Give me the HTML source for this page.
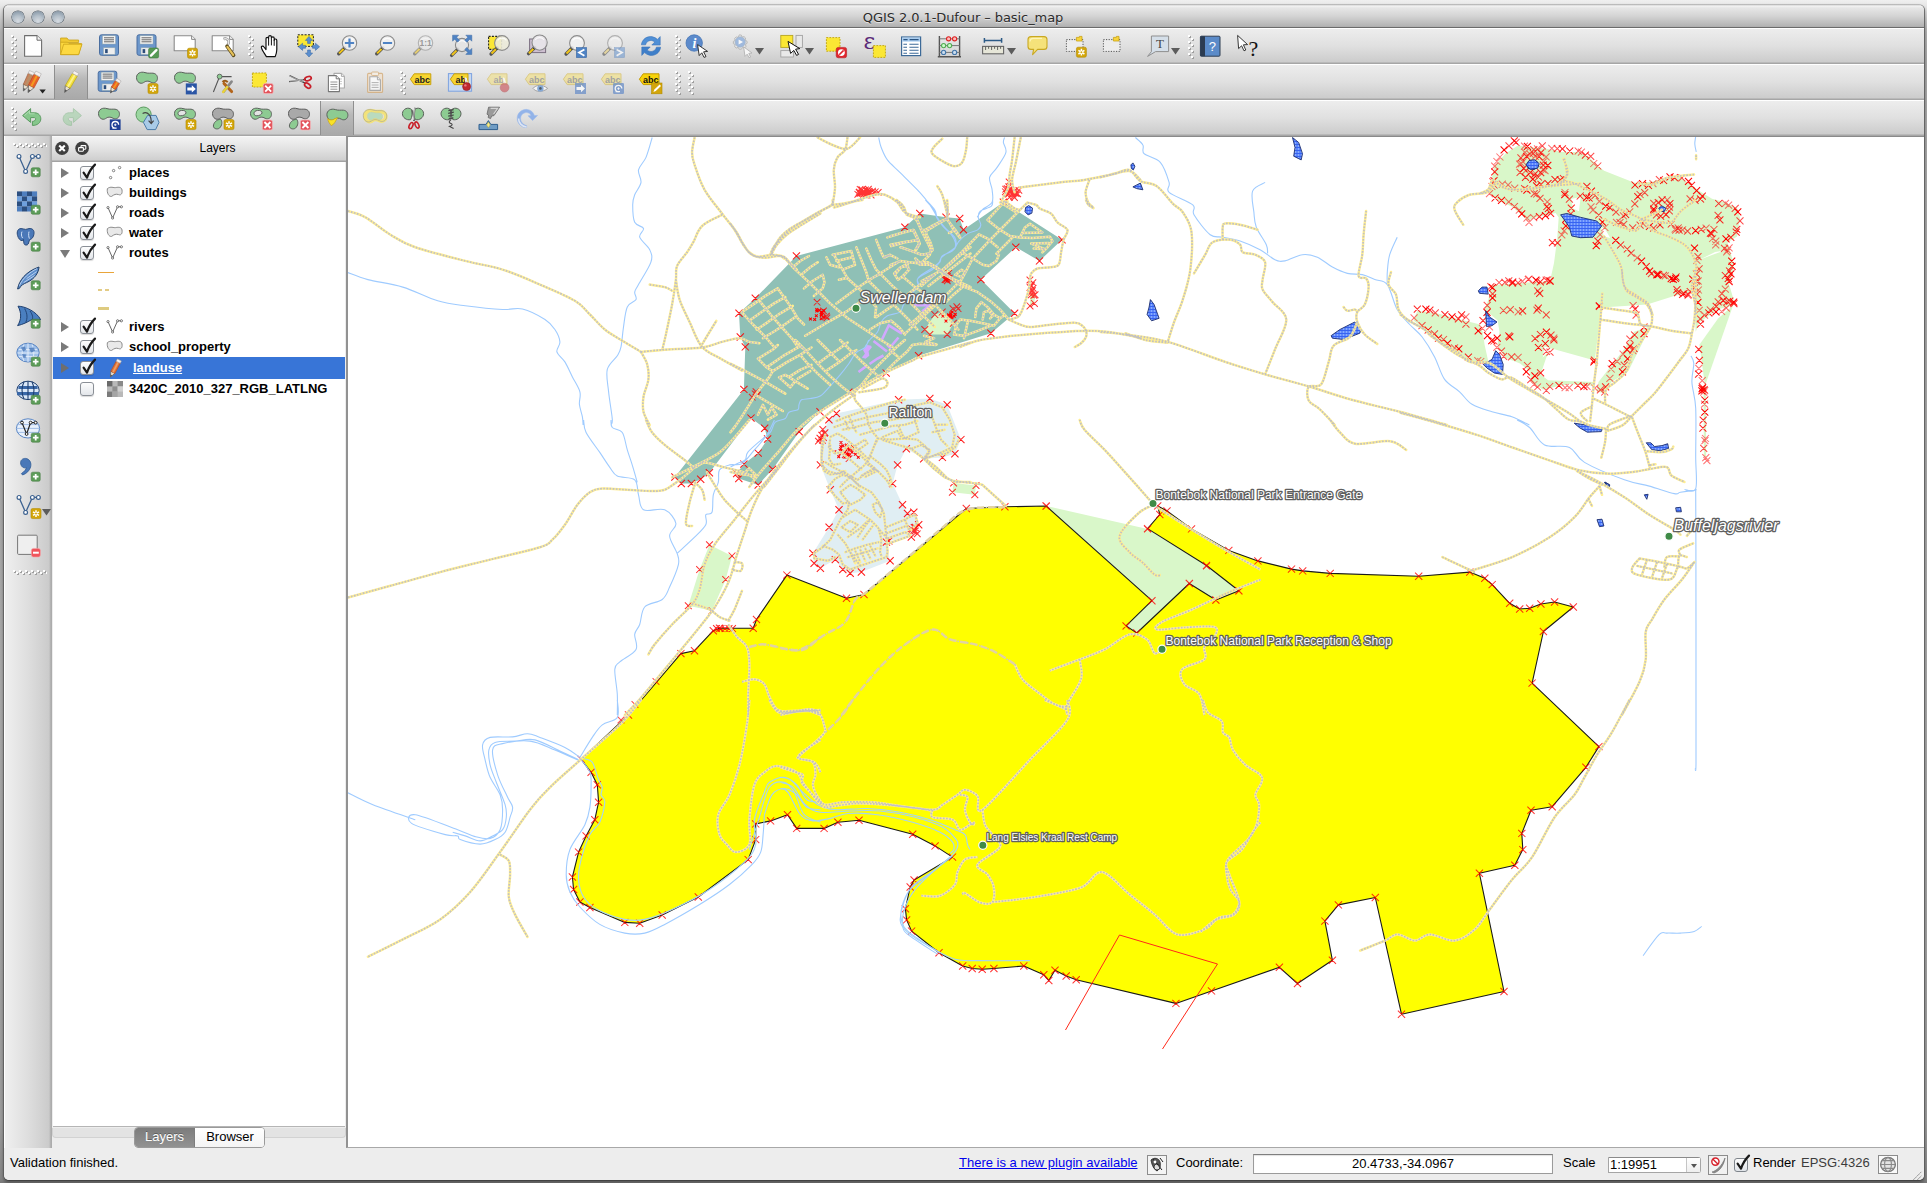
<!DOCTYPE html>
<html lang="en">
<head>
<meta charset="utf-8">
<title>QGIS 2.0.1-Dufour - basic_map</title>
<style>
*{box-sizing:border-box;margin:0;padding:0}
html,body{width:1927px;height:1183px;overflow:hidden}
body{position:relative;font-family:"Liberation Sans",sans-serif;font-size:13px;color:#000;
 background:linear-gradient(to bottom,#efefef 0,#e6e6e6 6px,#c4c4c4 20px,#b0b0b0 32px,#a6a6a6 60px,#a8a8a8 700px,#9c9c9c 1120px,#868686 1178px,#787878 1183px)}
.abs{position:absolute}
#win{position:absolute;left:4px;top:5px;width:1920px;height:1175px;background:#ededed;border-radius:5px 5px 5px 5px;
 box-shadow:0 -1px 0 0 rgba(120,120,120,.35),-1px 0 0 0 rgba(90,90,90,.75),1px 0 0 0 rgba(90,90,90,.75),0 1px 0 0 rgba(60,60,60,.8),0 2px 3px 1px rgba(0,0,0,.3);overflow:hidden}
#title{position:absolute;left:0;top:0;width:1920px;height:23px;background:linear-gradient(to bottom,#cfcfcf 0,#f3f3f3 1px,#e6e6e6 3px,#d4d4d4 11px,#b4b4b4 21px,#ababab 22px);border-bottom:1px solid #6b6b6b;
 font-family:"DejaVu Sans","Liberation Sans",sans-serif;font-size:13px;line-height:26px;text-align:center;color:#2b2b2b;padding-right:2px;letter-spacing:-0.07px;text-shadow:0 1px 0 rgba(255,255,255,.55)}
.tl{position:absolute;top:6px;width:12px;height:12px;border-radius:50%;
 background:radial-gradient(circle at 50% 85%,#d6dbe1 0,#b4bfc9 45%,#94a3b1 75%,#5d6a77 100%);box-shadow:0 0 0 .6px #4d5964,0 1px 0 rgba(255,255,255,.6)}
.tb{position:absolute;left:0;width:1920px;height:36px;background:linear-gradient(to bottom,#fff 0,#fff 1px,#ededed 1px,#e0e0e0 50%,#cccccc 34px,#a6a6a6 35px)}
.grip{position:absolute;width:5px;height:24px;
 background-image:radial-gradient(circle at 1px 1px,#fff 0,#fff .7px,rgba(255,255,255,0) 1.1px),radial-gradient(circle at 2px 2px,#9e9e9e 0,#9e9e9e .9px,rgba(158,158,158,0) 1.4px);background-size:3px 6px}
.grip.g2{background-position:0 3px;}
.pressed{position:absolute;height:34px;top:1px;background:linear-gradient(to bottom,#d9d9d9 0,#b9b9b9 40%,#a9a9a9 100%);border-left:1px solid #8f8f8f;border-right:1px solid #8f8f8f}
.ic{position:absolute;width:24px;height:24px;overflow:visible}
#ltb{position:absolute;left:0;top:131px;width:48px;height:1012px;background:linear-gradient(to right,#fff 0,#fff 1px,#efefef 1.5px,#dedede 50%,#cbcbcb 45px,#acacac 47px)}
#lpanel{position:absolute;left:48px;top:131px;width:295px;height:1012px;background:#ededed}
#lhead{position:absolute;left:0;top:0;width:295px;height:26px;background:linear-gradient(to bottom,#fff 0,#f3f3f3 1px,#e2e2e2 50%,#cfcfcf 24px,#a3a3a3 25px);text-align:center;font-size:12px;line-height:25px;padding-left:36px}
#ltree{position:absolute;left:1px;top:26px;width:292px;height:965px;background:#fff;border-bottom:1px solid #b5b5b5}
.row{position:absolute;left:0;width:292px;height:20px;font-weight:bold;font-size:13px;line-height:20px;white-space:nowrap}
.row .nm{position:absolute;left:76px;top:0}
.tri{position:absolute;left:8px;top:5px;width:0;height:0;border-left:8px solid #7a7a7a;border-top:5px solid transparent;border-bottom:5px solid transparent}
.trid{position:absolute;left:7px;top:7px;width:0;height:0;border-top:8px solid #7a7a7a;border-left:5px solid transparent;border-right:5px solid transparent}
.cb{position:absolute;left:27px;top:3px;width:14px;height:14px;border:1px solid #8a8f96;border-radius:3px;background:linear-gradient(to bottom,#fdfdfd,#e3e6ea);box-shadow:0 1px 1px rgba(0,0,0,.15)}
#map{position:absolute;left:341.5px;top:131px;width:1578.5px;height:1012px;background:#fff;border-left:2px solid #929292;border-top:1px solid #8a8a8a;border-bottom:1px solid #a8a8a8;overflow:hidden}
#status{position:absolute;left:0;top:1143px;width:1920px;height:32px;background:#ededed;font-size:13px}
#status span,#status a{position:absolute;top:7px;line-height:16px;white-space:nowrap}
</style>
</head>
<body>
<div id="win">
<div id="title">QGIS 2.0.1-Dufour – basic_map</div>
<div class="tl" style="left:7.8px"></div><div class="tl" style="left:27.8px"></div><div class="tl" style="left:47.8px"></div>
<div class="tb" style="top:23px"></div>
<div class="tb" style="top:59px"></div>
<div class="tb" style="top:95px"></div>
<div class="pressed" style="left:50px;top:60px;width:34px"></div>
<div class="pressed" style="left:316px;top:96px;width:34px"></div>
<div class="grip" style="left:7px;top:30px;width:3px;height:24px"></div><div class="grip" style="left:10px;top:33px;width:3px;height:21px"></div>
<svg class="ic" style="left:17px;top:29px;width:24px;height:24px" viewBox="0 0 24 24"><path d="M3.6,1.6H16.0L20.6,6.199999999999999V22.200000000000003H3.6Z" fill="#fff" stroke="#6d6d6d" stroke-width="1.1" stroke-linejoin="round"/><path d="M16.0,1.6V6.199999999999999H20.6" fill="#f4f4f4" stroke="#6d6d6d" stroke-width="1"/></svg>
<svg class="ic" style="left:55px;top:29px;width:24px;height:24px" viewBox="0 0 24 24"><path d="M1.6,4H8l1.6,2H19.6V8.5H1.6Z" fill="#f1c933" stroke="#c9a21b" stroke-width=".8"/><path d="M1.6,20.6L1.6,8.2H8.6L10,9.6H22.6L19.6,20.6Z" fill="#fcd83f" stroke="#d0a81d" stroke-width=".9" stroke-linejoin="round"/><path d="M1.6,20.6L4.6,10.2H23L19.6,20.6Z" fill="#fdd942" stroke="#d0a81d" stroke-width=".9" stroke-linejoin="round"/></svg>
<svg class="ic" style="left:93px;top:29px;width:24px;height:24px" viewBox="0 0 24 24"><rect x="2.5" y="0.8" width="19.0" height="20.5" rx="2" fill="#6c97cc" stroke="#4a6ea0" stroke-width="1"/><rect x="5.5" y="1.8" width="13.0" height="8.2" fill="#f4f4f4" stroke="#9aa" stroke-width=".5"/><path d="M7.0,3.8h10.0M7.0,5.8h10.0M7.0,7.8h10.0" stroke="#555" stroke-width=".9"/><rect x="6.5" y="13.8" width="11.5" height="6.5" fill="#eee" stroke="#9aa" stroke-width=".5"/><rect x="8.1" y="15.100000000000001" width="2.6" height="4.0" fill="#2c4d7a"/></svg>
<svg class="ic" style="left:131px;top:29px;width:24px;height:24px" viewBox="0 0 24 24"><rect x="2" y="0.8" width="19.0" height="20.5" rx="2" fill="#6c97cc" stroke="#4a6ea0" stroke-width="1"/><rect x="5.0" y="1.8" width="13.0" height="8.2" fill="#f4f4f4" stroke="#9aa" stroke-width=".5"/><path d="M6.5,3.8h10.0M6.5,5.8h10.0M6.5,7.8h10.0" stroke="#555" stroke-width=".9"/><rect x="6.0" y="13.8" width="11.5" height="6.5" fill="#eee" stroke="#9aa" stroke-width=".5"/><rect x="7.6" y="15.100000000000001" width="2.6" height="4.0" fill="#2c4d7a"/><rect x="13.6" y="14" width="10" height="10" rx="1.6" fill="#559a55" stroke="#3d7a3f" stroke-width=".6"/><path d="M16,21.6L21.4,16.2" stroke="#fff" stroke-width="2.4" stroke-linecap="round"/></svg>
<svg class="ic" style="left:169px;top:29px;width:24px;height:24px" viewBox="0 0 24 24"><path d="M1.2,1.8H18.599999999999998L22.2,5.4V16.8H1.2Z" fill="#fff" stroke="#8a8a8a" stroke-width="1.1" stroke-linejoin="round"/><path d="M18.599999999999998,1.8V5.4H22.2" fill="#f4f4f4" stroke="#8a8a8a" stroke-width="1"/><g opacity="1"><rect x="14.5" y="14.2" width="10" height="10" rx="1.6" fill="#d3a60a" stroke="#b38b00" stroke-width=".6"/><path d="M19.5,15.799999999999999V22.6M16.5,17.4L22.5,21.0M16.5,21.0L22.5,17.4" stroke="#fff" stroke-width="1.5" fill="none"/><circle cx="19.5" cy="19.2" r="1" fill="#d3a60a"/></g></svg>
<svg class="ic" style="left:207px;top:29px;width:24px;height:24px" viewBox="0 0 24 24"><path d="M1.2,1.8H18.599999999999998L22.2,5.4V16.8H1.2Z" fill="#fff" stroke="#8a8a8a" stroke-width="1.1" stroke-linejoin="round"/><path d="M18.599999999999998,1.8V5.4H22.2" fill="#f4f4f4" stroke="#8a8a8a" stroke-width="1"/><path d="M12.5,5.2C14.5,4 17.4,5 17.8,7.6C18,9 17.4,10.2 16.4,10.8" fill="none" stroke="#888" stroke-width="2.6"/><path d="M12.5,5.2C14.5,4 17.4,5 17.8,7.6C18,9 17.4,10.2 16.4,10.8" fill="none" stroke="#e8e8e8" stroke-width="1.4"/><path d="M16,12.2L22.6,21.4" stroke="#5a4a1c" stroke-width="3.6" stroke-linecap="round"/><path d="M16.4,12.8L22.2,20.8" stroke="#e6c15a" stroke-width="2.2" stroke-linecap="round"/></svg>
<div class="grip" style="left:244px;top:30px;width:3px;height:24px"></div><div class="grip" style="left:247px;top:33px;width:3px;height:21px"></div>
<svg class="ic" style="left:255px;top:29px;width:24px;height:24px" viewBox="0 0 24 24"><path d="M7.4,22.6C5.6,19.6 3,16.2 2.4,13.6C2,12 4,11.4 5,13L7,15.6V4.8C7,3 9.6,3 9.6,4.8V3.2C9.6,1.2 12.4,1.2 12.4,3.2V4.2C12.4,2.4 15.2,2.4 15.2,4.2V6.2C15.2,4.6 17.8,4.6 17.8,6.4V15.6C17.8,18.6 17,20.6 16.2,22.6Z" fill="#fff" stroke="#111" stroke-width="1.2" stroke-linejoin="round"/><path d="M9.6,5V11.6M12.4,4.4V11.4M15.2,6V11.8" stroke="#111" stroke-width="1" fill="none"/></svg>
<svg class="ic" style="left:293px;top:29px;width:24px;height:24px" viewBox="0 0 24 24"><rect x="0.8" y="0.8" width="15.6" height="11.6" fill="#fbe734" stroke="#222" stroke-width="1" stroke-dasharray="2 1.4"/><g fill="#5b8fd0" stroke="#3f6ea8" stroke-width=".6"><path d="M12,2.4L15.6,6.4H13.4V9.4H10.6V6.4H8.4Z"/><path d="M12,23L8.4,19H10.6V16H13.4V19H15.6Z"/><path d="M1.4,12.8L5.6,9.2V11.4H8.6V14.2H5.6V16.4Z"/><path d="M22.6,12.8L18.4,9.2V11.4H15.4V14.2H18.4V16.4Z"/></g></svg>
<svg class="ic" style="left:331px;top:29px;width:24px;height:24px" viewBox="0 0 24 24"><g opacity="1"><path d="M9.915999999999999,13.584000000000001L3.7159999999999993,19.784" stroke="#555" stroke-width="3.4" stroke-linecap="round"/><path d="M8.716,14.784L4.115999999999999,19.384" stroke="#f0c419" stroke-width="2" stroke-linecap="butt"/><circle cx="9.716" cy="13.784" r="1.5" fill="#222"/><circle cx="14.5" cy="9" r="7.2" fill="#f1f1f1" fill-opacity=".9" stroke="#8b8b8b" stroke-width="1.1"/><path d="M10.18,6.48A5.4,5.4 0 0 1 18.82,6.48" fill="none" stroke="#fff" stroke-width="1.2" opacity=".8"/></g><path d="M14.5,4.4V13.6M9.9,9H19.1" stroke="#4f83c4" stroke-width="2.2"/></svg>
<svg class="ic" style="left:369px;top:29px;width:24px;height:24px" viewBox="0 0 24 24"><g opacity="1"><path d="M9.915999999999999,13.584000000000001L3.7159999999999993,19.784" stroke="#555" stroke-width="3.4" stroke-linecap="round"/><path d="M8.716,14.784L4.115999999999999,19.384" stroke="#f0c419" stroke-width="2" stroke-linecap="butt"/><circle cx="9.716" cy="13.784" r="1.5" fill="#222"/><circle cx="14.5" cy="9" r="7.2" fill="#f1f1f1" fill-opacity=".9" stroke="#8b8b8b" stroke-width="1.1"/><path d="M10.18,6.48A5.4,5.4 0 0 1 18.82,6.48" fill="none" stroke="#fff" stroke-width="1.2" opacity=".8"/></g><path d="M9.9,9H19.1" stroke="#4f83c4" stroke-width="2.2"/></svg>
<svg class="ic" style="left:407px;top:29px;width:24px;height:24px" viewBox="0 0 24 24"><g opacity="0.55"><path d="M9.915999999999999,13.584000000000001L3.7159999999999993,19.784" stroke="#555" stroke-width="3.4" stroke-linecap="round"/><path d="M8.716,14.784L4.115999999999999,19.384" stroke="#f0c419" stroke-width="2" stroke-linecap="butt"/><circle cx="9.716" cy="13.784" r="1.5" fill="#222"/><circle cx="14.5" cy="9" r="7.2" fill="#f1f1f1" fill-opacity=".9" stroke="#8b8b8b" stroke-width="1.1"/><path d="M10.18,6.48A5.4,5.4 0 0 1 18.82,6.48" fill="none" stroke="#fff" stroke-width="1.2" opacity=".8"/></g><text x="14.6" y="12" font-family="Liberation Sans,sans-serif" font-size="8.5" font-weight="bold" text-anchor="middle" fill="#9a9a9a">1:1</text></svg>
<svg class="ic" style="left:445px;top:29px;width:24px;height:24px" viewBox="0 0 24 24"><g opacity="1"><path d="M8.848,15.152L2.6480000000000015,21.351999999999997" stroke="#555" stroke-width="3.4" stroke-linecap="round"/><path d="M7.6480000000000015,16.352L3.048000000000001,20.951999999999998" stroke="#f0c419" stroke-width="2" stroke-linecap="butt"/><circle cx="8.648000000000001" cy="15.351999999999999" r="1.5" fill="#222"/><circle cx="13" cy="11" r="6.6" fill="#e4e4e4" fill-opacity=".9" stroke="#8b8b8b" stroke-width="1.1"/><path d="M9.040000000000001,8.690000000000001A4.949999999999999,4.949999999999999 0 0 1 16.96,8.690000000000001" fill="none" stroke="#fff" stroke-width="1.2" opacity=".8"/></g><g fill="#4f83c4" stroke="#3a68a3" stroke-width=".5"><path d="M3.6,1.2H9.6L7.6,3.2L10.6,6.2L8.6,8.2L5.6,5.2L3.6,7.2Z"/><path d="M22.8,1.2V7.2L20.8,5.2L17.8,8.2L15.8,6.2L18.8,3.2L16.8,1.2Z"/><path d="M22.8,20.4H16.8L18.8,18.4L15.8,15.4L17.8,13.4L20.8,16.4L22.8,14.4Z"/></g></svg>
<svg class="ic" style="left:483px;top:29px;width:24px;height:24px" viewBox="0 0 24 24"><rect x="1.6" y="2.4" width="13" height="13" fill="#fbe734" stroke="#222" stroke-width="1.1" stroke-dasharray="2 1.3"/><g opacity="1"><path d="M10.272,13.728L4.072000000000001,19.927999999999997" stroke="#555" stroke-width="3.4" stroke-linecap="round"/><path d="M9.072000000000001,14.927999999999999L4.472,19.528" stroke="#f0c419" stroke-width="2" stroke-linecap="butt"/><circle cx="10.072000000000001" cy="13.927999999999999" r="1.5" fill="#222"/><circle cx="15" cy="9" r="7.4" fill="#ecebd9" fill-opacity=".9" stroke="#8b8b8b" stroke-width="1.1"/><path d="M10.559999999999999,6.41A5.550000000000001,5.550000000000001 0 0 1 19.44,6.41" fill="none" stroke="#fff" stroke-width="1.2" opacity=".8"/></g></svg>
<svg class="ic" style="left:521px;top:29px;width:24px;height:24px" viewBox="0 0 24 24"><rect x="4.6" y="5" width="16" height="13.6" fill="#cdbfd0" stroke="#7b6f80" stroke-width="1"/><g opacity="1"><path d="M9.728,13.472L3.5280000000000005,19.671999999999997" stroke="#555" stroke-width="3.4" stroke-linecap="round"/><path d="M8.528,14.671999999999999L3.928,19.272" stroke="#f0c419" stroke-width="2" stroke-linecap="butt"/><circle cx="9.528" cy="13.671999999999999" r="1.5" fill="#222"/><circle cx="14.6" cy="8.6" r="7.6" fill="#e9e6ea" fill-opacity=".9" stroke="#8b8b8b" stroke-width="1.1"/><path d="M10.04,5.9399999999999995A5.699999999999999,5.699999999999999 0 0 1 19.16,5.9399999999999995" fill="none" stroke="#fff" stroke-width="1.2" opacity=".8"/></g></svg>
<svg class="ic" style="left:559px;top:29px;width:24px;height:24px" viewBox="0 0 24 24"><g opacity="1"><path d="M9.272,13.728L3.072000000000001,19.927999999999997" stroke="#555" stroke-width="3.4" stroke-linecap="round"/><path d="M8.072000000000001,14.927999999999999L3.4720000000000004,19.528" stroke="#f0c419" stroke-width="2" stroke-linecap="butt"/><circle cx="9.072000000000001" cy="13.927999999999999" r="1.5" fill="#222"/><circle cx="14" cy="9" r="7.4" fill="#f1f1f1" fill-opacity=".9" stroke="#8b8b8b" stroke-width="1.1"/><path d="M9.559999999999999,6.41A5.550000000000001,5.550000000000001 0 0 1 18.44,6.41" fill="none" stroke="#fff" stroke-width="1.2" opacity=".8"/></g><rect x="13.4" y="13.6" width="10.2" height="10" fill="#4f83c4" stroke="#3a68a3" stroke-width=".6"/><path d="M21.4,15.4L16,18.6L21.4,21.8" fill="none" stroke="#fff" stroke-width="1.8"/></svg>
<svg class="ic" style="left:597px;top:29px;width:24px;height:24px" viewBox="0 0 24 24"><g opacity="0.6"><path d="M9.272,13.728L3.072000000000001,19.927999999999997" stroke="#555" stroke-width="3.4" stroke-linecap="round"/><path d="M8.072000000000001,14.927999999999999L3.4720000000000004,19.528" stroke="#ecd37a" stroke-width="2" stroke-linecap="butt"/><circle cx="9.072000000000001" cy="13.927999999999999" r="1.5" fill="#222"/><circle cx="14" cy="9" r="7.4" fill="#f1f1f1" fill-opacity=".9" stroke="#8b8b8b" stroke-width="1.1"/><path d="M9.559999999999999,6.41A5.550000000000001,5.550000000000001 0 0 1 18.44,6.41" fill="none" stroke="#fff" stroke-width="1.2" opacity=".8"/></g><g opacity=".65"><rect x="13.4" y="13.6" width="10.2" height="10" fill="#7ba2d4" stroke="#6a8ebd" stroke-width=".6"/><path d="M15.6,15.4L21,18.6L15.6,21.8" fill="none" stroke="#fff" stroke-width="1.8"/></g></svg>
<svg class="ic" style="left:635px;top:29px;width:24px;height:24px" viewBox="0 0 24 24"><path d="M2.4,10.8C3,5.4 8,1.6 13.6,2.8C15.6,3.2 17.2,4.2 18.4,5.4L21.2,2.6V11H12.8L15.8,8C14,6.4 11.6,6 9.6,7C8,7.8 7,9.2 6.6,10.8Z" fill="#4f8fd6" stroke="#3a73b8" stroke-width=".6"/><path d="M21.6,13.2C21,18.6 16,22.4 10.4,21.2C8.4,20.8 6.8,19.8 5.6,18.6L2.8,21.4V13H11.2L8.2,16C10,17.6 12.4,18 14.4,17C16,16.2 17,14.8 17.4,13.2Z" fill="#3f7fc9" stroke="#3a73b8" stroke-width=".6"/></svg>
<div class="grip" style="left:671px;top:30px;width:3px;height:24px"></div><div class="grip" style="left:674px;top:33px;width:3px;height:21px"></div>
<svg class="ic" style="left:681px;top:29px;width:24px;height:24px" viewBox="0 0 24 24"><circle cx="9.2" cy="9" r="8.2" fill="#5c8acb" stroke="#4676b6" stroke-width=".8"/><text x="9.4" y="14" font-family="Liberation Serif,serif" font-size="14" font-weight="bold" font-style="italic" text-anchor="middle" fill="#fff">i</text><path d="M12.6,10.6L22.6,17.4L18.6,17.8L21,22.6L19,23.4L16.8,18.8L14.2,21.6Z" fill="#fff" stroke="#222" stroke-width=".9" stroke-linejoin="round"/></svg>
<svg class="ic" style="left:725px;top:29px;width:24px;height:24px" viewBox="0 0 24 24"><g opacity=".8"><path d="M10.4,0.8L12.4,1.2L13,3.2L15,2.6L16.6,4L16,6L17.8,7L18.2,9.2L16.4,10.4L17,12.4L15.6,14L13.6,13.4L12.4,15.2H10.2L9.2,13.4L7.2,14L5.6,12.6L6.2,10.6L4.4,9.6V7.4L6.2,6.4L5.6,4.4L7.2,3L9.2,3.4Z" fill="#e9e9e9" stroke="#a9a9a9" stroke-width=".9"/><circle cx="11.2" cy="8" r="5.2" fill="#8fb0dd" stroke="#9ab" stroke-width=".6"/><path d="M9.6,5.4L14,8L9.6,10.6Z" fill="#fff"/><path d="M14.6,12.8L23,19L19.8,19.4L21.6,23L20,23.6L18.2,20.2L16,22.4Z" fill="#fff" stroke="#aaa" stroke-width=".9"/></g></svg>
<svg class="ic" style="left:775px;top:29px;width:24px;height:24px" viewBox="0 0 24 24"><rect x="1.8" y="1.4" width="12" height="12" fill="#fbe734" stroke="#b7a523" stroke-width=".9"/><rect x="17" y="1.4" width="6.4" height="12" fill="#e9e9e9" stroke="#a2a2a2" stroke-width=".9"/><rect x="1.8" y="16.6" width="12.6" height="6.4" fill="#e9e9e9" stroke="#a2a2a2" stroke-width=".9"/><path d="M9,7.4L20.8,14.6L16.6,15.2L19.6,20.4L17.6,21.4L14.8,16.4L11.6,19.4Z" fill="#fff" stroke="#111" stroke-width="1" stroke-linejoin="round"/></svg>
<svg class="ic" style="left:821px;top:29px;width:24px;height:24px" viewBox="0 0 24 24"><rect x="1.4" y="3.6" width="13.6" height="13.6" fill="#fbe734" stroke="#c4a915" stroke-width="1" stroke-dasharray="1.8 1.2"/><rect x="11.2" y="13.4" width="10.4" height="10.4" rx="2" fill="#e0252c" stroke="#b71c22" stroke-width=".6"/><circle cx="16.4" cy="18.6" r="3.4" fill="#fff"/><path d="M14.2,20.8L18.6,16.4" stroke="#e0252c" stroke-width="1.6"/></svg>
<svg class="ic" style="left:859px;top:29px;width:24px;height:24px" viewBox="0 0 24 24"><text x="6.4" y="15.4" font-family="DejaVu Serif,Liberation Serif,serif" font-size="23" text-anchor="middle" fill="#5b2a78">ε</text><rect x="10.4" y="11.6" width="12" height="11.8" fill="#fbe734" stroke="#c4a915" stroke-width="1" stroke-dasharray="1.8 1.2"/></svg>
<svg class="ic" style="left:895px;top:29px;width:24px;height:24px" viewBox="0 0 24 24"><rect x="2.6" y="3" width="19" height="18.6" fill="#fff" stroke="#3d6a98" stroke-width="1.2"/><rect x="3.2" y="3.6" width="17.8" height="4" fill="#a9cdf0"/><path d="M4.4,5.6H8.6M10.6,5.6H19.6" stroke="#2a5482" stroke-width="1.4"/><path d="M4.4,10.2H8M10.4,10.2H19.6M4.4,13.2H8M10.4,13.2H19.6M4.4,16.2H8M10.4,16.2H19.6M4.4,19.2H8M10.4,19.2H19.6" stroke="#3d6a98" stroke-width="1.1"/></svg>
<svg class="ic" style="left:933px;top:29px;width:24px;height:24px" viewBox="0 0 24 24"><path d="M2.4,2V22.6M22.6,2V22.6M0.8,22.8H24" stroke="#555" stroke-width="1.4" fill="none"/><path d="M2.4,4.8H22.6M2.4,11.6H22.6M2.4,18.4H22.6" stroke="#777" stroke-width="1"/><g stroke-width="1.1"><circle cx="11.6" cy="4.8" r="2.1" fill="#fbb" stroke="#d22"/><circle cx="17.6" cy="4.8" r="2.1" fill="#fbb" stroke="#d22"/><circle cx="6.6" cy="11.6" r="2.1" fill="#cfc" stroke="#5a5"/><circle cx="12.6" cy="11.6" r="2.1" fill="#cfc" stroke="#5a5"/><circle cx="6.6" cy="18.4" r="2.1" fill="#cde" stroke="#47a"/><circle cx="17.6" cy="18.4" r="2.1" fill="#cde" stroke="#47a"/></g></svg>
<svg class="ic" style="left:977px;top:29px;width:24px;height:24px" viewBox="0 0 24 24"><path d="M3.4,6.4H20.6M3.4,4V8.8M20.6,4V8.8" stroke="#2c5a86" stroke-width="1.5" fill="none"/><rect x="1.6" y="12.4" width="21" height="7.4" fill="#e6e6d8" stroke="#666" stroke-width="1.1"/><path d="M4.6,12.6V16M7.6,12.6V14.8M10.6,12.6V16M13.6,12.6V14.8M16.6,12.6V16M19.6,12.6V14.8" stroke="#555" stroke-width=".9"/></svg>
<svg class="ic" style="left:1021px;top:29px;width:24px;height:24px" viewBox="0 0 24 24"><path d="M6,2.6H19C20.8,2.6 22,3.8 22,5.6V12.4C22,14.2 20.8,15.4 19,15.4H12.6L7.6,20.6L8.6,15.4H6C4.2,15.4 3,14.2 3,12.4V5.6C3,3.8 4.2,2.6 6,2.6Z" fill="#f5e27a" stroke="#c9a822" stroke-width="1.1" stroke-linejoin="round"/><path d="M5,7.6C5,5.4 6,4.4 8,4.4H17" fill="none" stroke="#fdf4b8" stroke-width="1.3"/></svg>
<svg class="ic" style="left:1060px;top:29px;width:24px;height:24px" viewBox="0 0 24 24"><rect x="2.4" y="5.6" width="16.6" height="11.8" fill="#ececec" stroke="#555" stroke-width="1" stroke-dasharray="1.2 1.4"/><path d="M12.4,3.4H15.4V2.4H18V7H12.4Z" fill="#f7d43a" stroke="#c9a215" stroke-width=".8"/><g opacity="1"><rect x="12.4" y="13.2" width="10" height="10" rx="1.6" fill="#d3a60a" stroke="#b38b00" stroke-width=".6"/><path d="M17.4,14.799999999999999V21.6M14.4,16.4L20.4,20.0M14.4,20.0L20.4,16.4" stroke="#fff" stroke-width="1.5" fill="none"/><circle cx="17.4" cy="18.2" r="1" fill="#d3a60a"/></g></svg>
<svg class="ic" style="left:1097px;top:29px;width:24px;height:24px" viewBox="0 0 24 24"><rect x="2.4" y="5.6" width="16.6" height="11.8" fill="#ececec" stroke="#555" stroke-width="1" stroke-dasharray="1.2 1.4"/><path d="M12.4,3.4H15.4V2.4H18V7H12.4Z" fill="#f7d43a" stroke="#c9a215" stroke-width=".8"/></svg>
<svg class="ic" style="left:1142px;top:29px;width:24px;height:24px" viewBox="0 0 24 24"><path d="M5.4,2H22.6V17.6H9.6L1.6,22.4L5.4,17.6Z" fill="#d5dfe9" stroke="#8f8f8f" stroke-width="1" stroke-linejoin="round"/><text x="14" y="14.2" font-family="Liberation Serif,serif" font-size="13" text-anchor="middle" fill="#444">T</text></svg>
<svg class="ic" style="left:750.5px;top:42.5px;width:9px;height:7px" viewBox="0 0 9 7"><path d="M0,0h9l-4.5,6.6z" fill="#5c5c5c"/></svg>
<svg class="ic" style="left:800.5px;top:42.5px;width:9px;height:7px" viewBox="0 0 9 7"><path d="M0,0h9l-4.5,6.6z" fill="#5c5c5c"/></svg>
<svg class="ic" style="left:1002.5px;top:42.5px;width:9px;height:7px" viewBox="0 0 9 7"><path d="M0,0h9l-4.5,6.6z" fill="#5c5c5c"/></svg>
<svg class="ic" style="left:1166.5px;top:42.5px;width:9px;height:7px" viewBox="0 0 9 7"><path d="M0,0h9l-4.5,6.6z" fill="#5c5c5c"/></svg>
<div class="grip" style="left:1184px;top:30px;width:3px;height:24px"></div><div class="grip" style="left:1187px;top:33px;width:3px;height:21px"></div>
<svg class="ic" style="left:1194px;top:29px;width:24px;height:24px" viewBox="0 0 24 24"><rect x="2.4" y="2.2" width="19.6" height="20" rx="1" fill="#5b8bc9" stroke="#2f3e53" stroke-width="1"/><rect x="2.4" y="2.2" width="4.6" height="20" fill="#2c3c52"/><text x="14.4" y="17.4" font-family="Liberation Sans,sans-serif" font-size="13" text-anchor="middle" fill="#fff">?</text></svg>
<svg class="ic" style="left:1232px;top:29px;width:24px;height:24px" viewBox="0 0 24 24"><path d="M1.6,1.4L11.6,10.6L7.4,10.8L9.8,16L8,16.8L5.6,11.8L2.6,14.6Z" fill="#fff" stroke="#222" stroke-width=".9" stroke-linejoin="round"/><text x="17.4" y="21.6" font-family="Liberation Serif,serif" font-size="22" text-anchor="middle" fill="#111">?</text></svg>
<div class="grip" style="left:7px;top:66px;width:3px;height:24px"></div><div class="grip" style="left:10px;top:69px;width:3px;height:21px"></div>
<svg class="ic" style="left:17px;top:65px;width:24px;height:24px" viewBox="0 0 24 24"><g opacity="1"><path d="M2.4,21.0L7.4,16.4L2.4,14.2Z" fill="#e8e0d0" stroke="#666" stroke-width=".8" stroke-linejoin="round"/><path d="M2.4,21.0L4.6,18.9L2.4,18.0Z" fill="#555"/><path d="M7.4,16.4L12.3,5.4L7.3,3.2L2.4,14.2Z" fill="#c8835c" stroke="#9a6040" stroke-width=".7"/><path d="M4.9,15.3L9.8,4.3" stroke="#b7906a" stroke-width="1.8"/><path d="M12.3,5.4L13.5,2.7L8.5,0.5L7.3,3.2Z" fill="#f6f0ee" stroke="#aaa" stroke-width=".6"/></g><g opacity="1"><path d="M7.0,22.6L13.1,17.7L7.6,14.8Z" fill="#e8e0d0" stroke="#666" stroke-width=".8" stroke-linejoin="round"/><path d="M7.0,22.6L9.7,20.4L7.3,19.1Z" fill="#555"/><path d="M13.1,17.7L18.8,6.9L13.3,4.0L7.6,14.8Z" fill="#e8622a" stroke="#c24a1c" stroke-width=".7"/><path d="M10.3,16.3L16.0,5.4" stroke="#f39a1f" stroke-width="2.1"/><path d="M18.8,6.9L20.3,3.8L14.9,1.0L13.3,4.0Z" fill="#f6f0ee" stroke="#aaa" stroke-width=".6"/></g><path d="M18.4,19.6h6.4l-3.2,3.8z" fill="#222"/></svg>
<svg class="ic" style="left:55px;top:65px;width:24px;height:24px" viewBox="0 0 24 24"><g opacity="1"><path d="M5.6,22.4L11.2,18.2L6.4,15.4Z" fill="#e8e0d0" stroke="#666" stroke-width=".8" stroke-linejoin="round"/><path d="M5.6,22.4L8.1,20.5L6.0,19.3Z" fill="#555"/><path d="M11.2,18.2L18.3,6.1L13.4,3.3L6.4,15.4Z" fill="#f2df3a" stroke="#b8a31e" stroke-width=".7"/><path d="M8.8,16.8L15.9,4.7" stroke="#fdf28a" stroke-width="1.9"/><path d="M18.3,6.1L19.8,3.4L15.0,0.6L13.4,3.3Z" fill="#f6f0ee" stroke="#aaa" stroke-width=".6"/></g></svg>
<svg class="ic" style="left:93px;top:65px;width:24px;height:24px" viewBox="0 0 24 24"><rect x="1.2" y="1.2" width="18.62" height="20.09" rx="2" fill="#6c97cc" stroke="#4a6ea0" stroke-width="1"/><rect x="4.14" y="2.1799999999999997" width="12.74" height="8.036" fill="#f4f4f4" stroke="#9aa" stroke-width=".5"/><path d="M5.61,4.14h9.8M5.61,6.1000000000000005h9.8M5.61,8.059999999999999h9.8" stroke="#555" stroke-width=".9"/><rect x="5.12" y="13.94" width="11.27" height="6.37" fill="#eee" stroke="#9aa" stroke-width=".5"/><rect x="6.688" y="15.214" width="2.548" height="3.92" fill="#2c4d7a"/><g opacity="1"><path d="M13.4,23.0L18.6,19.5L14.4,16.8Z" fill="#e8e0d0" stroke="#666" stroke-width=".8" stroke-linejoin="round"/><path d="M13.4,23.0L15.7,21.4L13.9,20.2Z" fill="#555"/><path d="M18.6,19.5L22.6,13.3L18.4,10.6L14.4,16.8Z" fill="#e8622a" stroke="#c24a1c" stroke-width=".7"/><path d="M16.5,18.2L20.5,11.9" stroke="#f39a1f" stroke-width="1.7"/><path d="M22.6,13.3L24.1,11.0L19.9,8.2L18.4,10.6Z" fill="#f6f0ee" stroke="#aaa" stroke-width=".6"/></g></svg>
<svg class="ic" style="left:131px;top:65px;width:24px;height:24px" viewBox="0 0 24 24"><path d="M1.5,7.5C1.5,3.5 5.5,1.2 10,2.6C13,3.6 15.5,3 18,3.2C21.5,3.6 23,6.5 22.3,9.5C21.6,12.6 18.2,13.6 16,12.2C13.5,10.6 10.5,10.8 8.5,12.6C5.5,14.6 1.5,12 1.5,7.5Z" fill="#8dcb92" stroke="#5b625c" stroke-width="1" transform="" opacity="1"/><g opacity="1"><rect x="13" y="13.6" width="10" height="10" rx="1.6" fill="#d3a60a" stroke="#b38b00" stroke-width=".6"/><path d="M18,15.2V22.0M15,16.8L21,20.400000000000002M15,20.400000000000002L21,16.8" stroke="#fff" stroke-width="1.5" fill="none"/><circle cx="18" cy="18.6" r="1" fill="#d3a60a"/></g></svg>
<svg class="ic" style="left:169px;top:65px;width:24px;height:24px" viewBox="0 0 24 24"><path d="M1.5,7.5C1.5,3.5 5.5,1.2 10,2.6C13,3.6 15.5,3 18,3.2C21.5,3.6 23,6.5 22.3,9.5C21.6,12.6 18.2,13.6 16,12.2C13.5,10.6 10.5,10.8 8.5,12.6C5.5,14.6 1.5,12 1.5,7.5Z" fill="#8dcb92" stroke="#5b625c" stroke-width="1" transform="" opacity="1"/><g opacity="1"><rect x="12.8" y="13.4" width="11" height="11" fill="#2a55a5"/><path d="M14.3,17.4H18.8V15.200000000000001L22.8,18.9L18.8,22.6V20.4H14.3Z" fill="#fff"/></g></svg>
<svg class="ic" style="left:207px;top:65px;width:24px;height:24px" viewBox="0 0 24 24"><path d="M2.4,22L8.6,6.6H20.6" fill="none" stroke="#555" stroke-width="1.1"/><circle cx="8.6" cy="6.6" r="2.4" fill="#8dcb92" stroke="#5b625c" stroke-width=".9"/><path d="M13,13.4L20.6,21.6" stroke="#b3651c" stroke-width="3" stroke-linecap="round"/><path d="M11.6,12C12.6,10.2 15.8,10.2 16.6,12.4" fill="none" stroke="#9a5a18" stroke-width="2"/><path d="M20.6,11.6L12.6,21.6" stroke="#888" stroke-width="2.6" stroke-linecap="round"/><path d="M16.2,17L12.2,22" stroke="#e8d23a" stroke-width="2.4" stroke-linecap="round"/></svg>
<svg class="ic" style="left:246px;top:65px;width:24px;height:24px" viewBox="0 0 24 24"><rect x="2.4" y="3" width="14" height="14" fill="#fbe734" stroke="#c4a915" stroke-width="1" stroke-dasharray="1.8 1.2"/><rect x="13.2" y="13.6" width="10" height="10" rx="1.6" fill="#e2525a" stroke="#f6b9bb" stroke-width=".7"/><path d="M15.2,15.6L21.2,21.6M21.2,15.6L15.2,21.6" stroke="#fff" stroke-width="1.8" fill="none"/></svg>
<svg class="ic" style="left:284px;top:65px;width:24px;height:24px" viewBox="0 0 24 24"><path d="M1.6,5.6L17.6,13.4M1,11.6L18,9.4" stroke="#444" stroke-width="1.4" fill="none"/><path d="M2,6.2L15,12M1.6,11.2L15,9.8" stroke="#ddd" stroke-width=".6" fill="none"/><ellipse cx="20" cy="8.6" rx="3.4" ry="2" fill="none" stroke="#c8202a" stroke-width="1.7" transform="rotate(-20 20 8.6)"/><ellipse cx="19.6" cy="15.6" rx="3.4" ry="2" fill="none" stroke="#c8202a" stroke-width="1.7" transform="rotate(35 19.6 15.6)"/></svg>
<svg class="ic" style="left:321px;top:65px;width:24px;height:24px" viewBox="0 0 24 24"><path d="M9,3.4H16.4L19.4,6.4V18.0H9Z" fill="#fff" stroke="#aaa" stroke-width="1.1" stroke-linejoin="round"/><path d="M16.4,3.4V6.4H19.4" fill="#f4f4f4" stroke="#aaa" stroke-width="1"/><path d="M11,9H17M11,11.4H17M11,13.8H17" stroke="#bbb" stroke-width=".8"/><path d="M3.4,5.6H11.2L14.4,8.8V21.6H3.4Z" fill="#fff" stroke="#777" stroke-width="1.1" stroke-linejoin="round"/><path d="M11.2,5.6V8.8H14.4" fill="#f4f4f4" stroke="#777" stroke-width="1"/><path d="M5.4,12H12.4M5.4,14.4H12.4M5.4,16.8H12.4M5.4,19.2H12.4" stroke="#888" stroke-width=".9"/></svg>
<svg class="ic" style="left:359px;top:65px;width:24px;height:24px" viewBox="0 0 24 24"><g opacity=".75"><rect x="4.6" y="3.4" width="15" height="19" rx="1" fill="#f1e2cf" stroke="#d3a871" stroke-width="1.1"/><rect x="8.6" y="2" width="7" height="3.6" rx="1" fill="#f7efe4" stroke="#d3a871" stroke-width="1"/><path d="M6.8,6.8H14.399999999999999L17.4,9.8V20.4H6.8Z" fill="#fff" stroke="#999" stroke-width="1.1" stroke-linejoin="round"/><path d="M14.399999999999999,6.8V9.8H17.4" fill="#f4f4f4" stroke="#999" stroke-width="1"/><path d="M8.6,12.6H15.6M8.6,15H15.6M8.6,17.4H15.6" stroke="#999" stroke-width=".9"/></g></svg>
<div class="grip" style="left:396px;top:66px;width:3px;height:24px"></div><div class="grip" style="left:399px;top:69px;width:3px;height:21px"></div>
<svg class="ic" style="left:405px;top:65px;width:24px;height:24px" viewBox="0 0 24 24"><g opacity="1"><path d="M5.199999999999999,3.8H21.799999999999997V14.6H5.199999999999999L1.4,9.2Z" fill="#f7d530" stroke="#c9a10c" stroke-width="1" stroke-linejoin="round"/><text x="13.2" y="12.5" font-family="Liberation Sans,sans-serif" font-size="9" font-weight="bold" text-anchor="middle" fill="#222">abc</text></g></svg>
<svg class="ic" style="left:444px;top:65px;width:24px;height:24px" viewBox="0 0 24 24"><rect x="0.4" y="3.6" width="23.2" height="17.6" fill="#c9d9f0" stroke="#7da2e0" stroke-width="1"/><g opacity="1"><path d="M6.199999999999999,3.8H20.0V14.6H6.199999999999999L2.4,9.2Z" fill="#f7d530" stroke="#c9a10c" stroke-width="1" stroke-linejoin="round"/><text x="12.8" y="12.5" font-family="Liberation Sans,sans-serif" font-size="9" font-weight="bold" text-anchor="middle" fill="#222">ab </text></g><path d="M17.6,8.6L19,13.6" stroke="#fff" stroke-width="2.2" stroke-linecap="round"/><path d="M17.6,8.6L19,13.6" stroke="#aaa" stroke-width=".5"/><circle cx="18.6" cy="16.6" r="4" fill="#c0282e" stroke="#8f1a20" stroke-width=".6"/><circle cx="17.4" cy="15.4" r="1.2" fill="#e57a7e"/></svg>
<svg class="ic" style="left:482px;top:65px;width:24px;height:24px" viewBox="0 0 24 24"><g opacity="0.55"><path d="M5.199999999999999,3.8H21.0V14.6H5.199999999999999L1.4,9.2Z" fill="#f3e07a" stroke="#d4b84a" stroke-width="1" stroke-linejoin="round"/><text x="12.8" y="12.5" font-family="Liberation Sans,sans-serif" font-size="9" font-weight="bold" text-anchor="middle" fill="#777">ab </text></g><g opacity=".75"><path d="M17.6,8.6L19,13.6" stroke="#fff" stroke-width="2.2" stroke-linecap="round"/><circle cx="18.6" cy="17.6" r="4.4" fill="#cf6a70" stroke="#b85a60" stroke-width=".6"/></g></svg>
<svg class="ic" style="left:520px;top:65px;width:24px;height:24px" viewBox="0 0 24 24"><g opacity="0.6"><path d="M5.199999999999999,3.8H21.0V14.6H5.199999999999999L1.4,9.2Z" fill="#f3e07a" stroke="#d4b84a" stroke-width="1" stroke-linejoin="round"/><text x="12.8" y="12.5" font-family="Liberation Sans,sans-serif" font-size="9" font-weight="bold" text-anchor="middle" fill="#777">abc</text></g><g opacity=".75"><path d="M9,18.4C12,14.4 19,14.4 23.6,18.4C19,22.4 12,22.4 9,18.4Z" fill="#fff" stroke="#888" stroke-width=".9"/><circle cx="16.4" cy="18.4" r="3.2" fill="#6a9ad6"/><circle cx="16.4" cy="18.4" r="1.3" fill="#234"/></g></svg>
<svg class="ic" style="left:558px;top:65px;width:24px;height:24px" viewBox="0 0 24 24"><g opacity="0.6"><path d="M5.199999999999999,3.8H21.0V14.6H5.199999999999999L1.4,9.2Z" fill="#f3e07a" stroke="#d4b84a" stroke-width="1" stroke-linejoin="round"/><text x="12.8" y="12.5" font-family="Liberation Sans,sans-serif" font-size="9" font-weight="bold" text-anchor="middle" fill="#777">abc</text></g><g opacity="0.75"><rect x="13" y="13" width="11" height="11" fill="#6a8fc9"/><path d="M14.5,17H19V14.8L23,18.5L19,22.2V20H14.5Z" fill="#fff"/></g></svg>
<svg class="ic" style="left:596px;top:65px;width:24px;height:24px" viewBox="0 0 24 24"><g opacity="0.6"><path d="M5.199999999999999,3.8H21.0V14.6H5.199999999999999L1.4,9.2Z" fill="#f3e07a" stroke="#d4b84a" stroke-width="1" stroke-linejoin="round"/><text x="12.8" y="12.5" font-family="Liberation Sans,sans-serif" font-size="9" font-weight="bold" text-anchor="middle" fill="#777">abc</text></g><g opacity=".75"><rect x="13" y="13" width="11" height="11" rx="1.2" fill="#6a8fc9"/><path d="M15.6,21.6H20M21.8,18.6A3.3,3.3 0 1 0 18.5,21.9" fill="none" stroke="#fff" stroke-width="1.3"/><path d="M18.5,17.4V19.8M17.3,18.6H19.7" stroke="#fff" stroke-width=".9"/></g></svg>
<svg class="ic" style="left:634px;top:65px;width:24px;height:24px" viewBox="0 0 24 24"><g opacity="1"><path d="M5.199999999999999,3.8H21.0V14.6H5.199999999999999L1.4,9.2Z" fill="#f7d30a" stroke="#c49a00" stroke-width="1" stroke-linejoin="round"/><text x="12.8" y="12.5" font-family="Liberation Sans,sans-serif" font-size="9" font-weight="bold" text-anchor="middle" fill="#111">abc</text></g><rect x="13.6" y="13" width="10.4" height="10.8" fill="#d3a60a" stroke="#b38b00" stroke-width=".6"/><path d="M15.4,22L16.4,19.4L21.6,14.6L23,16L17.8,21Z" fill="#fff"/></svg>
<div class="grip" style="left:671px;top:66px;width:3px;height:24px"></div><div class="grip" style="left:674px;top:69px;width:3px;height:21px"></div>
<div class="grip" style="left:684px;top:66px;width:3px;height:24px"></div><div class="grip" style="left:687px;top:69px;width:3px;height:21px"></div>
<div class="grip" style="left:7px;top:102px;width:3px;height:24px"></div><div class="grip" style="left:10px;top:105px;width:3px;height:21px"></div>
<svg class="ic" style="left:17px;top:101px;width:24px;height:24px" viewBox="0 0 24 24"><path d="M1.6,9.6L9.6,2.6V6.8H13.6C17.6,6.8 19.8,9.8 19.8,12.8C19.8,16.6 16.4,19.6 11.4,19.4V15.4C13.4,15.4 14.6,14.2 14.6,12.8C14.6,12 14,11.6 13,11.6H9.6V16.4Z" fill="#86c78c" stroke="#5a9a60" stroke-width="1" stroke-linejoin="round"/><path d="M3.4,9.6L8.6,5V7.8H13.6" fill="none" stroke="#b7e0ba" stroke-width=".8"/></svg>
<svg class="ic" style="left:55px;top:101px;width:24px;height:24px" viewBox="0 0 24 24"><g opacity=".55"><path d="M22.4,9.6L14.4,2.6V6.8H10.4C6.4,6.8 4.2,9.8 4.2,12.8C4.2,16.6 7.6,19.6 12.6,19.4V15.4C10.6,15.4 9.4,14.2 9.4,12.8C9.4,12 10,11.6 11,11.6H14.4V16.4Z" fill="#9acd9f" stroke="#7fb585" stroke-width="1" stroke-linejoin="round"/></g></svg>
<svg class="ic" style="left:93px;top:101px;width:24px;height:24px" viewBox="0 0 24 24"><path d="M1.5,7.5C1.5,3.5 5.5,1.2 10,2.6C13,3.6 15.5,3 18,3.2C21.5,3.6 23,6.5 22.3,9.5C21.6,12.6 18.2,13.6 16,12.2C13.5,10.6 10.5,10.8 8.5,12.6C5.5,14.6 1.5,12 1.5,7.5Z" fill="#8dcb92" stroke="#5b625c" stroke-width="1" transform="" opacity="1"/><rect x="12.8" y="13.4" width="10.8" height="10.6" fill="#1f3f96"/><path d="M15.4,22.2H19.6M21.6,18.8A3.3,3.3 0 1 0 18.3,22.1" fill="none" stroke="#fff" stroke-width="1.3"/><path d="M18.3,17.6V20M17.1,18.8H19.5" stroke="#fff" stroke-width=".9"/></svg>
<svg class="ic" style="left:131px;top:101px;width:24px;height:24px" viewBox="0 0 24 24"><circle cx="8.6" cy="8.6" r="7.6" fill="#9bd6a0" stroke="#5b9a60" stroke-width="1"/><path d="M12.6,9.4L21,9.4L24,16.4L20.6,23.6H12.2L8.4,16.4Z" fill="#a9cbe8" stroke="#4a7ba8" stroke-width="1" stroke-linejoin="round"/><path d="M7.6,7.4C12.6,4.6 16.6,9.6 16.2,17M13.6,14.6L16.2,17.6L18.6,14.6" fill="none" stroke="#444" stroke-width="1.2"/></svg>
<svg class="ic" style="left:169px;top:101px;width:24px;height:24px" viewBox="0 0 24 24"><path d="M1.5,7.5C1.5,3.5 5.5,1.2 10,2.6C13,3.6 15.5,3 18,3.2C21.5,3.6 23,6.5 22.3,9.5C21.6,12.6 18.2,13.6 16,12.2C13.5,10.6 10.5,10.8 8.5,12.6C5.5,14.6 1.5,12 1.5,7.5ZM5,7.6C5,9.4 7,10.2 9.6,9.6C12.2,9 13.6,7.2 12.8,5.8C12,4.4 9,4 7,4.8C5.6,5.4 5,6.4 5,7.6Z" fill="#8dcb92" stroke="#5b625c" stroke-width="1" fill-rule="evenodd"/><g opacity="1"><rect x="13" y="13.6" width="10" height="10" rx="1.6" fill="#d3a60a" stroke="#b38b00" stroke-width=".6"/><path d="M18,15.2V22.0M15,16.8L21,20.400000000000002M15,20.400000000000002L21,16.8" stroke="#fff" stroke-width="1.5" fill="none"/><circle cx="18" cy="18.6" r="1" fill="#d3a60a"/></g></svg>
<svg class="ic" style="left:207px;top:101px;width:24px;height:24px" viewBox="0 0 24 24"><path d="M1.5,7.5C1.5,3.5 5.5,1.2 10,2.6C13,3.6 15.5,3 18,3.2C21.5,3.6 23,6.5 22.3,9.5C21.6,12.6 18.2,13.6 16,12.2C13.5,10.6 10.5,10.8 8.5,12.6C5.5,14.6 1.5,12 1.5,7.5Z" fill="#a9a9a9" stroke="#5b5b5b" stroke-width="1" transform="" opacity="1"/><path d="M2.4,20.2C2.4,16.6 5.6,13.6 9.6,13.2C11.6,15.6 11.2,19.6 8.4,22.2C6.4,23.6 2.8,23 2.4,20.2Z" fill="#8dcb92" stroke="#5b625c" stroke-width="1"/><g opacity="1"><rect x="13" y="13.6" width="10" height="10" rx="1.6" fill="#d3a60a" stroke="#b38b00" stroke-width=".6"/><path d="M18,15.2V22.0M15,16.8L21,20.400000000000002M15,20.400000000000002L21,16.8" stroke="#fff" stroke-width="1.5" fill="none"/><circle cx="18" cy="18.6" r="1" fill="#d3a60a"/></g></svg>
<svg class="ic" style="left:245px;top:101px;width:24px;height:24px" viewBox="0 0 24 24"><path d="M1.5,7.5C1.5,3.5 5.5,1.2 10,2.6C13,3.6 15.5,3 18,3.2C21.5,3.6 23,6.5 22.3,9.5C21.6,12.6 18.2,13.6 16,12.2C13.5,10.6 10.5,10.8 8.5,12.6C5.5,14.6 1.5,12 1.5,7.5ZM5,7.6C5,9.4 7,10.2 9.6,9.6C12.2,9 13.6,7.2 12.8,5.8C12,4.4 9,4 7,4.8C5.6,5.4 5,6.4 5,7.6Z" fill="#8dcb92" stroke="#5b625c" stroke-width="1" fill-rule="evenodd"/><rect x="13.4" y="14" width="10" height="10" rx="1.6" fill="#e2525a" stroke="#f6b9bb" stroke-width=".7"/><path d="M15.4,16L21.4,22M21.4,16L15.4,22" stroke="#fff" stroke-width="1.8" fill="none"/></svg>
<svg class="ic" style="left:283px;top:101px;width:24px;height:24px" viewBox="0 0 24 24"><path d="M1.5,7.5C1.5,3.5 5.5,1.2 10,2.6C13,3.6 15.5,3 18,3.2C21.5,3.6 23,6.5 22.3,9.5C21.6,12.6 18.2,13.6 16,12.2C13.5,10.6 10.5,10.8 8.5,12.6C5.5,14.6 1.5,12 1.5,7.5Z" fill="#a9a9a9" stroke="#5b5b5b" stroke-width="1" transform="" opacity="1"/><path d="M2.4,20.2C2.4,16.6 5.6,13.6 9.6,13.2C11.6,15.6 11.2,19.6 8.4,22.2C6.4,23.6 2.8,23 2.4,20.2Z" fill="#8dcb92" stroke="#5b625c" stroke-width="1"/><rect x="13.4" y="14" width="10" height="10" rx="1.6" fill="#e2525a" stroke="#f6b9bb" stroke-width=".7"/><path d="M15.4,16L21.4,22M21.4,16L15.4,22" stroke="#fff" stroke-width="1.8" fill="none"/></svg>
<svg class="ic" style="left:321px;top:101px;width:24px;height:24px" viewBox="0 0 24 24"><path d="M1.5,7.5C1.5,3.5 5.5,1.2 10,2.6C13,3.6 15.5,3 18,3.2C21.5,3.6 23,6.5 22.3,9.5C21.6,12.6 18.2,13.6 16,12.2C13.5,10.6 10.5,10.8 8.5,12.6C5.5,14.6 1.5,12 1.5,7.5Z" fill="#8dcb92" stroke="#5b625c" stroke-width="1" transform="translate(0.4,1)" opacity="1"/><path d="M2.6,12.6C4.6,14.4 7.6,14.4 9.6,12.8C10.6,12.2 11.6,11.8 12.6,11.8C10.6,14.4 9.6,18.6 6.2,19.6C4.6,17.6 3.2,15.6 2.6,12.6Z" fill="#f9e227" stroke="#c9a515" stroke-width=".7"/></svg>
<svg class="ic" style="left:359px;top:101px;width:24px;height:24px" viewBox="0 0 24 24"><path d="M1.5,7.5C1.5,3.5 5.5,1.2 10,2.6C13,3.6 15.5,3 18,3.2C21.5,3.6 23,6.5 22.3,9.5C21.6,12.6 18.2,13.6 16,12.2C13.5,10.6 10.5,10.8 8.5,12.6C5.5,14.6 1.5,12 1.5,7.5Z" fill="none" stroke="#f3e37a" stroke-width="3.6" transform="translate(0.4,2.4)" stroke-linejoin="round"/><path d="M1.5,7.5C1.5,3.5 5.5,1.2 10,2.6C13,3.6 15.5,3 18,3.2C21.5,3.6 23,6.5 22.3,9.5C21.6,12.6 18.2,13.6 16,12.2C13.5,10.6 10.5,10.8 8.5,12.6C5.5,14.6 1.5,12 1.5,7.5Z" fill="none" stroke="#999" stroke-width=".5" transform="translate(12,9.6) scale(1.12) translate(-12,-7.6)"/><path d="M1.5,7.5C1.5,3.5 5.5,1.2 10,2.6C13,3.6 15.5,3 18,3.2C21.5,3.6 23,6.5 22.3,9.5C21.6,12.6 18.2,13.6 16,12.2C13.5,10.6 10.5,10.8 8.5,12.6C5.5,14.6 1.5,12 1.5,7.5Z" fill="#b9dbbf" stroke="#d9cf7a" stroke-width=".6" transform="translate(12,10) scale(.74) translate(-12,-7.6)"/></svg>
<svg class="ic" style="left:397px;top:101px;width:24px;height:24px" viewBox="0 0 24 24"><path d="M10.6,3.6C7.6,0.6 1.6,2.6 1.4,7.6C1.4,11.6 5.6,14.6 9.6,13.6C11.2,11 11.4,6.6 10.6,3.6Z" fill="#8dcb92" stroke="#5b625c" stroke-width="1"/><path d="M13.4,3.6C16.4,0.6 22.4,2.6 22.6,7.6C22.6,11.6 18.4,14.6 14.4,13.6C12.8,11 12.6,6.6 13.4,3.6Z" fill="#8dcb92" stroke="#5b625c" stroke-width="1"/><path d="M14,1.6L12.6,15M11,4L13.6,15" stroke="#666" stroke-width="1.2"/><path d="M13.6,2.4L12.4,14" stroke="#eee" stroke-width=".6"/><ellipse cx="10" cy="19.6" rx="1.7" ry="3.3" fill="none" stroke="#c8202a" stroke-width="1.6" transform="rotate(25 10 19.6)"/><ellipse cx="16" cy="19" rx="1.7" ry="3.3" fill="none" stroke="#c8202a" stroke-width="1.6" transform="rotate(-25 16 19)"/></svg>
<svg class="ic" style="left:435px;top:101px;width:24px;height:24px" viewBox="0 0 24 24"><path d="M10.6,3.6C7.6,0.6 1.6,2.6 1.4,7.6C1.4,11.6 5.6,14.6 9.6,13.6C11.2,11 11.4,6.6 10.6,3.6Z" fill="#8dcb92" stroke="#5b625c" stroke-width="1" transform="translate(0.6,0)"/><path d="M13.4,3.6C16.4,0.6 22.4,2.6 22.6,7.6C22.6,11.6 18.4,14.6 14.4,13.6C12.8,11 12.6,6.6 13.4,3.6Z" fill="#8dcb92" stroke="#5b625c" stroke-width="1" transform="translate(-0.6,0)"/><path d="M9.4,4.6L14.6,3.6M9.2,7.4L14.8,6.2M9.2,10.2L14.8,9M9.6,13L14.4,11.8" stroke="#444" stroke-width="1.2"/><path d="M12,3V13.6" stroke="#555" stroke-width=".9"/><path d="M12,13.6C9.6,15.6 9.6,16.6 12,17.6C14.4,18.6 12.4,20 10.6,20.4L14.6,22.6" fill="none" stroke="#444" stroke-width="1.1"/></svg>
<svg class="ic" style="left:474px;top:101px;width:24px;height:24px" viewBox="0 0 24 24"><path d="M10.6,1.2H21.6L16,9.6L13.6,10L12.6,12.6L10.2,11.6L10.6,9L9,8.2Z" fill="#9a9a9a" stroke="#666" stroke-width=".8" stroke-linejoin="round"/><path d="M12.6,2.4H19.6L15.6,8" fill="none" stroke="#d5d5d5" stroke-width="1.2"/><path d="M1,18.4H8L10.4,14.6L12.8,18.4H19.6V23.6H1Z" fill="#6f9cc4" stroke="#2f5f8f" stroke-width="1" stroke-linejoin="round"/><path d="M10.4,16L12.2,19L10.4,21.6L8.6,19Z" fill="#f7ec8a" stroke="#b9a93a" stroke-width=".5"/></svg>
<svg class="ic" style="left:511px;top:101px;width:24px;height:24px" viewBox="0 0 24 24"><g opacity=".8"><path d="M11.6,21.6C6,21.6 2.2,17.4 2.2,12.4C2.2,6.8 7,3 12,3.4C16,3.8 18.6,6.6 19.4,9.6L22.6,9.4L17.6,14.6L13,9.8L16,9.6C15.2,7.8 13.6,6.6 11.6,6.6C8.6,6.6 5.6,8.8 5.6,12.6C5.6,16 8,18.6 11.6,19.6Z" fill="#7fa8ea" stroke="#8fb3ee" stroke-width=".5"/><path d="M11.6,21C6.6,20.6 3.6,16.6 3.6,12.4" fill="none" stroke="#dfe9fb" stroke-width="1.6"/></g></svg>
<div id="ltb"></div>
<div class="grip" style="left:9px;top:138px;width:34px;height:3px;background-size:6px 3px"></div><div class="grip" style="left:12px;top:140px;width:31px;height:3px;background-size:6px 3px"></div>
<svg class="ic" style="left:12px;top:148px;width:24px;height:24px" viewBox="0 0 24 24"><path d="M3,3.4L9.6,18.4L16.4,3.4H23" fill="none" stroke="#3d6290" stroke-width="1.3"/><g fill="#fff" stroke="#3d6290" stroke-width="1.2"><circle cx="3" cy="3.4" r="1.9"/><circle cx="9.6" cy="18.4" r="1.9"/><circle cx="16.4" cy="3.4" r="1.9"/><circle cx="22.4" cy="3.4" r="1.9"/></g><rect x="15.2" y="14.8" width="9" height="9" rx="1.5" fill="#5c9c58" stroke="#477d44" stroke-width=".6"/><path d="M19.7,16.5V22.1M16.9,19.3H22.5" stroke="#fff" stroke-width="1.8" fill="none"/></svg>
<svg class="ic" style="left:12px;top:185px;width:24px;height:24px" viewBox="0 0 24 24"><rect x="1" y="1.4" width="5.1" height="5.1" fill="#2c4f80"/><rect x="6" y="1.4" width="5.1" height="5.1" fill="#4f7fbf"/><rect x="11" y="1.4" width="5.1" height="5.1" fill="#2c4f80"/><rect x="16" y="1.4" width="5.1" height="5.1" fill="#4f7fbf"/><rect x="1" y="6.4" width="5.1" height="5.1" fill="#6fa0dd"/><rect x="6" y="6.4" width="5.1" height="5.1" fill="#2c4f80"/><rect x="11" y="6.4" width="5.1" height="5.1" fill="#6fa0dd"/><rect x="16" y="6.4" width="5.1" height="5.1" fill="#2c4f80"/><rect x="1" y="11.4" width="5.1" height="5.1" fill="#2c4f80"/><rect x="6" y="11.4" width="5.1" height="5.1" fill="#6fa0dd"/><rect x="11" y="11.4" width="5.1" height="5.1" fill="#2c4f80"/><rect x="16" y="11.4" width="5.1" height="5.1" fill="#6fa0dd"/><rect x="1" y="16.4" width="5.1" height="5.1" fill="#4f7fbf"/><rect x="6" y="16.4" width="5.1" height="5.1" fill="#2c4f80"/><rect x="11" y="16.4" width="5.1" height="5.1" fill="#4f7fbf"/><rect x="16" y="16.4" width="5.1" height="5.1" fill="#2c4f80"/><rect x="15.2" y="15.2" width="9" height="9" rx="1.5" fill="#5c9c58" stroke="#477d44" stroke-width=".6"/><path d="M19.7,16.9V22.5M16.9,19.7H22.5" stroke="#fff" stroke-width="1.8" fill="none"/></svg>
<svg class="ic" style="left:12px;top:222px;width:24px;height:24px" viewBox="0 0 24 24"><path d="M5,1.6C1.6,1.6 0.6,5 1.6,8.6C2.4,11.6 4.2,13.6 6,13.6C6.6,13.6 7.2,13 7.4,12.4L8,16.6C8.4,18.4 11.4,18.6 12.2,17L13.6,12.6C15.6,12.6 17.6,10 18,6.6C18.4,3 16.2,1.2 13,1.6C11.6,1.8 10.6,2.4 9.6,2.4C8.4,2.4 7,1.6 5,1.6Z" fill="#4a78b8" stroke="#2a4a7a" stroke-width="1"/><path d="M6,4.6C5,6.6 5.4,9.6 6.6,11M13,4.6C12.4,7 12.6,9.6 13.4,11.6" fill="none" stroke="#cfe0f7" stroke-width="1"/><rect x="15.2" y="15.2" width="9" height="9" rx="1.5" fill="#5c9c58" stroke="#477d44" stroke-width=".6"/><path d="M19.7,16.9V22.5M16.9,19.7H22.5" stroke="#fff" stroke-width="1.8" fill="none"/></svg>
<svg class="ic" style="left:12px;top:261px;width:24px;height:24px" viewBox="0 0 24 24"><path d="M1.6,23C3,14.6 9.6,5.6 23,1C22.6,6 19.6,12.6 10.6,16.6C7.6,17.8 4.6,19.6 3.4,22.4Z" fill="#5f8fcb" stroke="#22406a" stroke-width="1" stroke-linejoin="round"/><path d="M3.4,19.6C6.6,12.6 13,6.6 21,2.6M7.6,16.6L18.6,9.6M10.6,12.6L20.6,5.6" fill="none" stroke="#cfe0f7" stroke-width=".8"/><rect x="15.2" y="14.8" width="9" height="9" rx="1.5" fill="#5c9c58" stroke="#477d44" stroke-width=".6"/><path d="M19.7,16.5V22.1M16.9,19.3H22.5" stroke="#fff" stroke-width="1.8" fill="none"/></svg>
<svg class="ic" style="left:12px;top:299px;width:24px;height:24px" viewBox="0 0 24 24"><path d="M2,2.2C9,2.2 20.6,7.6 24.6,15.6H15.6C12.6,17.6 6.6,20.6 1.6,21.6C5.6,15.6 5.6,8.6 2,2.2Z" fill="#4a7fc0" stroke="#1f3f6f" stroke-width="1" stroke-linejoin="round"/><path d="M8.6,4.6C11.6,9.6 11.6,14.6 9.6,18.6M14,7C17,11 17,14 16,16" fill="none" stroke="#1f3f6f" stroke-width=".9"/><rect x="15.2" y="15.2" width="9" height="9" rx="1.5" fill="#5c9c58" stroke="#477d44" stroke-width=".6"/><path d="M19.7,16.9V22.5M16.9,19.7H22.5" stroke="#fff" stroke-width="1.8" fill="none"/></svg>
<svg class="ic" style="left:12px;top:337px;width:24px;height:24px" viewBox="0 0 24 24"><ellipse cx="12" cy="10.6" rx="11.2" ry="9.4" fill="#9fc0ea" stroke="#5a86c4" stroke-width="1"/><path d="M3,7.6H21M1.6,11H22.4M3,14.6H21M8,2.6C5.6,7.6 5.6,14 8,19M16,2.6C18.4,7.6 18.4,14 16,19M12,1.4V20" fill="none" stroke="#e6effb" stroke-width=".9"/><path d="M5,5.6L9,4.6L10,8L7,9.6ZM13,6L18,5.6L19,9L15,10.6ZM6,12L10,12.6L9.6,16L7,15.6Z" fill="#4a78b8" opacity=".8"/><rect x="15.2" y="15.2" width="9" height="9" rx="1.5" fill="#5c9c58" stroke="#477d44" stroke-width=".6"/><path d="M19.7,16.9V22.5M16.9,19.7H22.5" stroke="#fff" stroke-width="1.8" fill="none"/></svg>
<svg class="ic" style="left:12px;top:375px;width:24px;height:24px" viewBox="0 0 24 24"><ellipse cx="12" cy="10.4" rx="11.2" ry="9.2" fill="#dbe8f8" stroke="#1f3f6f" stroke-width="1"/><path d="M2.4,6H21.6V9H2.4ZM1,12H23V15.2H1Z" fill="#3a68a8"/><path d="M8,1.8C5.6,7 5.6,14 8,19M16,1.8C18.4,7 18.4,14 16,19M12,1.2V19.6" fill="none" stroke="#1f3f6f" stroke-width="1.1"/><rect x="15.2" y="15.2" width="9" height="9" rx="1.5" fill="#5c9c58" stroke="#477d44" stroke-width=".6"/><path d="M19.7,16.9V22.5M16.9,19.7H22.5" stroke="#fff" stroke-width="1.8" fill="none"/></svg>
<svg class="ic" style="left:12px;top:413px;width:24px;height:24px" viewBox="0 0 24 24"><ellipse cx="12" cy="10.4" rx="11.6" ry="9.6" fill="#e9f1fc" stroke="#5a86c4" stroke-width="1"/><path d="M2,6.6H22M0.6,10.4H23.4M2,14.4H22" fill="none" stroke="#8fb0e0" stroke-width=".8"/><path d="M6,4.6L10.6,16L14.6,4.6H20" fill="none" stroke="#222" stroke-width="1.2"/><g fill="#fff" stroke="#222" stroke-width="1"><circle cx="6" cy="4.6" r="1.4"/><circle cx="10.6" cy="16" r="1.4"/><circle cx="14.6" cy="4.6" r="1.4"/><circle cx="19.6" cy="4.6" r="1.4"/></g><rect x="15.2" y="15.2" width="9" height="9" rx="1.5" fill="#5c9c58" stroke="#477d44" stroke-width=".6"/><path d="M19.7,16.9V22.5M16.9,19.7H22.5" stroke="#fff" stroke-width="1.8" fill="none"/></svg>
<svg class="ic" style="left:12px;top:452px;width:24px;height:24px" viewBox="0 0 24 24"><path d="M4.6,5.6C4.6,2.6 7.6,0.8 10.6,1.6C14,2.6 15.6,6 14.6,10C13.6,13.6 10.6,16.6 6.6,18L5.4,16.6C8.4,14.6 10,12.6 10.4,10.6C7.6,11.6 4.6,9.6 4.6,5.6Z" fill="#4a78b8" stroke="#2f5a94" stroke-width=".8"/><rect x="15.2" y="15.2" width="9" height="9" rx="1.5" fill="#5c9c58" stroke="#477d44" stroke-width=".6"/><path d="M19.7,16.9V22.5M16.9,19.7H22.5" stroke="#fff" stroke-width="1.8" fill="none"/></svg>
<svg class="ic" style="left:12px;top:489px;width:24px;height:24px" viewBox="0 0 24 24"><path d="M3,3.4L9.6,18.4L16.4,3.4H23" fill="none" stroke="#3d6290" stroke-width="1.3"/><g fill="#fff" stroke="#3d6290" stroke-width="1.2"><circle cx="3" cy="3.4" r="1.9"/><circle cx="9.6" cy="18.4" r="1.9"/><circle cx="16.4" cy="3.4" r="1.9"/><circle cx="22.4" cy="3.4" r="1.9"/></g><g opacity="1"><rect x="15" y="14.6" width="10" height="10" rx="1.6" fill="#d3a60a" stroke="#b38b00" stroke-width=".6"/><path d="M20,16.2V23.0M17,17.8L23,21.400000000000002M17,21.400000000000002L23,17.8" stroke="#fff" stroke-width="1.5" fill="none"/><circle cx="20" cy="19.6" r="1" fill="#d3a60a"/></g></svg>
<svg class="ic" style="left:12px;top:529px;width:24px;height:24px" viewBox="0 0 24 24"><rect x="1.6" y="1.2" width="19.6" height="19.2" rx="1" fill="#efefef" stroke="#777" stroke-width="1"/><rect x="15.4" y="14.4" width="9" height="8.6" rx="2" fill="#f0555c" stroke="#f5a5a8" stroke-width=".6"/><path d="M17,18.7H22.8" stroke="#fff" stroke-width="2"/></svg>
<svg class="ic" style="left:37.5px;top:503.5px;width:9px;height:7px" viewBox="0 0 9 7"><path d="M0,0h9l-4.5,6.6z" fill="#5c5c5c"/></svg>
<div class="grip" style="left:9px;top:565px;width:34px;height:3px;background-size:6px 3px"></div><div class="grip" style="left:12px;top:567px;width:31px;height:3px;background-size:6px 3px"></div>
<div id="lpanel"><div id="lhead">Layers</div>
<svg class="ic" style="left:0px;top:3px;width:40px;height:18px" viewBox="0 0 40 18"><circle cx="10" cy="9.2" r="6.8" fill="#404040"/><path d="M7.2,6.4L12.8,12M12.8,6.4L7.2,12" stroke="#fff" stroke-width="2.1"/><circle cx="30.1" cy="9.2" r="6.8" fill="#404040"/><rect x="29" y="6.6" width="4.8" height="3.6" rx=".6" fill="none" stroke="#fff" stroke-width="1.1"/><rect x="26.6" y="8.6" width="4.8" height="3.6" rx=".6" fill="#404040" stroke="#fff" stroke-width="1.1"/></svg>
<div id="ltree">
<div class="row" style="top:1px"><div class="tri"></div><div class="cb"></div><svg class="ic" style="left:26px;top:0px;width:20px;height:20px" viewBox="0 0 20 20"><path d="M4.6,9.6L8,14.6C9.6,9.6 12,5.6 16,1.6" fill="none" stroke="#1a1a1a" stroke-width="2.2" stroke-linecap="round" stroke-linejoin="round"/></svg><svg class="ic" style="left:53px;top:1px;width:18px;height:18px" viewBox="0 0 18 18"><g fill="#fff" stroke="#666" stroke-width=".8"><circle cx="4.6" cy="13.6" r="1.2"/><circle cx="7.6" cy="6.6" r="1.2"/><circle cx="13.6" cy="3.6" r="1.2"/></g></svg><span class="nm">places</span></div>
<div class="row" style="top:21px"><div class="tri"></div><div class="cb"></div><svg class="ic" style="left:26px;top:0px;width:20px;height:20px" viewBox="0 0 20 20"><path d="M4.6,9.6L8,14.6C9.6,9.6 12,5.6 16,1.6" fill="none" stroke="#1a1a1a" stroke-width="2.2" stroke-linecap="round" stroke-linejoin="round"/></svg><svg class="ic" style="left:53px;top:1px;width:18px;height:18px" viewBox="0 0 18 18"><path d="M1.4,4.6C4.6,2 7.6,4 9.6,3.6C12.6,3 15.6,3 16,6C16.6,9.6 15,11.6 12.6,10.6C10,9.6 8,10.6 5.6,12.4C3,13 0.6,9 1.4,4.6Z" fill="#e9e9e9" stroke="#8a8a8a" stroke-width="1"/></svg><span class="nm">buildings</span></div>
<div class="row" style="top:41px"><div class="tri"></div><div class="cb"></div><svg class="ic" style="left:26px;top:0px;width:20px;height:20px" viewBox="0 0 20 20"><path d="M4.6,9.6L8,14.6C9.6,9.6 12,5.6 16,1.6" fill="none" stroke="#1a1a1a" stroke-width="2.2" stroke-linecap="round" stroke-linejoin="round"/></svg><svg class="ic" style="left:53px;top:1px;width:18px;height:18px" viewBox="0 0 18 18"><path d="M2,3.6L6.6,14L11.6,2.8H15.6" fill="none" stroke="#555" stroke-width=".9"/><g fill="#fff" stroke="#555" stroke-width=".8"><circle cx="2" cy="3.6" r="1.1"/><circle cx="6.6" cy="14" r="1.1"/><circle cx="11.6" cy="2.8" r="1.1"/><circle cx="15.4" cy="2.8" r="1.1"/></g></svg><span class="nm">roads</span></div>
<div class="row" style="top:61px"><div class="tri"></div><div class="cb"></div><svg class="ic" style="left:26px;top:0px;width:20px;height:20px" viewBox="0 0 20 20"><path d="M4.6,9.6L8,14.6C9.6,9.6 12,5.6 16,1.6" fill="none" stroke="#1a1a1a" stroke-width="2.2" stroke-linecap="round" stroke-linejoin="round"/></svg><svg class="ic" style="left:53px;top:1px;width:18px;height:18px" viewBox="0 0 18 18"><path d="M1.4,4.6C4.6,2 7.6,4 9.6,3.6C12.6,3 15.6,3 16,6C16.6,9.6 15,11.6 12.6,10.6C10,9.6 8,10.6 5.6,12.4C3,13 0.6,9 1.4,4.6Z" fill="#e9e9e9" stroke="#8a8a8a" stroke-width="1"/></svg><span class="nm">water</span></div>
<div class="row" style="top:81px"><div class="trid"></div><div class="cb"></div><svg class="ic" style="left:26px;top:0px;width:20px;height:20px" viewBox="0 0 20 20"><path d="M4.6,9.6L8,14.6C9.6,9.6 12,5.6 16,1.6" fill="none" stroke="#1a1a1a" stroke-width="2.2" stroke-linecap="round" stroke-linejoin="round"/></svg><svg class="ic" style="left:53px;top:1px;width:18px;height:18px" viewBox="0 0 18 18"><path d="M2,3.6L6.6,14L11.6,2.8H15.6" fill="none" stroke="#555" stroke-width=".9"/><g fill="#fff" stroke="#555" stroke-width=".8"><circle cx="2" cy="3.6" r="1.1"/><circle cx="6.6" cy="14" r="1.1"/><circle cx="11.6" cy="2.8" r="1.1"/><circle cx="15.4" cy="2.8" r="1.1"/></g></svg><span class="nm">routes</span></div>
<div class="row" style="top:155px"><div class="tri"></div><div class="cb"></div><svg class="ic" style="left:26px;top:0px;width:20px;height:20px" viewBox="0 0 20 20"><path d="M4.6,9.6L8,14.6C9.6,9.6 12,5.6 16,1.6" fill="none" stroke="#1a1a1a" stroke-width="2.2" stroke-linecap="round" stroke-linejoin="round"/></svg><svg class="ic" style="left:53px;top:1px;width:18px;height:18px" viewBox="0 0 18 18"><path d="M2,3.6L6.6,14L11.6,2.8H15.6" fill="none" stroke="#555" stroke-width=".9"/><g fill="#fff" stroke="#555" stroke-width=".8"><circle cx="2" cy="3.6" r="1.1"/><circle cx="6.6" cy="14" r="1.1"/><circle cx="11.6" cy="2.8" r="1.1"/><circle cx="15.4" cy="2.8" r="1.1"/></g></svg><span class="nm">rivers</span></div>
<div class="row" style="top:175px"><div class="tri"></div><div class="cb"></div><svg class="ic" style="left:26px;top:0px;width:20px;height:20px" viewBox="0 0 20 20"><path d="M4.6,9.6L8,14.6C9.6,9.6 12,5.6 16,1.6" fill="none" stroke="#1a1a1a" stroke-width="2.2" stroke-linecap="round" stroke-linejoin="round"/></svg><svg class="ic" style="left:53px;top:1px;width:18px;height:18px" viewBox="0 0 18 18"><path d="M1.4,4.6C4.6,2 7.6,4 9.6,3.6C12.6,3 15.6,3 16,6C16.6,9.6 15,11.6 12.6,10.6C10,9.6 8,10.6 5.6,12.4C3,13 0.6,9 1.4,4.6Z" fill="#e9e9e9" stroke="#8a8a8a" stroke-width="1"/></svg><span class="nm">school_property</span></div>
<div class="abs" style="left:45px;top:110px;width:16px;height:1px;background:#e9a53a"></div><div class="abs" style="left:45px;top:127px;width:4px;height:2px;background:#e3cc86"></div><div class="abs" style="left:52px;top:127px;width:4px;height:2px;background:#e3cc86"></div><div class="abs" style="left:45px;top:145px;width:11px;height:3px;background:#decb80"></div>
<div class="row" style="top:195px;height:22px;line-height:22px;background:#3875d7;color:#fff"><div class="tri" style="top:6px;border-left-color:#6e6e6e"></div><div class="cb" style="top:4px"></div><svg class="ic" style="left:26px;top:1px;width:20px;height:20px" viewBox="0 0 20 20"><path d="M4.6,9.6L8,14.6C9.6,9.6 12,5.6 16,1.6" fill="none" stroke="#1a1a1a" stroke-width="2.2" stroke-linecap="round" stroke-linejoin="round"/></svg><svg class="ic" style="left:54px;top:1px;width:18px;height:20px" viewBox="0 0 18 20"><g opacity="1"><path d="M3.4,19.0L7.9,15.4L3.8,13.2Z" fill="#e8e0d0" stroke="#666" stroke-width=".8" stroke-linejoin="round"/><path d="M3.4,19.0L5.4,17.4L3.6,16.4Z" fill="#555"/><path d="M7.9,15.4L13.2,5.3L9.2,3.2L3.8,13.2Z" fill="#e2733a" stroke="#b9501c" stroke-width=".7"/><path d="M5.9,14.3L11.2,4.2" stroke="#f0a060" stroke-width="1.6"/><path d="M13.2,5.3L14.4,3.1L10.4,0.9L9.2,3.2Z" fill="#f6f0ee" stroke="#aaa" stroke-width=".6"/></g></svg><span class="nm" style="left:80px;text-decoration:underline">landuse</span></div>
<div class="row" style="top:217px"><div class="cb"></div><svg class="ic" style="left:54px;top:2px;width:16px;height:16px" viewBox="0 0 16 16"><rect width="16" height="16" fill="#b9b9b9"/><rect x="0" y="0" width="5.4" height="5.4" fill="#6a6a6a"/><rect x="10.6" y="0" width="5.4" height="5.4" fill="#8a8a8a"/><rect x="5.4" y="5.4" width="5.2" height="5.2" fill="#8f8f8f"/><rect x="0" y="10.6" width="5.4" height="5.4" fill="#7a7a7a"/><rect x="10.6" y="5.4" width="5.4" height="5.2" fill="#cfcfcf"/><rect x="5.4" y="10.6" width="5.2" height="5.4" fill="#a5a5a5"/></svg><span class="nm">3420C_2010_327_RGB_LATLNG</span></div>
</div>
<div class="abs" style="left:0;top:992px;width:294px;height:10px;background:#e3e3e3;border:1px solid #d2d2d2;border-top:none;border-radius:0 0 4px 4px"></div><div class="abs" style="left:82px;top:991px;width:131px;height:21px;border:1px solid #9a9a9a;border-radius:4px;background:#fff;overflow:hidden;font-size:13px;line-height:18px;box-shadow:0 1px 0 rgba(255,255,255,.7)"><div class="abs" style="left:0;top:0;width:60px;height:19px;background:linear-gradient(to bottom,#7c7c7c,#929292);color:#fff;text-align:center;border-right:1px solid #7d7d7d;text-shadow:0 -1px 0 rgba(0,0,0,.3)">Layers</div><div class="abs" style="left:60px;top:0;width:70px;height:19px;text-align:center;background:linear-gradient(to bottom,#fff,#f4f4f4)">Browser</div></div>
</div>
<div id="map">
<svg style="position:absolute;left:0;top:0" width="1576.5" height="1010" viewBox="347.5 137 1576.5 1010">
<defs><pattern id="hatch" width="3" height="3" patternUnits="userSpaceOnUse"><rect width="3" height="3" fill="#86aaff"/><path d="M0,0.5H3M0.5,0V3" stroke="#3763f2" stroke-width="1"/></pattern></defs>
<path d="M1046,506L1147,529L1206,566L1238.4,591L1215.4,600.3L1189,583.5L1136.3,633L1125.6,626L1151.4,600.7Z" fill="#d9f7c9"/>
<path d="M1494.1,166L1505,153.5L1517.5,145.6L1531.6,147.2L1545.7,148.8L1561.3,151.9L1577,151.9L1587.9,156.6L1597.3,166L1603.6,170.7L1633.3,182.4L1638,183.2L1652.1,181.6L1667.7,176.9L1678.6,176.1L1688,183.2L1699,191L1711.5,198.8L1724,201.9L1736.5,208.2L1739.6,217.6L1738.1,227L1736.5,236.4L1727.1,242.6L1730.3,253.6L1733.4,264.5L1731.8,273.9L1728.7,284.8L1733.4,300.5L1732.5,305.5L1717.6,309.2L1698.9,322.3L1695.2,331.7L1693.3,291.5L1672.8,296.2L1646.6,304.6L1631.7,305.5L1600.8,307.4L1594.3,360.6L1543.9,346.6L1542,359.7L1528.9,370.9L1519.6,363.4L1504.6,357.8L1497.1,344.7L1499,331.7L1497.1,320.4L1484.1,309.2L1487.8,299.9L1491.5,284.9L1549.5,281.2L1553.5,263L1556.6,239.5L1558.2,217.6L1555.1,212.9L1534.7,217.6L1526.9,220.7L1520.7,214.5L1511.3,206.6L1497.2,200.4L1487.8,192.6L1490.9,180.1Z" fill="#d9f7c9"/>
<path d="M1416.8,311.1L1435.5,313L1456,318.6L1478.5,324.2L1482.2,331.7L1484.1,344.7L1487.8,361.5L1478.5,363.4L1465.4,359.7L1456,352.2L1429.9,333.5L1413.1,320.4Z" fill="#d9f7c9"/>
<path d="M1633.5,331.7L1650.3,326L1639.1,348.5L1627.9,370.9L1611.1,382.1L1603.6,393.3L1596.2,391.4L1598,382.1L1611.1,365.3L1624.2,348.5Z" fill="#d9f7c9"/>
<path d="M1528.9,370.9L1530.8,382.1L1542,389.6L1568.1,384L1592.4,385.8L1593.4,382.1L1547.6,380.2L1540.1,374.6L1545.7,357.8L1549.5,350.3L1542,357.8Z" fill="#d9f7c9"/>
<path d="M1732.5,305.5L1704.5,385.8L1698.9,344.7L1717.6,318.6Z" fill="#d9f7c9"/>
<path d="M1703,385.8L1705.3,385.8L1705.6,456.8L1703.4,456.8Z" fill="#d9f7c9"/>
<path d="M1570.7,198.8L1580.1,197.3L1578.5,211.3L1572.3,208.2Z" fill="#fff"/>
<path d="M1600.4,227L1605.1,230.1L1609.8,237.9L1603.6,236.4Z" fill="#fff"/>
<path d="M1699,259.8L1714.6,252L1724,250.4L1711.5,255.1Z" fill="#fff"/>
<path d="M919.3,213.5L945.5,217.3L959.2,218.5L963,229.7L1002.9,202.3L1061.5,239.7L1039,260.9L1015.3,247.2L980.4,279.6L1014.1,313.3L990.4,333.2L918.1,355.7L885.7,373.1L848.3,392.3L819.5,411.7L798.7,431.8L772.1,469.2L757.7,485L738.3,478.5L736.2,473.5L743.4,464.1L757.7,453.1L767.1,439L764.2,428.2L750.5,418.1L708.9,472.8L700.2,479.2L690.9,483.5L680.8,483.5L674.4,477L743.4,389.4L744.8,346.9L739.8,337L738.5,313.3L754.8,298.3L795.9,255.9L904.4,227.2Z" fill="#8fc0b6"/>
<path d="M835.9,413.5L898.1,399.8L929.3,398.5L946.7,404.8L960.4,439.6L954.4,453.7L941.9,457.4L923.2,458.7L905.8,448.7L897.1,464.9L892.1,483.6L902,504.8L907,513.5L913.3,512.2L918.2,524.7L910.8,537.1L888.3,540.9L885.9,542.1L889.6,560.8L860.9,572L849.7,573.3L842.3,569.5L834.8,559.6L819.9,568.3L813.6,563.3L812.4,553.3L828.6,527.2L838.5,509.7L829.8,489.8L819.9,464.9L819.7,438.4L828.4,419.7Z" fill="#e0eef3"/>
<path d="M934.3,314.6L941.7,312.1L952.9,323.3L946.7,334.5L929.3,334.5L924.3,329.5Z" fill="#d9f7c9"/>
<path d="M1029.5,293.4L1034.5,294.7L1033.9,303.4L1029.5,305.9Z" fill="#d9f7c9"/>
<path d="M709,544.7L731.5,555.9L725.2,579.6L711.5,610.8L687.8,605.8L699.1,569.6Z" fill="#d9f7c9"/>
<path d="M953.1,483L975.5,485.5L974.3,494.8L951.9,492.3Z" fill="#d9f7c9"/>
<path d="M580.6,759.3L628,715L680.4,653.6L694,650.7L712.8,630.7L719,628.2L752.7,628.2L756,619.5L786.4,575.1L846,598.3L863.5,594.5L965.8,508.5L1004.4,506.8L1045.6,506L1151.4,600.7L1125.6,625.9L1136.3,633L1188.8,583.5L1215.4,600L1238.4,590.7L1206,565.5L1147.1,528.6L1159.3,514.5L1157.2,505.9L1166.5,510.9L1191,528.9L1228.3,550.4L1257.4,560.9L1291,569.1L1302.2,570.9L1329.7,573.4L1418.2,576.3L1469.3,572.1L1484.3,578.3L1491.7,584.6L1509.2,603.3L1519.2,609L1529.2,608.3L1540.4,604L1554.1,602L1572.8,607L1542.9,631.5L1531.6,683.1L1598.4,746.6L1585.4,767.3L1551.7,806.7L1530.5,810.2L1521.3,833.4L1522.3,849.6L1514.3,865.3L1478.9,873.3L1503.5,991.5L1401,1014.2L1374.8,897.5L1337.9,904.9L1324.4,921.1L1331.9,960.3L1297,983.5L1278.9,967.3L1211,990.9L1175.4,1003.4L1075.7,979.7L1065.7,976L1054.5,970.3L1048.3,980.5L1043.3,974.8L1023.3,966L993.4,968.5L981.7,969.3L971.7,968.5L962.2,966L938.5,952.8L911.1,931.1L906.1,919.9L904.9,908.7L909.7,887L913.6,880L952,857.1L934.6,845.9L912.2,834.2L858.5,820.2L837.4,822.2L823.6,828.4L796.2,828.4L787,814.7L770.1,820.9L755.2,823.9L755.2,839.6L747.7,859.6L697.8,897L661.7,915L639.2,923.2L624.3,922.4L589.4,907.5L579.4,902L573.1,889.5L571.9,877L578.1,852.1L585.6,835.9L594.3,819.7L598.1,802.2L596.8,784.8L590.6,772.3Z" fill="#ffff00" stroke="#1a1a1a" stroke-width="1.1" stroke-linejoin="round"/>
<path d="M577.0,755.7L584.2,762.9M584.2,755.7L577.0,762.9M624.4,711.4L631.6,718.6M631.6,711.4L624.4,718.6M676.8,650.0L684.0,657.2M684.0,650.0L676.8,657.2M690.4,647.1L697.6,654.3M697.6,647.1L690.4,654.3M709.2,627.1L716.4,634.3M716.4,627.1L709.2,634.3M715.4,624.6L722.6,631.8M722.6,624.6L715.4,631.8M749.1,624.6L756.3,631.8M756.3,624.6L749.1,631.8M752.4,615.9L759.6,623.1M759.6,615.9L752.4,623.1M782.8,571.5L790.0,578.7M790.0,571.5L782.8,578.7M842.4,594.7L849.6,601.9M849.6,594.7L842.4,601.9M859.9,590.9L867.1,598.1M867.1,590.9L859.9,598.1M962.2,504.9L969.4,512.1M969.4,504.9L962.2,512.1M1000.8,503.2L1008.0,510.4M1008.0,503.2L1000.8,510.4M1042.0,502.4L1049.2,509.6M1049.2,502.4L1042.0,509.6M1147.8,597.1L1155.0,604.3M1155.0,597.1L1147.8,604.3M1122.0,622.3L1129.2,629.5M1129.2,622.3L1122.0,629.5M1132.7,629.4L1139.9,636.6M1139.9,629.4L1132.7,636.6M1185.2,579.9L1192.4,587.1M1192.4,579.9L1185.2,587.1M1211.8,596.4L1219.0,603.6M1219.0,596.4L1211.8,603.6M1234.8,587.1L1242.0,594.3M1242.0,587.1L1234.8,594.3M1202.4,561.9L1209.6,569.1M1209.6,561.9L1202.4,569.1M1143.5,525.0L1150.7,532.2M1150.7,525.0L1143.5,532.2M1155.7,510.9L1162.9,518.1M1162.9,510.9L1155.7,518.1M1153.6,502.3L1160.8,509.5M1160.8,502.3L1153.6,509.5M1162.9,507.3L1170.1,514.5M1170.1,507.3L1162.9,514.5M1187.4,525.3L1194.6,532.5M1194.6,525.3L1187.4,532.5M1224.7,546.8L1231.9,554.0M1231.9,546.8L1224.7,554.0M1253.8,557.3L1261.0,564.5M1261.0,557.3L1253.8,564.5M1287.4,565.5L1294.6,572.7M1294.6,565.5L1287.4,572.7M1298.6,567.3L1305.8,574.5M1305.8,567.3L1298.6,574.5M1326.1,569.8L1333.3,577.0M1333.3,569.8L1326.1,577.0M1414.6,572.7L1421.8,579.9M1421.8,572.7L1414.6,579.9M1465.7,568.5L1472.9,575.7M1472.9,568.5L1465.7,575.7M1480.7,574.7L1487.9,581.9M1487.9,574.7L1480.7,581.9M1488.1,581.0L1495.3,588.2M1495.3,581.0L1488.1,588.2M1505.6,599.7L1512.8,606.9M1512.8,599.7L1505.6,606.9M1515.6,605.4L1522.8,612.6M1522.8,605.4L1515.6,612.6M1525.6,604.7L1532.8,611.9M1532.8,604.7L1525.6,611.9M1536.8,600.4L1544.0,607.6M1544.0,600.4L1536.8,607.6M1550.5,598.4L1557.7,605.6M1557.7,598.4L1550.5,605.6M1569.2,603.4L1576.4,610.6M1576.4,603.4L1569.2,610.6M1539.3,627.9L1546.5,635.1M1546.5,627.9L1539.3,635.1M1528.0,679.5L1535.2,686.7M1535.2,679.5L1528.0,686.7M1594.8,743.0L1602.0,750.2M1602.0,743.0L1594.8,750.2M1581.8,763.7L1589.0,770.9M1589.0,763.7L1581.8,770.9M1548.1,803.1L1555.3,810.3M1555.3,803.1L1548.1,810.3M1526.9,806.6L1534.1,813.8M1534.1,806.6L1526.9,813.8M1517.7,829.8L1524.9,837.0M1524.9,829.8L1517.7,837.0M1518.7,846.0L1525.9,853.2M1525.9,846.0L1518.7,853.2M1510.7,861.7L1517.9,868.9M1517.9,861.7L1510.7,868.9M1475.3,869.7L1482.5,876.9M1482.5,869.7L1475.3,876.9M1499.9,987.9L1507.1,995.1M1507.1,987.9L1499.9,995.1M1397.4,1010.6L1404.6,1017.8M1404.6,1010.6L1397.4,1017.8M1371.2,893.9L1378.4,901.1M1378.4,893.9L1371.2,901.1M1334.3,901.3L1341.5,908.5M1341.5,901.3L1334.3,908.5M1320.8,917.5L1328.0,924.7M1328.0,917.5L1320.8,924.7M1328.3,956.7L1335.5,963.9M1335.5,956.7L1328.3,963.9M1293.4,979.9L1300.6,987.1M1300.6,979.9L1293.4,987.1M1275.3,963.7L1282.5,970.9M1282.5,963.7L1275.3,970.9M1207.4,987.3L1214.6,994.5M1214.6,987.3L1207.4,994.5M1171.8,999.8L1179.0,1007.0M1179.0,999.8L1171.8,1007.0M1072.1,976.1L1079.3,983.3M1079.3,976.1L1072.1,983.3M1062.1,972.4L1069.3,979.6M1069.3,972.4L1062.1,979.6M1050.9,966.7L1058.1,973.9M1058.1,966.7L1050.9,973.9M1044.7,976.9L1051.9,984.1M1051.9,976.9L1044.7,984.1M1039.7,971.2L1046.9,978.4M1046.9,971.2L1039.7,978.4M1019.7,962.4L1026.9,969.6M1026.9,962.4L1019.7,969.6M989.8,964.9L997.0,972.1M997.0,964.9L989.8,972.1M978.1,965.7L985.3,972.9M985.3,965.7L978.1,972.9M968.1,964.9L975.3,972.1M975.3,964.9L968.1,972.1M958.6,962.4L965.8,969.6M965.8,962.4L958.6,969.6M934.9,949.2L942.1,956.4M942.1,949.2L934.9,956.4M907.5,927.5L914.7,934.7M914.7,927.5L907.5,934.7M902.5,916.3L909.7,923.5M909.7,916.3L902.5,923.5M901.3,905.1L908.5,912.3M908.5,905.1L901.3,912.3M906.1,883.4L913.3,890.6M913.3,883.4L906.1,890.6M910.0,876.4L917.2,883.6M917.2,876.4L910.0,883.6M948.4,853.5L955.6,860.7M955.6,853.5L948.4,860.7M931.0,842.3L938.2,849.5M938.2,842.3L931.0,849.5M908.6,830.6L915.8,837.8M915.8,830.6L908.6,837.8M854.9,816.6L862.1,823.8M862.1,816.6L854.9,823.8M833.8,818.6L841.0,825.8M841.0,818.6L833.8,825.8M820.0,824.8L827.2,832.0M827.2,824.8L820.0,832.0M792.6,824.8L799.8,832.0M799.8,824.8L792.6,832.0M783.4,811.1L790.6,818.3M790.6,811.1L783.4,818.3M766.5,817.3L773.7,824.5M773.7,817.3L766.5,824.5M751.6,820.3L758.8,827.5M758.8,820.3L751.6,827.5M751.6,836.0L758.8,843.2M758.8,836.0L751.6,843.2M744.1,856.0L751.3,863.2M751.3,856.0L744.1,863.2M694.2,893.4L701.4,900.6M701.4,893.4L694.2,900.6M658.1,911.4L665.3,918.6M665.3,911.4L658.1,918.6M635.6,919.6L642.8,926.8M642.8,919.6L635.6,926.8M620.7,918.8L627.9,926.0M627.9,918.8L620.7,926.0M585.8,903.9L593.0,911.1M593.0,903.9L585.8,911.1M575.8,898.4L583.0,905.6M583.0,898.4L575.8,905.6M569.5,885.9L576.7,893.1M576.7,885.9L569.5,893.1M568.3,873.4L575.5,880.6M575.5,873.4L568.3,880.6M574.5,848.5L581.7,855.7M581.7,848.5L574.5,855.7M582.0,832.3L589.2,839.5M589.2,832.3L582.0,839.5M590.7,816.1L597.9,823.3M597.9,816.1L590.7,823.3M594.5,798.6L601.7,805.8M601.7,798.6L594.5,805.8M593.2,781.2L600.4,788.4M600.4,781.2L593.2,788.4M587.0,768.7L594.2,775.9M594.2,768.7L587.0,775.9M1042.6,502.6L1049.4,509.4M1049.4,502.6L1042.6,509.4M1143.6,525.6L1150.4,532.4M1150.4,525.6L1143.6,532.4M1202.6,562.6L1209.4,569.4M1209.4,562.6L1202.6,569.4M1235.0,587.6L1241.8,594.4M1241.8,587.6L1235.0,594.4M1212.0,596.9L1218.8,603.7M1218.8,596.9L1212.0,603.7M1185.6,580.1L1192.4,586.9M1192.4,580.1L1185.6,586.9M1132.9,629.6L1139.7,636.4M1139.7,629.6L1132.9,636.4M1122.2,622.6L1129.0,629.4M1129.0,622.6L1122.2,629.4M1148.0,597.3L1154.8,604.1M1154.8,597.3L1148.0,604.1M930.9,311.2L937.7,318.0M937.7,311.2L930.9,318.0M938.3,308.7L945.1,315.5M945.1,308.7L938.3,315.5M949.5,319.9L956.3,326.7M956.3,319.9L949.5,326.7M943.3,331.1L950.1,337.9M950.1,331.1L943.3,337.9M925.9,331.1L932.7,337.9M932.7,331.1L925.9,337.9M920.9,326.1L927.7,332.9M927.7,326.1L920.9,332.9M1026.1,290.0L1032.9,296.8M1032.9,290.0L1026.1,296.8M1031.1,291.3L1037.9,298.1M1037.9,291.3L1031.1,298.1M1030.5,300.0L1037.3,306.8M1037.3,300.0L1030.5,306.8M1026.1,302.5L1032.9,309.3M1032.9,302.5L1026.1,309.3M705.6,541.3L712.4,548.1M712.4,541.3L705.6,548.1M728.1,552.5L734.9,559.3M734.9,552.5L728.1,559.3M721.8,576.2L728.6,583.0M728.6,576.2L721.8,583.0M708.1,607.4L714.9,614.2M714.9,607.4L708.1,614.2M684.4,602.4L691.2,609.2M691.2,602.4L684.4,609.2M695.7,566.2L702.5,573.0M702.5,566.2L695.7,573.0M949.7,479.6L956.5,486.4M956.5,479.6L949.7,486.4M972.1,482.1L978.9,488.9M978.9,482.1L972.1,488.9M970.9,491.4L977.7,498.2M977.7,491.4L970.9,498.2M948.5,488.9L955.3,495.7M955.3,488.9L948.5,495.7M856.3,190.1L862.9,196.7M862.9,190.1L856.3,196.7M865.2,187.9L871.8,194.5M871.8,187.9L865.2,194.5M855.9,189.0L862.5,195.6M862.5,189.0L855.9,195.6M863.1,191.9L869.7,198.5M869.7,191.9L863.1,198.5M856.3,186.0L862.9,192.6M862.9,186.0L856.3,192.6M864.0,190.4L870.6,197.0M870.6,190.4L864.0,197.0M867.3,191.7L873.9,198.3M873.9,191.7L867.3,198.3M860.8,188.5L867.4,195.1M867.4,188.5L860.8,195.1M871.5,188.5L878.1,195.1M878.1,188.5L871.5,195.1M858.1,186.4L864.7,193.0M864.7,186.4L858.1,193.0M861.6,189.6L868.2,196.2M868.2,189.6L861.6,196.2M859.8,189.0L866.4,195.6M866.4,189.0L859.8,195.6M862.3,190.9L868.9,197.5M868.9,190.9L862.3,197.5M865.6,189.7L872.2,196.3M872.2,189.7L865.6,196.3M854.0,191.0L860.6,197.6M860.6,191.0L854.0,197.6M855.5,188.8L862.1,195.4M862.1,188.8L855.5,195.4M855.3,189.2L861.9,195.8M861.9,189.2L855.3,195.8M858.1,189.7L864.7,196.3M864.7,189.7L858.1,196.3M874.4,189.1L881.0,195.7M881.0,189.1L874.4,195.7M864.6,185.9L871.2,192.5M871.2,185.9L864.6,192.5M860.0,190.9L866.6,197.5M866.6,190.9L860.0,197.5M860.8,190.1L867.4,196.7M867.4,190.1L860.8,196.7M861.6,186.7L868.2,193.3M868.2,186.7L861.6,193.3M863.5,187.2L870.1,193.8M870.1,187.2L863.5,193.8M868.7,187.9L875.3,194.5M875.3,187.9L868.7,194.5M863.9,189.2L870.5,195.8M870.5,189.2L863.9,195.8M1001.6,188.5L1008.2,195.1M1008.2,188.5L1001.6,195.1M1005.7,186.0L1012.3,192.6M1012.3,186.0L1005.7,192.6M1010.1,187.9L1016.7,194.5M1016.7,187.9L1010.1,194.5M1005.7,194.0L1012.3,200.6M1012.3,194.0L1005.7,200.6M1005.0,183.3L1011.6,189.9M1011.6,183.3L1005.0,189.9M1001.9,185.9L1008.5,192.5M1008.5,185.9L1001.9,192.5M1009.0,190.7L1015.6,197.3M1015.6,190.7L1009.0,197.3M1010.7,194.2L1017.3,200.8M1017.3,194.2L1010.7,200.8M1012.7,190.0L1019.3,196.6M1019.3,190.0L1012.7,196.6M1011.5,190.1L1018.1,196.7M1018.1,190.1L1011.5,196.7M1004.8,190.7L1011.4,197.3M1011.4,190.7L1004.8,197.3M1007.1,187.1L1013.7,193.7M1013.7,187.1L1007.1,193.7M1013.9,190.6L1020.5,197.2M1020.5,190.6L1013.9,197.2M1005.2,187.6L1011.8,194.2M1011.8,187.6L1005.2,194.2M1015.1,187.0L1021.7,193.6M1021.7,187.0L1015.1,193.6M1009.5,190.1L1016.1,196.7M1016.1,190.1L1009.5,196.7M1008.7,190.0L1015.3,196.6M1015.3,190.0L1008.7,196.6M1005.2,186.3L1011.8,192.9M1011.8,186.3L1005.2,192.9M1006.3,186.6L1012.9,193.2M1012.9,186.6L1006.3,193.2M1009.8,193.4L1016.4,200.0M1016.4,193.4L1009.8,200.0M1003.7,189.8L1010.3,196.4M1010.3,189.8L1003.7,196.4M1003.4,185.4L1010.0,192.0M1010.0,185.4L1003.4,192.0M1006.0,188.3L1012.6,194.9M1012.6,188.3L1006.0,194.9M1005.3,178.6L1011.9,185.2M1011.9,178.6L1005.3,185.2M1011.8,186.9L1018.4,193.5M1018.4,186.9L1011.8,193.5M1004.6,190.3L1011.2,196.9M1011.2,190.3L1004.6,196.9M1027.5,291.5L1034.1,298.1M1034.1,291.5L1027.5,298.1M1026.1,276.7L1032.7,283.3M1032.7,276.7L1026.1,283.3M1028.3,287.7L1034.9,294.3M1034.9,287.7L1028.3,294.3M1028.6,287.3L1035.2,293.9M1035.2,287.3L1028.6,293.9M1027.6,282.3L1034.2,288.9M1034.2,282.3L1027.6,288.9M1026.3,284.1L1032.9,290.7M1032.9,284.1L1026.3,290.7M1027.1,289.3L1033.7,295.9M1033.7,289.3L1027.1,295.9M1029.1,279.4L1035.7,286.0M1035.7,279.4L1029.1,286.0M1029.3,285.0L1035.9,291.6M1035.9,285.0L1029.3,291.6M1030.1,292.0L1036.7,298.6M1036.7,292.0L1030.1,298.6M819.7,307.6L826.3,314.2M826.3,307.6L819.7,314.2M813.3,298.9L819.9,305.5M819.9,298.9L813.3,305.5M823.1,314.6L829.7,321.2M829.7,314.6L823.1,321.2M822.6,312.9L829.2,319.5M829.2,312.9L822.6,319.5M942.2,276.4L948.8,283.0M948.8,276.4L942.2,283.0M941.8,275.8L948.4,282.4M948.4,275.8L941.8,282.4M941.2,276.3L947.8,282.9M947.8,276.3L941.2,282.9M943.5,277.5L950.1,284.1M950.1,277.5L943.5,284.1M945.4,274.8L952.0,281.4M952.0,274.8L945.4,281.4M943.1,275.7L949.7,282.3M949.7,275.7L943.1,282.3M943.6,273.0L950.2,279.6M950.2,273.0L943.6,279.6M944.9,269.8L951.5,276.4M951.5,269.8L944.9,276.4M949.1,305.3L955.7,311.9M955.7,305.3L949.1,311.9M954.3,305.4L960.9,312.0M960.9,305.4L954.3,312.0M953.0,303.4L959.6,310.0M959.6,303.4L953.0,310.0M845.2,455.4L851.8,462.0M851.8,455.4L845.2,462.0M841.4,451.6L848.0,458.2M848.0,451.6L841.4,458.2M838.0,449.1L844.6,455.7M844.6,449.1L838.0,455.7M838.3,449.4L844.9,456.0M844.9,449.4L838.3,456.0M752.2,388.3L758.8,394.9M758.8,388.3L752.2,394.9M751.3,390.5L757.9,397.1M757.9,390.5L751.3,397.1M748.4,393.9L755.0,400.5M755.0,393.9L748.4,400.5M753.4,391.5L760.0,398.1M760.0,391.5L753.4,398.1M753.6,391.9L760.2,398.5M760.2,391.9L753.6,398.5M753.0,391.7L759.6,398.3M759.6,391.7L753.0,398.3M820.6,430.1L827.2,436.7M827.2,430.1L820.6,436.7M819.0,426.2L825.6,432.8M825.6,426.2L819.0,432.8M818.6,437.0L825.2,443.6M825.2,437.0L818.6,443.6M821.2,429.3L827.8,435.9M827.8,429.3L821.2,435.9M817.9,431.9L824.5,438.5M824.5,431.9L817.9,438.5M814.6,437.8L821.2,444.4M821.2,437.8L814.6,444.4M819.7,434.3L826.3,440.9M826.3,434.3L819.7,440.9M909.4,527.7L916.0,534.3M916.0,527.7L909.4,534.3M913.5,530.5L920.1,537.1M920.1,530.5L913.5,537.1M907.3,525.3L913.9,531.9M913.9,525.3L907.3,531.9M908.4,526.1L915.0,532.7M915.0,526.1L908.4,532.7M910.3,524.1L916.9,530.7M916.9,524.1L910.3,530.7M911.4,523.8L918.0,530.4M918.0,523.8L911.4,530.4M912.1,524.9L918.7,531.5M918.7,524.9L912.1,531.5M911.5,527.6L918.1,534.2M918.1,527.6L911.5,534.2" fill="none" stroke="#ff0000" stroke-width="1.05" opacity="0.8"/>
<path d="M915.7,209.9L922.9,217.1M922.9,209.9L915.7,217.1M941.9,213.7L949.1,220.9M949.1,213.7L941.9,220.9M955.6,214.9L962.8,222.1M962.8,214.9L955.6,222.1M959.4,226.1L966.6,233.3M966.6,226.1L959.4,233.3M999.3,198.7L1006.5,205.9M1006.5,198.7L999.3,205.9M1057.9,236.1L1065.1,243.3M1065.1,236.1L1057.9,243.3M1035.4,257.3L1042.6,264.5M1042.6,257.3L1035.4,264.5M1011.7,243.6L1018.9,250.8M1018.9,243.6L1011.7,250.8M976.8,276.0L984.0,283.2M984.0,276.0L976.8,283.2M1010.5,309.7L1017.7,316.9M1017.7,309.7L1010.5,316.9M986.8,329.6L994.0,336.8M994.0,329.6L986.8,336.8M914.5,352.1L921.7,359.3M921.7,352.1L914.5,359.3M882.1,369.5L889.3,376.7M889.3,369.5L882.1,376.7M844.7,388.7L851.9,395.9M851.9,388.7L844.7,395.9M815.9,408.1L823.1,415.3M823.1,408.1L815.9,415.3M795.1,428.2L802.3,435.4M802.3,428.2L795.1,435.4M768.5,465.6L775.7,472.8M775.7,465.6L768.5,472.8M754.1,481.4L761.3,488.6M761.3,481.4L754.1,488.6M734.7,474.9L741.9,482.1M741.9,474.9L734.7,482.1M732.6,469.9L739.8,477.1M739.8,469.9L732.6,477.1M739.8,460.5L747.0,467.7M747.0,460.5L739.8,467.7M754.1,449.5L761.3,456.7M761.3,449.5L754.1,456.7M763.5,435.4L770.7,442.6M770.7,435.4L763.5,442.6M760.6,424.6L767.8,431.8M767.8,424.6L760.6,431.8M746.9,414.5L754.1,421.7M754.1,414.5L746.9,421.7M705.3,469.2L712.5,476.4M712.5,469.2L705.3,476.4M696.6,475.6L703.8,482.8M703.8,475.6L696.6,482.8M687.3,479.9L694.5,487.1M694.5,479.9L687.3,487.1M677.2,479.9L684.4,487.1M684.4,479.9L677.2,487.1M670.8,473.4L678.0,480.6M678.0,473.4L670.8,480.6M739.8,385.8L747.0,393.0M747.0,385.8L739.8,393.0M741.2,343.3L748.4,350.5M748.4,343.3L741.2,350.5M736.2,333.4L743.4,340.6M743.4,333.4L736.2,340.6M734.9,309.7L742.1,316.9M742.1,309.7L734.9,316.9M751.2,294.7L758.4,301.9M758.4,294.7L751.2,301.9M792.3,252.3L799.5,259.5M799.5,252.3L792.3,259.5M900.8,223.6L908.0,230.8M908.0,223.6L900.8,230.8M832.3,409.9L839.5,417.1M839.5,409.9L832.3,417.1M894.5,396.2L901.7,403.4M901.7,396.2L894.5,403.4M925.7,394.9L932.9,402.1M932.9,394.9L925.7,402.1M943.1,401.2L950.3,408.4M950.3,401.2L943.1,408.4M956.8,436.0L964.0,443.2M964.0,436.0L956.8,443.2M950.8,450.1L958.0,457.3M958.0,450.1L950.8,457.3M938.3,453.8L945.5,461.0M945.5,453.8L938.3,461.0M919.6,455.1L926.8,462.3M926.8,455.1L919.6,462.3M902.2,445.1L909.4,452.3M909.4,445.1L902.2,452.3M893.5,461.3L900.7,468.5M900.7,461.3L893.5,468.5M888.5,480.0L895.7,487.2M895.7,480.0L888.5,487.2M898.4,501.2L905.6,508.4M905.6,501.2L898.4,508.4M903.4,509.9L910.6,517.1M910.6,509.9L903.4,517.1M909.7,508.6L916.9,515.8M916.9,508.6L909.7,515.8M914.6,521.1L921.8,528.3M921.8,521.1L914.6,528.3M907.2,533.5L914.4,540.7M914.4,533.5L907.2,540.7M884.7,537.3L891.9,544.5M891.9,537.3L884.7,544.5M882.3,538.5L889.5,545.7M889.5,538.5L882.3,545.7M886.0,557.2L893.2,564.4M893.2,557.2L886.0,564.4M857.3,568.4L864.5,575.6M864.5,568.4L857.3,575.6M846.1,569.7L853.3,576.9M853.3,569.7L846.1,576.9M838.7,565.9L845.9,573.1M845.9,565.9L838.7,573.1M831.2,556.0L838.4,563.2M838.4,556.0L831.2,563.2M816.3,564.7L823.5,571.9M823.5,564.7L816.3,571.9M810.0,559.7L817.2,566.9M817.2,559.7L810.0,566.9M808.8,549.7L816.0,556.9M816.0,549.7L808.8,556.9M825.0,523.6L832.2,530.8M832.2,523.6L825.0,530.8M834.9,506.1L842.1,513.3M842.1,506.1L834.9,513.3M826.2,486.2L833.4,493.4M833.4,486.2L826.2,493.4M816.3,461.3L823.5,468.5M823.5,461.3L816.3,468.5M816.1,434.8L823.3,442.0M823.3,434.8L816.1,442.0M824.8,416.1L832.0,423.3M832.0,416.1L824.8,423.3" fill="none" stroke="#ff0000" stroke-width="1.05" opacity="0.9"/>
<path d="M1510.3,137.3L1517.3,144.3M1517.3,137.3L1510.3,144.3M1490.7,168.3L1497.7,175.3M1497.7,168.3L1490.7,175.3M1558.4,145.4L1565.4,152.4M1565.4,145.4L1558.4,152.4M1581.4,151.6L1588.4,158.6M1588.4,151.6L1581.4,158.6M1490.0,177.1L1497.0,184.1M1497.0,177.1L1490.0,184.1M1537.0,180.8L1544.0,187.8M1544.0,180.8L1537.0,187.8M1556.3,176.3L1563.3,183.3M1563.3,176.3L1556.3,183.3M1559.4,175.0L1566.4,182.0M1566.4,175.0L1559.4,182.0M1542.9,203.0L1549.9,210.0M1549.9,203.0L1542.9,210.0M1546.6,209.9L1553.6,216.9M1553.6,209.9L1546.6,216.9M1535.4,213.2L1542.4,220.2M1542.4,213.2L1535.4,220.2M1567.3,204.7L1574.3,211.7M1574.3,204.7L1567.3,211.7M1553.5,239.3L1560.5,246.3M1560.5,239.3L1553.5,246.3M1548.4,239.1L1555.4,246.1M1555.4,239.1L1548.4,246.1M1576.2,192.5L1583.2,199.5M1583.2,192.5L1576.2,199.5M1594.7,211.5L1601.7,218.5M1601.7,211.5L1594.7,218.5M1593.9,237.7L1600.9,244.7M1600.9,237.7L1593.9,244.7M1582.9,182.8L1589.9,189.8M1589.9,182.8L1582.9,189.8M1591.1,192.0L1598.1,199.0M1598.1,192.0L1591.1,199.0M1605.8,204.2L1612.8,211.2M1612.8,204.2L1605.8,211.2M1633.8,193.1L1640.8,200.1M1640.8,193.1L1633.8,200.1M1670.4,174.2L1677.4,181.2M1677.4,174.2L1670.4,181.2M1687.5,181.9L1694.5,188.9M1694.5,181.9L1687.5,188.9M1698.3,192.6L1705.3,199.6M1705.3,192.6L1698.3,199.6M1656.0,221.3L1663.0,228.3M1663.0,221.3L1656.0,228.3M1667.3,220.5L1674.3,227.5M1674.3,220.5L1667.3,227.5M1616.6,241.5L1623.6,248.5M1623.6,241.5L1616.6,248.5M1623.3,245.5L1630.3,252.5M1630.3,245.5L1623.3,252.5M1707.6,230.1L1714.6,237.1M1714.6,230.1L1707.6,237.1M1714.7,200.0L1721.7,207.0M1721.7,200.0L1714.7,207.0M1732.8,225.9L1739.8,232.9M1739.8,225.9L1732.8,232.9M1732.2,228.7L1739.2,235.7M1739.2,228.7L1732.2,235.7M1726.8,233.8L1733.8,240.8M1733.8,233.8L1726.8,240.8M1725.1,278.2L1732.1,285.2M1732.1,278.2L1725.1,285.2M1725.8,297.6L1732.8,304.6M1732.8,297.6L1725.8,304.6M1729.9,300.1L1736.9,307.1M1736.9,300.1L1729.9,307.1M1692.5,270.5L1699.5,277.5M1699.5,270.5L1692.5,277.5M1686.2,288.0L1693.2,295.0M1693.2,288.0L1686.2,295.0M1678.6,290.8L1685.6,297.8M1685.6,290.8L1678.6,297.8M1673.6,289.2L1680.6,296.2M1680.6,289.2L1673.6,296.2M1715.9,216.3L1722.9,223.3M1722.9,216.3L1715.9,223.3M1706.4,229.7L1713.4,236.7M1713.4,229.7L1706.4,236.7M1536.3,278.3L1543.3,285.3M1543.3,278.3L1536.3,285.3M1413.3,305.6L1420.3,312.6M1420.3,305.6L1413.3,312.6M1425.9,306.7L1432.9,313.7M1432.9,306.7L1425.9,313.7M1440.9,311.2L1447.9,318.2M1447.9,311.2L1440.9,318.2M1454.4,315.3L1461.4,322.3M1461.4,315.3L1454.4,322.3M1457.6,311.4L1464.6,318.4M1464.6,311.4L1457.6,318.4M1434.5,334.6L1441.5,341.6M1441.5,334.6L1434.5,341.6M1464.4,353.6L1471.4,360.6M1471.4,353.6L1464.4,360.6M1479.0,317.1L1486.0,324.1M1486.0,317.1L1479.0,324.1M1536.6,369.3L1543.6,376.3M1543.6,369.3L1536.6,376.3M1518.6,307.3L1525.6,314.3M1525.6,307.3L1518.6,314.3M1534.3,304.6L1541.3,311.6M1541.3,304.6L1534.3,311.6M1531.1,335.0L1538.1,342.0M1538.1,335.0L1531.1,342.0M1536.4,331.0L1543.4,338.0M1543.4,331.0L1536.4,338.0M1549.9,336.3L1556.9,343.3M1556.9,336.3L1549.9,343.3M1573.9,382.0L1580.9,389.0M1580.9,382.0L1573.9,389.0M1601.6,383.3L1608.6,390.3M1608.6,383.3L1601.6,390.3M1625.9,342.6L1632.9,349.6M1632.9,342.6L1625.9,349.6M1630.6,331.5L1637.6,338.5M1637.6,331.5L1630.6,338.5M1631.1,305.7L1638.1,312.7M1638.1,305.7L1631.1,312.7M1692.5,277.5L1699.5,284.5M1699.5,277.5L1692.5,284.5M1696.5,320.7L1703.5,327.7M1703.5,320.7L1696.5,327.7M1712.2,302.8L1719.2,309.8M1719.2,302.8L1712.2,309.8M1719.2,297.1L1726.2,304.1M1726.2,297.1L1719.2,304.1M1672.9,286.1L1679.9,293.1M1679.9,286.1L1672.9,293.1M1694.7,345.8L1701.7,352.8M1701.7,345.8L1694.7,352.8M1695.4,356.9L1702.4,363.9M1702.4,356.9L1695.4,363.9M1694.6,370.7L1701.6,377.7M1701.6,370.7L1694.6,377.7M1698.7,383.9L1705.7,390.9M1705.7,383.9L1698.7,390.9M1699.2,416.6L1706.2,423.6M1706.2,416.6L1699.2,423.6M1698.9,424.7L1705.9,431.7M1705.9,424.7L1698.9,431.7M1721.3,272.0L1728.3,279.0M1728.3,272.0L1721.3,279.0M1725.5,267.5L1732.5,274.5M1732.5,267.5L1725.5,274.5M1535.7,289.9L1542.7,296.9M1542.7,289.9L1535.7,296.9M1590.4,356.6L1597.4,363.6M1597.4,356.6L1590.4,363.6M1539.3,161.6L1546.3,168.6M1546.3,161.6L1539.3,168.6M1536.7,169.2L1543.7,176.2M1543.7,169.2L1536.7,176.2M1519.8,164.9L1526.8,171.9M1526.8,164.9L1519.8,171.9M1522.6,152.8L1529.6,159.8M1529.6,152.8L1522.6,159.8M1535.1,153.0L1542.1,160.0M1542.1,153.0L1535.1,160.0M1534.4,173.5L1541.4,180.5M1541.4,173.5L1534.4,180.5M1521.5,173.8L1528.5,180.8M1528.5,173.8L1521.5,180.8M1536.8,149.3L1543.8,156.3M1543.8,149.3L1536.8,156.3M1662.0,211.2L1669.0,218.2M1669.0,211.2L1662.0,218.2M1656.6,212.7L1663.6,219.7M1663.6,212.7L1656.6,219.7M1649.7,207.5L1656.7,214.5M1656.7,207.5L1649.7,214.5M1654.3,199.1L1661.3,206.1M1661.3,199.1L1654.3,206.1M1658.1,196.4L1665.1,203.4M1665.1,196.4L1658.1,203.4M1665.9,200.1L1672.9,207.1M1672.9,200.1L1665.9,207.1M712.6,625.2L719.4,632.0M719.4,625.2L712.6,632.0M717.1,625.2L723.9,632.0M723.9,625.2L717.1,632.0M721.1,625.2L727.9,632.0M727.9,625.2L721.1,632.0M725.1,625.2L731.9,632.0M731.9,625.2L725.1,632.0M728.6,625.2L735.4,632.0M735.4,625.2L728.6,632.0" fill="none" stroke="#ff0000" stroke-width="1.05" opacity="0.85"/>
<path d="M1505.0,142.4L1512.0,149.4M1512.0,142.4L1505.0,149.4M1490.0,181.5L1497.0,188.5M1497.0,181.5L1490.0,188.5M1510.4,203.0L1517.4,210.0M1517.4,203.0L1510.4,210.0M1512.0,138.9L1519.0,145.9M1519.0,138.9L1512.0,145.9M1538.3,142.3L1545.3,149.3M1545.3,142.3L1538.3,149.3M1553.3,145.1L1560.3,152.1M1560.3,145.1L1553.3,152.1M1574.2,147.5L1581.2,154.5M1581.2,147.5L1574.2,154.5M1586.7,152.9L1593.7,159.9M1593.7,152.9L1586.7,159.9M1593.8,162.5L1600.8,169.5M1600.8,162.5L1593.8,169.5M1520.6,185.1L1527.6,192.1M1527.6,185.1L1520.6,192.1M1530.2,190.1L1537.2,197.1M1537.2,190.1L1530.2,197.1M1532.7,190.5L1539.7,197.5M1539.7,190.5L1532.7,197.5M1536.0,194.8L1543.0,201.8M1543.0,194.8L1536.0,201.8M1565.4,195.6L1572.4,202.6M1572.4,195.6L1565.4,202.6M1566.8,210.4L1573.8,217.4M1573.8,210.4L1566.8,217.4M1612.0,208.6L1619.0,215.6M1619.0,208.6L1612.0,215.6M1630.8,200.3L1637.8,207.3M1637.8,200.3L1630.8,207.3M1636.1,191.0L1643.1,198.0M1643.1,191.0L1636.1,198.0M1640.7,189.1L1647.7,196.1M1647.7,189.1L1640.7,196.1M1655.4,176.1L1662.4,183.1M1662.4,176.1L1655.4,183.1M1677.8,174.4L1684.8,181.4M1684.8,174.4L1677.8,181.4M1691.1,196.8L1698.1,203.8M1698.1,196.8L1691.1,203.8M1686.1,195.3L1693.1,202.3M1693.1,195.3L1686.1,202.3M1616.0,219.0L1623.0,226.0M1623.0,219.0L1616.0,226.0M1619.7,220.9L1626.7,227.9M1626.7,220.9L1619.7,227.9M1628.7,224.3L1635.7,231.3M1635.7,224.3L1628.7,231.3M1636.1,221.7L1643.1,228.7M1643.1,221.7L1636.1,228.7M1649.6,224.6L1656.6,231.6M1656.6,224.6L1649.6,231.6M1675.1,226.6L1682.1,233.6M1682.1,226.6L1675.1,233.6M1627.1,249.6L1634.1,256.6M1634.1,249.6L1627.1,256.6M1674.2,224.5L1681.2,231.5M1681.2,224.5L1674.2,231.5M1683.5,227.7L1690.5,234.7M1690.5,227.7L1683.5,234.7M1697.2,225.9L1704.2,232.9M1704.2,225.9L1697.2,232.9M1720.5,244.8L1727.5,251.8M1727.5,244.8L1720.5,251.8M1731.2,204.8L1738.2,211.8M1738.2,204.8L1731.2,211.8M1736.0,217.3L1743.0,224.3M1743.0,217.3L1736.0,224.3M1717.9,290.1L1724.9,297.1M1724.9,290.1L1717.9,297.1M1694.0,253.1L1701.0,260.1M1701.0,253.1L1694.0,260.1M1695.1,265.3L1702.1,272.3M1702.1,265.3L1695.1,272.3M1694.1,277.5L1701.1,284.5M1701.1,277.5L1694.1,284.5M1714.1,211.9L1721.1,218.9M1721.1,211.9L1714.1,218.9M1709.9,226.0L1716.9,233.0M1716.9,226.0L1709.9,233.0M1486.9,283.2L1493.9,290.2M1493.9,283.2L1486.9,290.2M1495.1,279.0L1502.1,286.0M1502.1,279.0L1495.1,286.0M1504.8,277.3L1511.8,284.3M1511.8,277.3L1504.8,284.3M1514.1,279.3L1521.1,286.3M1521.1,279.3L1514.1,286.3M1524.3,276.0L1531.3,283.0M1531.3,276.0L1524.3,283.0M1431.3,309.4L1438.3,316.4M1438.3,309.4L1431.3,316.4M1461.9,320.7L1468.9,327.7M1468.9,320.7L1461.9,327.7M1418.0,322.2L1425.0,329.2M1425.0,322.2L1418.0,329.2M1430.5,330.4L1437.5,337.4M1437.5,330.4L1430.5,337.4M1439.5,336.0L1446.5,343.0M1446.5,336.0L1439.5,343.0M1488.6,290.4L1495.6,297.4M1495.6,290.4L1488.6,297.4M1483.2,301.9L1490.2,308.9M1490.2,301.9L1483.2,308.9M1497.5,347.6L1504.5,354.6M1504.5,347.6L1497.5,354.6M1499.6,352.8L1506.6,359.8M1506.6,352.8L1499.6,359.8M1507.5,353.4L1514.5,360.4M1514.5,353.4L1507.5,360.4M1523.5,362.0L1530.5,369.0M1530.5,362.0L1523.5,369.0M1526.8,376.1L1533.8,383.1M1533.8,376.1L1526.8,383.1M1500.9,278.9L1507.9,285.9M1507.9,278.9L1500.9,285.9M1508.7,278.3L1515.7,285.3M1515.7,278.3L1508.7,285.3M1542.2,276.7L1549.2,283.7M1549.2,276.7L1542.2,283.7M1499.4,307.0L1506.4,314.0M1506.4,307.0L1499.4,314.0M1506.3,306.1L1513.3,313.1M1513.3,306.1L1506.3,313.1M1533.0,306.7L1540.0,313.7M1540.0,306.7L1533.0,313.7M1542.2,311.3L1549.2,318.3M1549.2,311.3L1542.2,318.3M1547.0,331.7L1554.0,338.7M1554.0,331.7L1547.0,338.7M1542.5,347.9L1549.5,354.9M1549.5,347.9L1542.5,354.9M1546.0,348.7L1553.0,355.7M1553.0,348.7L1546.0,355.7M1489.9,337.5L1496.9,344.5M1496.9,337.5L1489.9,344.5M1533.5,383.5L1540.5,390.5M1540.5,383.5L1533.5,390.5M1542.3,387.0L1549.3,394.0M1549.3,387.0L1542.3,394.0M1545.7,383.0L1552.7,390.0M1552.7,383.0L1545.7,390.0M1596.4,386.4L1603.4,393.4M1603.4,386.4L1596.4,393.4M1600.7,388.5L1607.7,395.5M1607.7,388.5L1600.7,395.5M1625.9,335.6L1632.9,342.6M1632.9,335.6L1625.9,342.6M1632.1,311.7L1639.1,318.7M1639.1,311.7L1632.1,318.7M1629.1,302.0L1636.1,309.0M1636.1,302.0L1629.1,309.0M1620.2,361.7L1627.2,368.7M1627.2,361.7L1620.2,368.7M1693.0,290.7L1700.0,297.7M1700.0,290.7L1693.0,297.7M1696.3,315.4L1703.3,322.4M1703.3,315.4L1696.3,322.4M1706.3,306.5L1713.3,313.5M1713.3,306.5L1706.3,313.5M1714.2,298.4L1721.2,305.4M1721.2,298.4L1714.2,305.4M1723.5,298.1L1730.5,305.1M1730.5,298.1L1723.5,305.1M1722.3,304.5L1729.3,311.5M1729.3,304.5L1722.3,311.5M1647.4,270.1L1654.4,277.1M1654.4,270.1L1647.4,277.1M1653.0,270.6L1660.0,277.6M1660.0,270.6L1653.0,277.6M1659.5,271.9L1666.5,278.9M1666.5,271.9L1659.5,278.9M1684.2,290.8L1691.2,297.8M1691.2,290.8L1684.2,297.8M1699.7,444.9L1706.7,451.9M1706.7,444.9L1699.7,451.9M1533.8,287.3L1540.8,294.3M1540.8,287.3L1533.8,294.3M1504.7,332.3L1511.7,339.3M1511.7,332.3L1504.7,339.3M1595.4,303.0L1602.4,310.0M1602.4,303.0L1595.4,310.0M1530.2,171.3L1537.2,178.3M1537.2,171.3L1530.2,178.3M1529.3,149.8L1536.3,156.8M1536.3,149.8L1529.3,156.8M1516.1,168.8L1523.1,175.8M1523.1,168.8L1516.1,175.8M1516.9,154.4L1523.9,161.4M1523.9,154.4L1516.9,161.4M1529.8,146.2L1536.8,153.2M1536.8,146.2L1529.8,153.2M1665.4,203.7L1672.4,210.7M1672.4,203.7L1665.4,210.7M1665.3,207.4L1672.3,214.4M1672.3,207.4L1665.3,214.4M1652.5,211.4L1659.5,218.4M1659.5,211.4L1652.5,218.4M1649.8,199.9L1656.8,206.9M1656.8,199.9L1649.8,206.9M1700.1,386.1L1707.1,393.1M1707.1,386.1L1700.1,393.1M617.1,716.6L623.9,723.4M623.9,716.6L617.1,723.4M631.1,701.1L637.9,707.9M637.9,701.1L631.1,707.9M652.1,678.1L658.9,684.9M658.9,678.1L652.1,684.9" fill="none" stroke="#ff0000" stroke-width="1.05" opacity="0.7"/>
<path d="M1500.1,146.3L1507.1,153.3M1507.1,146.3L1500.1,153.3M1491.1,194.5L1498.1,201.5M1498.1,194.5L1491.1,201.5M1497.5,196.8L1504.5,203.8M1504.5,196.8L1497.5,203.8M1517.7,210.3L1524.7,217.3M1524.7,210.3L1517.7,217.3M1523.4,142.9L1530.4,149.9M1530.4,142.9L1523.4,149.9M1565.7,147.5L1572.7,154.5M1572.7,147.5L1565.7,154.5M1522.9,186.7L1529.9,193.7M1529.9,186.7L1522.9,193.7M1532.6,182.4L1539.6,189.4M1539.6,182.4L1532.6,189.4M1544.0,180.0L1551.0,187.0M1551.0,180.0L1544.0,187.0M1551.0,176.0L1558.0,183.0M1558.0,176.0L1551.0,183.0M1544.4,205.0L1551.4,212.0M1551.4,205.0L1544.4,212.0M1541.5,212.2L1548.5,219.2M1548.5,212.2L1541.5,219.2M1560.8,191.2L1567.8,198.2M1567.8,191.2L1560.8,198.2M1561.8,215.6L1568.8,222.6M1568.8,215.6L1561.8,222.6M1561.9,222.4L1568.9,229.4M1568.9,222.4L1561.9,229.4M1582.6,194.1L1589.6,201.1M1589.6,194.1L1582.6,201.1M1585.1,194.5L1592.1,201.5M1592.1,194.5L1585.1,201.5M1598.4,218.6L1605.4,225.6M1605.4,218.6L1598.4,225.6M1592.2,242.2L1599.2,249.2M1599.2,242.2L1592.2,249.2M1587.4,187.7L1594.4,194.7M1594.4,187.7L1587.4,194.7M1601.7,202.7L1608.7,209.7M1608.7,202.7L1601.7,209.7M1621.6,211.0L1628.6,218.0M1628.6,211.0L1621.6,218.0M1631.0,181.5L1638.0,188.5M1638.0,181.5L1631.0,188.5M1638.5,180.1L1645.5,187.1M1645.5,180.1L1638.5,187.1M1644.5,182.0L1651.5,189.0M1651.5,182.0L1644.5,189.0M1659.6,177.0L1666.6,184.0M1666.6,177.0L1659.6,184.0M1666.0,173.3L1673.0,180.3M1673.0,173.3L1666.0,180.3M1684.5,177.9L1691.5,184.9M1691.5,177.9L1684.5,184.9M1692.6,187.1L1699.6,194.1M1699.6,187.1L1692.6,194.1M1696.5,195.5L1703.5,202.5M1703.5,195.5L1696.5,202.5M1645.4,223.0L1652.4,230.0M1652.4,223.0L1645.4,230.0M1611.7,236.8L1618.7,243.8M1618.7,236.8L1611.7,243.8M1637.6,257.6L1644.6,264.6M1644.6,257.6L1637.6,264.6M1642.2,263.0L1649.2,270.0M1649.2,263.0L1642.2,270.0M1645.6,267.7L1652.6,274.7M1652.6,267.7L1645.6,274.7M1653.0,271.3L1660.0,278.3M1660.0,271.3L1653.0,278.3M1654.6,271.0L1661.6,278.0M1661.6,271.0L1654.6,278.0M1667.2,275.2L1674.2,282.2M1674.2,275.2L1667.2,282.2M1672.0,273.5L1679.0,280.5M1679.0,273.5L1672.0,280.5M1691.6,227.1L1698.6,234.1M1698.6,227.1L1691.6,234.1M1733.8,208.4L1740.8,215.4M1740.8,208.4L1733.8,215.4M1722.0,235.3L1729.0,242.3M1729.0,235.3L1722.0,242.3M1727.7,257.7L1734.7,264.7M1734.7,257.7L1727.7,264.7M1728.1,262.9L1735.1,269.9M1735.1,262.9L1728.1,269.9M1726.9,270.4L1733.9,277.4M1733.9,270.4L1726.9,277.4M1724.2,275.0L1731.2,282.0M1731.2,275.0L1724.2,282.0M1690.5,244.7L1697.5,251.7M1697.5,244.7L1690.5,251.7M1508.5,279.4L1515.5,286.4M1515.5,279.4L1508.5,286.4M1531.9,276.7L1538.9,283.7M1538.9,276.7L1531.9,283.7M1421.9,305.7L1428.9,312.7M1428.9,305.7L1421.9,312.7M1448.0,313.3L1455.0,320.3M1455.0,313.3L1448.0,320.3M1424.2,326.5L1431.2,333.5M1431.2,326.5L1424.2,333.5M1443.6,339.8L1450.6,346.8M1450.6,339.8L1443.6,346.8M1454.8,345.4L1461.8,352.4M1461.8,345.4L1454.8,352.4M1488.5,284.1L1495.5,291.1M1495.5,284.1L1488.5,291.1M1488.5,294.3L1495.5,301.3M1495.5,294.3L1488.5,301.3M1483.0,308.9L1490.0,315.9M1490.0,308.9L1483.0,315.9M1474.2,327.4L1481.2,334.4M1481.2,327.4L1474.2,334.4M1483.5,332.1L1490.5,339.1M1490.5,332.1L1483.5,339.1M1487.8,337.1L1494.8,344.1M1494.8,337.1L1487.8,344.1M1522.3,368.3L1529.3,375.3M1529.3,368.3L1522.3,375.3M1530.9,372.4L1537.9,379.4M1537.9,372.4L1530.9,379.4M1546.0,277.7L1553.0,284.7M1553.0,277.7L1546.0,284.7M1542.4,328.6L1549.4,335.6M1549.4,328.6L1542.4,335.6M1541.3,340.0L1548.3,347.0M1548.3,340.0L1541.3,347.0M1534.4,344.0L1541.4,351.0M1541.4,344.0L1534.4,351.0M1493.2,334.6L1500.2,341.6M1500.2,334.6L1493.2,341.6M1555.0,382.0L1562.0,389.0M1562.0,382.0L1555.0,389.0M1579.9,383.2L1586.9,390.2M1586.9,383.2L1579.9,390.2M1608.2,360.1L1615.2,367.1M1615.2,360.1L1608.2,367.1M1623.0,346.2L1630.0,353.2M1630.0,346.2L1623.0,353.2M1640.0,330.2L1647.0,337.2M1647.0,330.2L1640.0,337.2M1640.0,323.7L1647.0,330.7M1647.0,323.7L1640.0,330.7M1618.4,368.4L1625.4,375.4M1625.4,368.4L1618.4,375.4M1623.6,355.4L1630.6,362.4M1630.6,355.4L1623.6,362.4M1630.0,345.0L1637.0,352.0M1637.0,345.0L1630.0,352.0M1688.7,275.6L1695.7,282.6M1695.7,275.6L1688.7,282.6M1693.9,298.8L1700.9,305.8M1700.9,298.8L1693.9,305.8M1729.7,298.7L1736.7,305.7M1736.7,298.7L1729.7,305.7M1712.0,308.4L1719.0,315.4M1719.0,308.4L1712.0,315.4M1704.8,309.5L1711.8,316.5M1711.8,309.5L1704.8,316.5M1669.2,275.8L1676.2,282.8M1676.2,275.8L1669.2,282.8M1671.5,275.0L1678.5,282.0M1678.5,275.0L1671.5,282.0M1679.9,290.0L1686.9,297.0M1686.9,290.0L1679.9,297.0M1697.9,387.4L1704.9,394.4M1704.9,387.4L1697.9,394.4M1700.8,396.5L1707.8,403.5M1707.8,396.5L1700.8,403.5M1700.8,408.6L1707.8,415.6M1707.8,408.6L1700.8,415.6M1505.8,333.4L1512.8,340.4M1512.8,333.4L1505.8,340.4M1589.9,358.4L1596.9,365.4M1596.9,358.4L1589.9,365.4M1595.3,302.4L1602.3,309.4M1602.3,302.4L1595.3,309.4M1526.3,169.0L1533.3,176.0M1533.3,169.0L1526.3,176.0M1543.8,161.9L1550.8,168.9M1550.8,161.9L1543.8,168.9M1528.8,175.7L1535.8,182.7M1535.8,175.7L1528.8,182.7M1649.7,205.7L1656.7,212.7M1656.7,205.7L1649.7,212.7M1698.1,385.2L1705.1,392.2M1705.1,385.2L1698.1,392.2M820.3,310.8L823.1,313.6M823.1,310.8L820.3,313.6M814.4,314.4L817.2,317.2M817.2,314.4L814.4,317.2M819.7,312.1L822.5,314.9M822.5,312.1L819.7,314.9M819.3,317.3L822.1,320.1M822.1,317.3L819.3,320.1M822.1,315.9L824.9,318.7M824.9,315.9L822.1,318.7M817.6,308.8L820.4,311.6M820.4,308.8L817.6,311.6M814.9,309.6L817.7,312.4M817.7,309.6L814.9,312.4M808.6,317.6L811.4,320.4M811.4,317.6L808.6,320.4M819.2,311.0L822.0,313.8M822.0,311.0L819.2,313.8M821.9,309.1L824.7,311.9M824.7,309.1L821.9,311.9M819.6,314.0L822.4,316.8M822.4,314.0L819.6,316.8M812.8,318.1L815.6,320.9M815.6,318.1L812.8,320.9M819.2,313.3L822.0,316.1M822.0,313.3L819.2,316.1M814.8,308.0L817.6,310.8M817.6,308.0L814.8,310.8M948.7,315.4L951.5,318.2M951.5,315.4L948.7,318.2M944.1,319.7L946.9,322.5M946.9,319.7L944.1,322.5M941.0,314.7L943.8,317.5M943.8,314.7L941.0,317.5M950.0,316.4L952.8,319.2M952.8,316.4L950.0,319.2M949.0,312.1L951.8,314.9M951.8,312.1L949.0,314.9M953.4,312.8L956.2,315.6M956.2,312.8L953.4,315.6M946.5,314.7L949.3,317.5M949.3,314.7L946.5,317.5M946.7,313.3L949.5,316.1M949.5,313.3L946.7,316.1M952.3,314.8L955.1,317.6M955.1,314.8L952.3,317.6M950.3,310.6L953.1,313.4M953.1,310.6L950.3,313.4M948.8,314.1L951.6,316.9M951.6,314.1L948.8,316.9M948.1,315.2L950.9,318.0M950.9,315.2L948.1,318.0M838.8,447.3L841.6,450.1M841.6,447.3L838.8,450.1M846.1,446.6L848.9,449.4M848.9,446.6L846.1,449.4M839.1,441.2L841.9,444.0M841.9,441.2L839.1,444.0M847.0,448.7L849.8,451.5M849.8,448.7L847.0,451.5M841.0,444.4L843.8,447.2M843.8,444.4L841.0,447.2M832.9,450.3L835.7,453.1M835.7,450.3L832.9,453.1M839.8,449.5L842.6,452.3M842.6,449.5L839.8,452.3M850.6,447.9L853.4,450.7M853.4,447.9L850.6,450.7M843.4,455.1L846.2,457.9M846.2,455.1L843.4,457.9M843.1,450.6L845.9,453.4M845.9,450.6L843.1,453.4M838.9,445.0L841.7,447.8M841.7,445.0L838.9,447.8M836.8,455.4L839.6,458.2M839.6,455.4L836.8,458.2M849.8,447.5L852.6,450.3M852.6,447.5L849.8,450.3M843.7,448.1L846.5,450.9M846.5,448.1L843.7,450.9M856.4,455.9L859.2,458.7M859.2,455.9L856.4,458.7M843.9,454.3L846.7,457.1M846.7,454.3L843.9,457.1M850.6,445.1L853.4,447.9M853.4,445.1L850.6,447.9M847.4,454.0L850.2,456.8M850.2,454.0L847.4,456.8M844.8,455.0L847.6,457.8M847.6,455.0L844.8,457.8M850.1,450.9L852.9,453.7M852.9,450.9L850.1,453.7M843.1,455.8L845.9,458.6M845.9,455.8L843.1,458.6M845.5,453.0L848.3,455.8M848.3,453.0L845.5,455.8M853.5,452.9L856.3,455.7M856.3,452.9L853.5,455.7M844.5,443.6L847.3,446.4M847.3,443.6L844.5,446.4M846.4,452.8L849.2,455.6M849.2,452.8L846.4,455.6M847.5,453.9L850.3,456.7M850.3,453.9L847.5,456.7M943.6,278.2L946.4,281.0M946.4,278.2L943.6,281.0M947.4,275.9L950.2,278.7M950.2,275.9L947.4,278.7M946.7,277.6L949.5,280.4M949.5,277.6L946.7,280.4M947.1,278.1L949.9,280.9M949.9,278.1L947.1,280.9M945.4,279.2L948.2,282.0M948.2,279.2L945.4,282.0" fill="none" stroke="#ff0000" stroke-width="1.05" opacity="1"/>
<path d="M1495.9,153.5L1502.9,160.5M1502.9,153.5L1495.9,160.5M1492.9,158.0L1499.9,165.0M1499.9,158.0L1492.9,165.0M1490.7,162.6L1497.7,169.6M1497.7,162.6L1490.7,169.6M1488.7,178.1L1495.7,185.1M1495.7,178.1L1488.7,185.1M1487.9,183.0L1494.9,190.0M1494.9,183.0L1487.9,190.0M1485.5,190.1L1492.5,197.1M1492.5,190.1L1485.5,197.1M1504.7,198.3L1511.7,205.3M1511.7,198.3L1504.7,205.3M1515.3,206.7L1522.3,213.7M1522.3,206.7L1515.3,213.7M1523.0,214.6L1530.0,221.6M1530.0,214.6L1523.0,221.6M1525.0,218.8L1532.0,225.8M1532.0,218.8L1525.0,225.8M1520.5,142.6L1527.5,149.6M1527.5,142.6L1520.5,149.6M1533.5,145.4L1540.5,152.4M1540.5,145.4L1533.5,152.4M1547.8,144.8L1554.8,151.8M1554.8,144.8L1547.8,151.8M1577.4,148.6L1584.4,155.6M1584.4,148.6L1577.4,155.6M1589.8,160.0L1596.8,167.0M1596.8,160.0L1589.8,167.0M1498.3,180.7L1505.3,187.7M1505.3,180.7L1498.3,187.7M1504.1,181.4L1511.1,188.4M1511.1,181.4L1504.1,188.4M1510.7,184.7L1517.7,191.7M1517.7,184.7L1510.7,191.7M1543.3,198.4L1550.3,205.4M1550.3,198.4L1543.3,205.4M1529.7,214.1L1536.7,221.1M1536.7,214.1L1529.7,221.1M1561.0,189.0L1568.0,196.0M1568.0,189.0L1561.0,196.0M1560.2,227.3L1567.2,234.3M1567.2,227.3L1560.2,234.3M1557.8,231.3L1564.8,238.3M1564.8,231.3L1557.8,238.3M1587.0,203.4L1594.0,210.4M1594.0,203.4L1587.0,210.4M1588.9,206.7L1595.9,213.7M1595.9,206.7L1588.9,213.7M1600.9,224.0L1607.9,231.0M1607.9,224.0L1600.9,231.0M1596.1,231.1L1603.1,238.1M1603.1,231.1L1596.1,238.1M1595.4,197.9L1602.4,204.9M1602.4,197.9L1595.4,204.9M1619.4,212.3L1626.4,219.3M1626.4,212.3L1619.4,219.3M1625.7,208.3L1632.7,215.3M1632.7,208.3L1625.7,215.3M1648.9,180.2L1655.9,187.2M1655.9,180.2L1648.9,187.2M1612.5,218.8L1619.5,225.8M1619.5,218.8L1612.5,225.8M1639.0,220.2L1646.0,227.2M1646.0,220.2L1639.0,227.2M1671.7,226.7L1678.7,233.7M1678.7,226.7L1671.7,233.7M1633.2,254.3L1640.2,261.3M1640.2,254.3L1633.2,261.3M1661.3,272.4L1668.3,279.4M1668.3,272.4L1661.3,279.4M1671.1,225.5L1678.1,232.5M1678.1,225.5L1671.1,232.5M1678.6,226.3L1685.6,233.3M1685.6,226.3L1678.6,233.3M1702.1,224.6L1709.1,231.6M1709.1,224.6L1702.1,231.6M1708.6,235.0L1715.6,242.0M1715.6,235.0L1708.6,242.0M1711.8,237.7L1718.8,244.7M1718.8,237.7L1711.8,244.7M1711.7,241.3L1718.7,248.3M1718.7,241.3L1711.7,248.3M1723.6,246.9L1730.6,253.9M1730.6,246.9L1723.6,253.9M1721.5,199.8L1728.5,206.8M1728.5,199.8L1721.5,206.8M1724.6,201.6L1731.6,208.6M1731.6,201.6L1724.6,208.6M1725.1,244.3L1732.1,251.3M1732.1,244.3L1725.1,251.3M1722.7,248.3L1729.7,255.3M1729.7,248.3L1722.7,255.3M1721.3,285.7L1728.3,292.7M1728.3,285.7L1721.3,292.7M1719.5,296.5L1726.5,303.5M1726.5,296.5L1719.5,303.5M1692.9,256.8L1699.9,263.8M1699.9,256.8L1692.9,263.8M1690.7,284.4L1697.7,291.4M1697.7,284.4L1690.7,291.4M1684.0,292.0L1691.0,299.0M1691.0,292.0L1684.0,299.0M1543.7,276.4L1550.7,283.4M1550.7,276.4L1543.7,283.4M1546.1,277.4L1553.1,284.4M1553.1,277.4L1546.1,284.4M1461.9,313.3L1468.9,320.3M1468.9,313.3L1461.9,320.3M1410.1,314.4L1417.1,321.4M1417.1,314.4L1410.1,321.4M1450.5,344.4L1457.5,351.4M1457.5,344.4L1450.5,351.4M1473.8,357.1L1480.8,364.1M1480.8,357.1L1473.8,364.1M1476.8,358.0L1483.8,365.0M1483.8,358.0L1476.8,365.0M1478.4,324.8L1485.4,331.8M1485.4,324.8L1478.4,331.8M1492.8,343.8L1499.8,350.8M1499.8,343.8L1492.8,350.8M1514.1,353.8L1521.1,360.8M1521.1,353.8L1514.1,360.8M1518.3,277.9L1525.3,284.9M1525.3,277.9L1518.3,284.9M1524.9,275.5L1531.9,282.5M1531.9,275.5L1524.9,282.5M1532.8,277.5L1539.8,284.5M1539.8,277.5L1532.8,284.5M1514.2,308.4L1521.2,315.4M1521.2,308.4L1514.2,315.4M1549.8,334.7L1556.8,341.7M1556.8,334.7L1549.8,341.7M1485.5,323.4L1492.5,330.4M1492.5,323.4L1485.5,330.4M1529.9,381.0L1536.9,388.0M1536.9,381.0L1529.9,388.0M1561.1,384.2L1568.1,391.2M1568.1,384.2L1561.1,391.2M1565.2,384.2L1572.2,391.2M1572.2,384.2L1565.2,391.2M1583.0,382.9L1590.0,389.9M1590.0,382.9L1583.0,389.9M1590.9,384.6L1597.9,391.6M1597.9,384.6L1590.9,391.6M1605.9,374.9L1612.9,381.9M1612.9,374.9L1605.9,381.9M1607.2,365.5L1614.2,372.5M1614.2,365.5L1607.2,372.5M1613.1,357.8L1620.1,364.8M1620.1,357.8L1613.1,364.8M1619.1,350.7L1626.1,357.7M1626.1,350.7L1619.1,357.7M1628.9,347.2L1635.9,354.2M1635.9,347.2L1628.9,354.2M1694.4,286.5L1701.4,293.5M1701.4,286.5L1694.4,293.5M1695.2,306.9L1702.2,313.9M1702.2,306.9L1695.2,313.9M1700.5,311.7L1707.5,318.7M1707.5,311.7L1700.5,318.7M1717.6,308.0L1724.6,315.0M1724.6,308.0L1717.6,315.0M1694.8,364.8L1701.8,371.8M1701.8,364.8L1694.8,371.8M1698.2,377.1L1705.2,384.1M1705.2,377.1L1698.2,384.1M1700.5,400.6L1707.5,407.6M1707.5,400.6L1700.5,407.6M1701.5,435.0L1708.5,442.0M1708.5,435.0L1701.5,442.0M1700.9,437.1L1707.9,444.1M1707.9,437.1L1700.9,444.1M1701.8,454.2L1708.8,461.2M1708.8,454.2L1701.8,461.2M1702.9,457.1L1709.9,464.1M1709.9,457.1L1702.9,464.1M1725.3,277.7L1732.3,284.7M1732.3,277.7L1725.3,284.7M1539.0,166.1L1546.0,173.1M1546.0,166.1L1539.0,173.1M1531.3,170.0L1538.3,177.0M1538.3,170.0L1531.3,177.0M1521.7,167.2L1528.7,174.2M1528.7,167.2L1521.7,174.2M1517.4,160.1L1524.4,167.1M1524.4,160.1L1517.4,167.1M1519.0,158.3L1526.0,165.3M1526.0,158.3L1519.0,165.3M1526.0,150.6L1533.0,157.6M1533.0,150.6L1526.0,157.6M1531.2,152.8L1538.2,159.8M1538.2,152.8L1531.2,159.8M1539.6,158.2L1546.6,165.2M1546.6,158.2L1539.6,165.2M1541.0,167.2L1548.0,174.2M1548.0,167.2L1541.0,174.2M1515.6,160.6L1522.6,167.6M1522.6,160.6L1515.6,167.6M1521.0,148.9L1528.0,155.9M1528.0,148.9L1521.0,155.9M1542.1,153.4L1549.1,160.4M1549.1,153.4L1542.1,160.4M1663.3,196.4L1670.3,203.4M1670.3,196.4L1663.3,203.4M1699.7,388.6L1706.7,395.6M1706.7,388.6L1699.7,395.6M1700.7,387.2L1707.7,394.2M1707.7,387.2L1700.7,394.2M1700.1,386.5L1707.1,393.5M1707.1,386.5L1700.1,393.5" fill="none" stroke="#ff0000" stroke-width="1.05" opacity="0.55"/>
<path d="M862.5,350.1L866.9,345.1L870.7,345.7L871.3,347.6L868.1,351.3L868.8,355.7L865,358.8L861.3,357.6L864.4,353.8Z" fill="#d2a8ff"/>
<path d="M912.5,305.3L929.5,305.3L921.5,311.5 M881.5,339.5L888.3,325.3L901.5,333.6 M873,341L886.5,351.5 M886.5,344.5L889.5,347.5L898,337.5 M869,364L877,358.5L883,355.5 M858,372L866,366" fill="none" stroke="#d2a8ff" stroke-width="2.6" stroke-linejoin="miter"/>
<path d="M651.7,137.5C650.7,140.8 647.8,152.0 645.5,157.4C643.2,162.8 638.8,165.7 638,169.9C637.2,174.1 641.1,178.2 640.5,182.4C639.9,186.6 635.6,191.1 634.2,194.8C632.8,198.5 632.2,200.2 632.2,204.8C632.2,209.4 632.4,218.4 634.2,222.3C636.0,226.2 642.2,226.0 643,228.5C643.8,231.0 638.2,233.7 639.2,237.2C640.2,240.7 647.3,245.5 649.2,249.7C651.1,253.9 652.3,256.4 650.4,262.2C648.5,268.0 640.7,279.6 638,284.6C635.3,289.6 634.6,289.6 634.2,292.1C633.8,294.6 636.7,297.1 635.5,299.6C634.3,302.1 628.9,302.4 626.8,307C624.7,311.6 624.0,320.4 623,327C622.0,333.6 621.5,342.1 620.5,346.9C619.5,351.7 619.1,351.9 616.8,355.7C614.5,359.4 608.2,363.4 606.8,369.4C605.3,375.4 607.3,383.5 608.1,391.8C608.9,400.1 611.4,413.7 611.8,419.2C612.2,424.7 610.7,424.0 610.5,425 M347.5,272.6C350.8,273.8 358.3,277.2 367.4,279.6C376.5,282.0 390.7,283.6 402.3,287.1C413.9,290.6 426.8,297.7 437.2,300.8C447.6,303.9 453.9,304.4 464.7,305.8C475.5,307.2 492.6,309.0 502.1,309.5C511.7,310.0 514.9,307.3 522,309C529.1,310.7 539.1,316.1 544.5,319.5C549.9,322.9 551.9,325.8 554.4,329.5C556.9,333.2 559.1,338.2 559.4,341.9C559.7,345.6 555.6,348.6 556.4,351.9C557.2,355.2 561.8,357.7 564.4,361.9C567.0,366.1 569.4,371.9 571.9,376.9C574.4,381.9 578.2,387.2 579.4,391.8C580.6,396.4 578.5,400.1 578.9,404.3C579.3,408.5 581.3,413.4 581.9,416.8C582.5,420.2 582.5,423.6 582.6,425 M925.5,200C927.0,201.7 932.4,207.1 934.3,210C936.2,212.9 935.1,214.5 936.7,217.4C938.4,220.3 941.3,224.1 944.2,227.4C947.1,230.7 952.3,234.3 954.2,237.4C956.1,240.5 955.8,243.8 955.4,246.1C955.0,248.4 954.0,249.4 951.7,251.1C949.4,252.8 943.8,254.1 941.7,256C939.6,257.9 940.9,260.0 939.2,262.3C937.6,264.6 934.9,267.4 931.8,269.7C928.7,272.0 923.1,274.3 920.6,276C918.1,277.7 917.2,278.1 916.8,279.7C916.4,281.3 919.1,283.4 918.1,285.9C917.1,288.4 913.1,291.6 910.6,294.7C908.1,297.8 905.0,301.7 903.1,304.6C901.2,307.5 902.1,310.2 899.4,312.1C896.7,314.0 890.0,314.1 886.9,315.8C883.8,317.5 882.4,319.4 880.7,322.1C879.1,324.8 878.9,329.1 877,332C875.1,334.9 871.6,337.0 869.5,339.5C867.4,342.0 865.3,345.8 864.5,347 M924.9,200C926.4,201.7 931.7,207.1 933.6,210C935.5,212.9 934.7,214.7 936.1,217.4C937.5,220.1 939.8,223.3 942.3,226.2C944.8,229.1 948.9,232.2 951,234.9C953.1,237.6 954.2,240.2 954.8,242.3C955.4,244.4 954.8,246.5 954.8,247.3 M992.1,200C991.9,201.0 993.0,204.3 990.9,206.2C988.8,208.1 981.9,209.3 979.7,211.2C977.5,213.1 977.7,215.1 977.8,217.4C977.9,219.7 980.4,222.8 980.3,224.9C980.2,227.0 979.4,228.5 977.2,229.9C975.0,231.3 970.3,231.7 967.2,233.6C964.1,235.5 960.6,238.8 958.5,241.1C956.4,243.4 956.2,245.6 954.8,247.3C953.3,249.0 952.1,249.4 949.8,251.1C947.5,252.8 943.0,255.4 941.1,257.3C939.2,259.2 940.3,260.4 938.6,262.3C936.9,264.2 934.0,266.4 931.1,268.5C928.2,270.6 923.5,272.8 921.1,274.7C918.7,276.6 917.3,277.8 916.8,279.7C916.3,281.6 917.8,284.9 918,285.9 M868.2,340C867.6,341.2 866.6,345.4 864.5,347.5C862.4,349.6 858.5,349.8 855.8,352.5C853.1,355.2 851.0,360.0 848.3,363.7C845.6,367.4 842.7,371.2 839.6,374.9C836.5,378.6 832.9,382.6 829.6,386.1C826.3,389.6 823.0,393.9 819.7,396C816.4,398.1 812.8,397.9 809.7,398.5C806.6,399.1 802.9,398.8 801,399.8C799.1,400.9 799.1,403.2 798.5,404.8C797.9,406.4 799.0,408.5 797.3,409.7C795.6,410.9 790.6,410.7 788.5,412.2C786.4,413.7 787.1,416.8 784.8,418.5C782.5,420.2 777.3,419.9 774.8,422.2C772.3,424.5 772.2,429.3 769.9,432.2C767.6,435.1 764.9,436.3 761.1,439.6C757.4,442.9 750.1,448.8 747.4,452.1C744.7,455.4 746.5,457.7 744.9,459.6C743.2,461.5 740.0,462.1 737.5,463.3C735.0,464.5 731.2,466.4 730,467 M878.2,137.5C878.6,139.2 879.2,143.8 880.7,147.5C882.2,151.2 883.8,155.8 886.9,159.9C890.0,164.1 894.0,167.0 899.4,172.4C904.8,177.8 914.3,186.9 919.3,192.3C924.3,197.7 926.4,200.6 929.3,204.8C932.2,209.0 935.5,215.2 936.8,217.3 M1004.1,137.5C1003.9,138.3 1002.7,140.0 1002.9,142.5C1003.1,145.0 1006.4,148.2 1005.4,152.4C1004.4,156.6 999.3,163.2 996.6,167.4C993.9,171.6 989.9,173.7 989.1,177.4C988.3,181.1 991.2,185.7 991.6,189.8C992.0,194.0 993.2,199.0 991.6,202.3C990.0,205.6 984.2,207.3 981.7,209.8C979.2,212.3 977.5,216.1 976.7,217.3 M1134.9,137.5C1136.2,138.8 1141.0,142.3 1142.4,145C1143.9,147.7 1140.7,150.8 1143.6,153.7C1146.5,156.6 1155.6,157.6 1159.8,162.4C1164.0,167.2 1167.1,177.4 1168.6,182.4C1170.1,187.4 1164.6,188.6 1168.6,192.3C1172.5,196.0 1188.1,201.1 1192.3,204.8C1196.5,208.6 1190.6,209.8 1193.5,214.8C1196.4,219.8 1204.9,231.0 1209.7,234.7C1214.5,238.4 1217.2,236.1 1222.2,237.2C1227.2,238.2 1233.4,238.9 1239.6,241C1245.8,243.1 1253.8,246.6 1259.6,249.7C1265.4,252.8 1270.3,257.8 1274.5,259.7C1278.7,261.6 1279.9,261.7 1284.5,260.9C1289.1,260.1 1296.6,255.3 1302,254.7C1307.4,254.1 1311.9,255.1 1316.9,257.2C1321.9,259.3 1326.9,264.4 1331.9,267.1C1336.9,269.8 1341.9,272.1 1346.9,273.4C1351.9,274.6 1357.2,273.6 1361.8,274.6C1366.4,275.6 1370.1,277.9 1374.3,279.6C1378.5,281.3 1383.1,279.6 1386.8,284.6C1390.5,289.6 1393.0,302.9 1396.7,309.5C1400.4,316.1 1405.0,319.9 1409.2,324.5C1413.4,329.1 1417.6,331.6 1421.7,337C1425.8,342.4 1430.4,349.8 1434.1,356.9C1437.8,364.0 1439.9,373.6 1444.1,379.4C1448.3,385.2 1454.5,387.6 1459.1,391.8C1463.7,396.0 1466.1,401.0 1471.5,404.3C1476.9,407.6 1484.8,409.7 1491.5,411.8C1498.2,413.9 1505.2,414.6 1511.4,416.8C1517.6,419.0 1526.0,423.6 1528.9,425 M1264.6,182.4C1262.5,183.8 1254.0,186.1 1252.1,191.1C1250.2,196.1 1252.8,206.3 1253.4,212.3C1254.0,218.3 1253.7,221.8 1255.8,227.2C1257.9,232.6 1263.9,240.3 1265.8,244.7C1267.7,249.1 1266.9,251.9 1267.1,253.4 M1396.7,237.2C1395.5,240.1 1390.9,248.9 1389.2,254.7C1387.5,260.5 1387.2,267.1 1386.8,272.1C1386.4,277.1 1386.8,282.5 1386.8,284.6 M1695.1,137C1695.0,138.2 1694.2,141.6 1694.3,144.1C1694.4,146.6 1695.5,150.6 1695.8,151.9 M1690.5,355.9C1691.0,357.1 1693.1,359.0 1693.3,363.4C1693.5,367.8 1691.1,374.6 1691.4,382.1C1691.7,389.6 1694.6,395.8 1695.2,408.2C1695.8,420.6 1695.2,443.4 1695.2,456.8C1695.2,470.2 1697.1,483.2 1695.2,488.6C1693.3,494.1 1685.9,489.4 1684,489.5 M583.1,420C583.5,422.1 582.9,427.1 585.6,432.5C588.3,437.9 595.3,446.6 599.3,452.4C603.2,458.2 606.4,463.4 609.3,467.4C612.2,471.3 612.6,474.0 616.8,476.1C620.9,478.2 630.7,476.7 634.2,479.8C637.7,482.9 636.5,489.8 638,494.8C639.5,499.8 638.6,507.3 643,509.8C647.4,512.3 658.8,507.5 664.2,509.8C669.6,512.1 674.6,519.1 675.4,523.5C676.2,527.9 668.9,530.9 669.1,535.9C669.3,540.9 675.1,548.6 676.6,553.4C678.1,558.2 679.1,559.0 677.9,564.6C676.6,570.2 671.8,581.3 669.1,587.1C666.4,592.9 665.9,596.2 661.7,599.5C657.6,602.8 648.0,602.8 644.2,607C640.5,611.2 640.9,619.9 639.2,624.5C637.5,629.1 634.8,630.2 634.2,634.4C633.6,638.5 638.0,644.8 635.5,649.4C633.0,654.0 622.8,658.6 619.3,661.9C615.8,665.2 614.7,664.0 614.3,669.4C613.9,674.8 616.4,686.7 616.8,694.3C617.2,701.9 616.8,711.5 616.8,715 M610.5,420C610.7,421.2 609.9,425.4 611.8,427.5C613.7,429.6 619.3,428.8 621.8,432.5C624.3,436.2 625.1,444.5 626.8,449.9C628.4,455.3 630.1,459.5 631.7,464.9C633.4,470.3 635.9,479.4 636.7,482.3 M676.6,553.4C679.5,550.7 689.3,542.0 694.1,537.2C698.9,532.4 703.4,528.4 705.3,524.7C707.2,521.0 704.3,516.9 705.3,514.8C706.3,512.7 710.2,515.6 711.5,512.3C712.8,509.0 711.8,499.8 712.8,494.8C713.8,489.8 716.8,486.5 717.8,482.3C718.8,478.1 717.1,472.8 719,469.9C720.9,467.0 725.2,465.9 729,464.9C732.8,463.8 737.4,466.1 741.5,463.6C745.6,461.1 749.8,454.7 753.9,449.9C758.0,445.1 763.1,440.0 766.4,435C769.7,430.0 772.6,422.5 773.9,420 M1516.7,420C1518.8,421.2 1524.5,423.4 1529.1,427.5C1533.7,431.6 1537.4,441.6 1544.1,444.9C1550.8,448.2 1562.3,444.5 1569,447.4C1575.7,450.3 1574.8,457.0 1584,462.4C1593.2,467.8 1613.1,475.9 1623.9,479.8C1634.7,483.8 1640.5,483.8 1648.8,486.1C1657.1,488.4 1668.6,492.6 1673.8,493.6C1679.0,494.6 1676.3,492.9 1680,492.3C1683.7,491.7 1693.5,490.2 1696.2,489.8 M1695.2,488C1695.2,497.5 1695.4,509.7 1695.4,545C1695.5,580.3 1695.5,663.5 1695.5,700C1695.5,736.5 1695.7,752.5 1695.5,764C1695.3,775.5 1694.8,768.2 1694.6,769 M616.8,700C616.8,702.9 619.3,713.4 616.8,717.5C614.3,721.6 606.0,721.6 601.8,724.9C597.6,728.2 595.5,732.0 591.8,737.4C588.1,742.8 581.5,754.1 579.4,757.4 M579.4,757.4C576.9,755.7 571.0,750.7 564.4,747.4C557.8,744.1 545.7,739.7 539.5,737.4C533.3,735.1 531.6,733.8 527,733.7C522.4,733.6 518.3,736.3 512.1,736.9C505.9,737.5 494.6,736.1 489.6,737.4C484.6,738.7 482.9,741.2 482.1,744.9C481.3,748.6 483.4,754.4 484.6,759.8C485.9,765.2 487.1,771.5 489.6,777.3C492.1,783.1 497.5,789.4 499.6,794.8C501.7,800.2 502.1,803.9 502.1,809.7C502.1,815.5 501.7,824.9 499.6,829.7C497.5,834.5 493.8,837.2 489.6,838.4C485.4,839.5 480.0,838.0 474.6,836.6C469.2,835.2 467.2,833.4 457.2,829.7C447.2,826.1 422.5,815.8 414.8,814.7C407.1,813.7 406.1,820.1 411.1,823.4C416.1,826.7 437.0,832.5 444.7,834.6C452.4,836.7 454.7,835.1 457.2,835.9C459.7,836.7 456.0,838.2 459.7,839.6C463.4,841.0 473.8,844.1 479.6,844.1C485.4,844.1 490.4,841.6 494.6,839.6C498.8,837.6 502.1,835.9 504.6,832.2C507.1,828.5 508.4,821.4 509.6,817.2C510.9,813.0 512.5,810.5 512.1,807.2C511.7,803.9 509.6,802.6 507.1,797.2C504.6,791.8 499.6,782.7 497.1,774.8C494.6,766.9 491.3,755.1 492.1,749.9C492.9,744.7 495.9,745.1 502.1,743.6C508.3,742.1 520.8,740.1 529.5,741.1C538.2,742.1 546.1,746.6 554.4,749.9C562.7,753.2 575.2,759.2 579.4,761.1 M578.1,759.8C575.0,758.3 566.7,754.4 559.4,751.1C552.1,747.8 542.0,741.6 534.5,739.9C527.0,738.2 521.1,740.7 514.5,741.1C507.9,741.5 499.0,740.9 494.6,742.4C490.2,743.9 489.2,746.2 488.4,749.9C487.6,753.6 488.4,759.4 489.6,764.8C490.8,770.2 493.3,775.6 495.8,782.3C498.3,788.9 502.9,798.9 504.6,804.7C506.3,810.5 506.2,813.0 505.8,817.2C505.4,821.4 504.4,826.6 502.1,829.7C499.8,832.8 495.9,834.0 492.1,835.9C488.4,837.8 484.2,840.9 479.6,840.9C475.0,840.9 469.3,837.3 464.7,835.9C460.1,834.5 454.3,832.8 452.2,832.2 M347.5,792.8C351.6,794.8 361.2,800.2 372.4,804.7C383.6,809.2 407.7,817.2 414.8,819.7 M580.6,759.3C582.1,761.5 587.7,768.0 589.4,772.3C591.1,776.5 590.6,779.0 590.6,784.8C590.6,790.6 590.4,800.6 589.4,807.2C588.4,813.9 587.7,817.6 584.4,824.7C581.1,831.8 572.5,841.3 569.4,849.6C566.3,857.9 565.7,867.4 565.7,874.5C565.7,881.6 567.1,886.6 569.4,892C571.7,897.4 574.4,901.6 579.4,907C584.4,912.4 591.8,920.0 599.3,924.4C606.8,928.8 616.8,931.6 624.3,933.1C631.8,934.6 637.6,934.6 644.2,933.1C650.9,931.6 655.1,929.2 664.2,924.4C673.4,919.6 688.3,911.1 699.1,904.5C709.9,897.9 720.3,891.1 729,884.5C737.7,877.9 746.2,870.0 751.4,864.6C756.6,859.2 758.3,857.1 760.2,852.1C762.1,847.1 762.0,840.8 762.6,834.6C763.2,828.4 763.7,818.0 763.9,814.7 M952.1,855.8C949.2,858.1 941.2,864.6 934.6,869.6C928.0,874.6 917.4,880.4 912.2,885.8C907.0,891.2 905.5,896.4 903.4,902C901.3,907.6 899.9,915.2 899.7,919.4C899.5,923.5 901.0,924.4 902.2,926.9C903.5,929.4 901.4,929.8 907.2,934.4C913.0,939.0 932.1,951.0 937.1,954.3 M949.6,857.1C946.7,859.6 938.8,866.7 932.1,872.1C925.5,877.5 914.8,883.7 909.7,889.5C904.6,895.3 902.8,901.6 901.4,907C900.0,912.4 900.0,917.5 901.4,921.9C902.8,926.2 903.3,927.9 909.7,933.1C916.1,938.3 934.6,949.8 939.6,953.1 M1642.6,955.6C1645.3,952.1 1654.8,938.1 1658.8,934.4C1662.8,930.6 1662.8,933.3 1666.3,933.1C1669.8,932.9 1675.4,933.4 1680,933.1C1684.6,932.8 1690.2,932.5 1693.7,931.4C1697.2,930.3 1700.0,927.2 1701.2,926.4" fill="none" stroke="#9fcbff" stroke-width="1.1" stroke-linejoin="round"/>
<path d="M583.1,758.6C584.5,759.2 589.3,758.8 591.8,762.3C594.3,765.8 596.4,775.6 598.1,779.8C599.8,784.0 601.4,784.8 601.8,787.3C602.2,789.8 600.2,792.3 600.6,794.8C601.0,797.3 604.5,797.6 604.3,802.2C604.1,806.8 601.8,816.8 599.3,822.2C596.8,827.6 592.5,828.4 589.4,834.6C586.3,840.8 582.5,852.1 580.6,859.6C578.7,867.1 577.7,873.3 578.1,879.5C578.5,885.7 580.0,892.0 583.1,897C586.2,902.0 589.9,905.8 596.8,909.5C603.7,913.2 616.4,917.8 624.3,919.4C632.2,921.0 636.3,921.0 644.2,919.4C652.1,917.8 660.8,914.5 671.6,909.5C682.4,904.5 697.0,897.4 709,889.5C721.0,881.6 736.2,869.6 743.9,862.1C751.6,854.6 753.5,851.7 755.2,844.6C756.9,837.5 752.5,828.4 753.9,819.7C755.3,811.0 761.4,798.5 763.9,792.3C766.4,786.1 765.6,784.8 768.9,782.3C772.2,779.8 779.2,776.9 783.8,777.3C788.4,777.7 792.5,781.1 796.3,784.8C800.0,788.5 802.3,796.8 806.3,799.7C810.2,802.6 817.7,801.8 820,802.2 M748.9,849.6C750.6,844.2 755.6,827.6 758.9,817.2C762.2,806.8 764.8,793.1 768.9,787.3C773.0,781.5 779.6,781.5 783.8,782.3C787.9,783.1 790.5,786.9 793.8,792.3C797.1,797.7 799.4,809.7 803.8,814.7C808.2,819.7 817.3,821.0 820,822.2 M763.9,814.7C765.1,811.4 768.1,799.2 771.4,794.8C774.7,790.4 779.6,788.5 783.8,788.5C787.9,788.5 792.5,791.7 796.3,794.8C800.0,797.9 802.3,804.7 806.3,807.2C810.2,809.7 817.7,809.3 820,809.7 M780,777.3C781.7,777.7 786.3,777.3 790,779.8C793.7,782.3 797.8,788.1 802.4,792.3C807.0,796.4 812.0,801.8 817.4,804.7C822.8,807.6 826.6,809.1 834.9,809.7C843.2,810.3 856.5,808.1 867.3,808.5C878.1,808.9 889.3,810.3 899.7,812.2C910.1,814.1 920.5,816.8 929.6,819.7C938.7,822.6 948.7,827.2 954.5,829.7C960.3,832.2 962.4,832.1 964.5,834.6C966.6,837.1 966.2,842.1 967,844.6C967.8,847.1 969.1,848.8 969.5,849.6 M780,782.3C782.1,783.1 788.4,783.6 792.5,787.3C796.6,791.0 800.3,800.6 804.9,804.7C809.5,808.9 812.4,811.2 819.9,812.2C827.4,813.2 839.8,811.2 849.8,811C859.8,810.8 868.9,810.0 879.7,811C890.5,812.0 904.2,814.5 914.6,817.2C925.0,819.9 935.2,823.5 942.1,827.2C949.0,830.9 953.3,836.3 955.8,839.6C958.3,842.9 957.6,844.6 957,847.1C956.4,849.6 955.8,850.9 952.1,854.6C948.4,858.4 940.9,863.8 934.6,869.6C928.4,875.4 919.6,883.3 914.6,889.5C909.6,895.7 906.8,901.2 904.7,907C902.6,912.8 901.4,919.8 902.2,924.4C903.0,929.0 905.1,930.6 909.7,934.4C914.3,938.1 922.1,942.8 929.6,946.9C937.1,951.0 946.2,957.0 954.5,959.3C962.8,961.6 967.0,960.4 979.5,960.6C992.0,960.8 1021.1,960.6 1029.4,960.6 M780,788.5C781.2,789.1 784.2,787.9 787.5,792.3C790.8,796.7 795.8,809.9 799.9,814.7C804.0,819.5 807.4,820.3 812.4,820.9C817.4,821.5 824.1,819.6 829.9,818.4C835.7,817.2 839.4,814.1 847.3,813.5C855.2,812.9 866.4,813.2 877.2,814.7C888.0,816.2 901.8,819.3 912.2,822.2C922.6,825.1 933.0,828.9 939.6,832.2C946.2,835.5 949.8,839.2 952.1,842.1C954.4,845.0 953.7,847.7 953.3,849.6C952.9,851.5 950.2,852.8 949.6,853.4" fill="none" stroke="#a6d4f4" stroke-width="1.1"/>
<g fill="none" stroke-linejoin="round"><path d="M727.7,624.5C729.2,626.6 733.4,633.2 736.5,636.9C739.6,640.6 744.3,642.3 746.4,646.9C748.5,651.5 748.7,656.5 748.9,664.4C749.1,672.3 747.9,685.9 747.7,694.3C747.5,702.7 747.7,711.5 747.7,715 M741.5,681.8C743.6,681.4 750.2,678.9 753.9,679.3C757.6,679.7 761.4,681.4 763.9,684.3C766.4,687.2 766.8,692.6 768.9,696.8C771.0,700.9 773.1,706.7 776.4,709.2C779.7,711.7 783.4,711.7 788.8,711.7C794.2,711.7 803.6,709.2 808.8,709.2C814.0,709.2 818.1,711.3 820,711.7 M1154,504.8C1151.5,506.1 1144.9,507.1 1139.1,512.3C1133.3,517.5 1120.8,529.2 1119.1,535.9C1117.4,542.5 1125.3,547.8 1129.1,552.2C1132.8,556.6 1137.4,558.4 1141.6,562.1C1145.8,565.8 1150.9,572.4 1154,574.6C1157.1,576.8 1159.2,575.0 1160.3,575.1 M1156.5,507.3C1162.3,511.0 1179.4,522.2 1191.4,529.7C1203.5,537.2 1217.4,545.6 1228.8,552.2C1240.2,558.9 1254.8,566.7 1260,569.6 M1260,579.6C1254.8,581.7 1240.2,587.1 1228.8,592.1C1217.4,597.1 1202.6,604.5 1191.4,609.5C1180.2,614.5 1167.3,618.7 1161.5,622C1155.7,625.3 1152.8,628.6 1156.5,629.5C1160.2,630.4 1174.3,627.9 1183.9,627.5C1193.5,627.1 1208.9,625.4 1213.9,627C1218.9,628.6 1215.6,633.6 1213.9,636.9C1212.2,640.2 1205.6,643.1 1203.9,646.9C1202.2,650.6 1207.6,655.6 1203.9,659.4C1200.2,663.1 1184.8,665.2 1181.5,669.4C1178.2,673.5 1181.0,680.1 1183.9,684.3C1186.8,688.4 1195.6,689.2 1198.9,694.3C1202.2,699.4 1203.1,711.5 1203.9,715 M1161.5,649.4C1160.2,650.0 1156.5,654.8 1154,653.1C1151.5,651.4 1150.7,642.5 1146.5,639.4C1142.3,636.3 1136.1,632.7 1129.1,634.4C1122.0,636.1 1112.5,645.2 1104.2,649.4C1095.9,653.6 1088.4,655.9 1079.2,659.4C1070.0,662.9 1054.3,668.7 1049.3,670.6 M1079.2,659.4C1079.4,662.7 1082.6,671.8 1080.5,679.3C1078.4,686.8 1069.1,698.3 1066.8,704.3C1064.5,710.2 1066.8,713.2 1066.8,715 M1014.4,664.4C1015.6,666.9 1018.2,674.7 1021.9,679.3C1025.6,683.9 1031.4,687.6 1036.8,691.8C1042.2,696.0 1049.3,701.8 1054.3,704.3C1059.3,706.8 1064.7,706.4 1066.8,706.8 M780,711.7C784.1,711.5 798.2,710.0 804.9,710.5C811.5,711.0 817.4,714.2 819.9,715 M748.9,700C748.5,704.1 748.0,714.1 746.4,724.9C744.8,735.7 741.9,753.1 739,764.8C736.1,776.4 732.5,786.5 729,794.8C725.5,803.1 719.5,808.1 717.8,814.7C716.1,821.3 717.5,829.6 719,834.6C720.5,839.6 723.8,841.7 726.5,844.6C729.2,847.5 731.5,852.1 735.2,852.1C738.9,852.1 746.6,850.0 748.9,844.6C751.2,839.2 748.1,829.7 748.9,819.7C749.7,809.7 751.4,792.7 753.9,784.8C756.4,776.9 760.1,775.4 763.9,772.3C767.6,769.2 771.0,766.1 776.4,766.1C781.8,766.1 791.7,769.2 796.3,772.3C800.9,775.4 799.8,779.4 803.8,784.8C807.8,790.2 817.3,801.4 820,804.7 M768.9,700C770.6,702.1 773.5,710.6 778.9,712.5C784.3,714.4 794.4,711.6 801.3,711.2C808.1,710.8 816.9,710.2 820,710 M820,739.9C816.9,742.0 804.8,749.3 801.3,752.4C797.8,755.5 796.7,757.0 798.8,758.6C800.9,760.2 810.3,760.0 813.8,762.3C817.3,764.6 819.0,770.6 820,772.3 M780,715C783.3,714.4 793.7,711.6 799.9,711.2C806.1,710.8 813.4,710.2 817.4,712.5C821.4,714.8 822.8,721.2 823.6,724.9C824.4,728.6 826.4,729.9 822.4,734.9C818.4,739.9 803.8,750.9 799.9,754.9C796.0,758.9 796.6,757.4 798.7,758.6C800.8,759.8 809.7,759.6 812.4,762.3C815.1,765.0 814.9,771.0 814.9,774.8C814.9,778.5 812.0,781.1 812.4,784.8C812.8,788.5 815.3,793.9 817.4,797.2C819.5,800.5 820.8,803.9 824.9,804.7C829.0,805.5 834.4,802.6 842.3,802.2C850.2,801.8 862.7,801.6 872.3,802.2C881.9,802.8 889.7,804.8 899.7,806C909.7,807.2 925.0,809.9 932.1,809.7C939.2,809.5 938.0,807.2 942.1,804.7C946.2,802.2 953.3,797.3 957,794.8C960.7,792.3 961.2,789.6 964.5,789.8C967.8,790.0 974.1,792.7 977,796C979.9,799.3 973.3,815.7 982,809.7C990.7,803.7 1015.3,774.8 1029.4,759.8C1043.5,744.8 1060.6,729.9 1066.8,719.9C1073.0,709.9 1066.8,703.3 1066.8,700 M1044.3,700C1047.2,701.2 1058.0,705.8 1061.8,707.5C1065.5,709.2 1066.0,709.6 1066.8,710 M780,767.3C782.5,768.1 791.3,771.0 795,772.3C798.7,773.5 801.4,773.1 802.4,774.8C803.4,776.5 800.4,779.8 801.2,782.3C802.0,784.8 804.3,786.5 807.4,789.8C810.5,793.1 817.0,799.3 819.9,802.2C822.8,805.1 819.1,807.0 824.9,807.2C830.7,807.4 844.8,803.9 854.8,803.5C864.8,803.1 873.9,803.9 884.7,804.7C895.5,805.5 911.7,807.5 919.6,808.5C927.5,809.5 930.0,810.6 932.1,811 M932.1,809.7C932.1,811.0 928.8,815.5 932.1,817.2C935.4,818.9 947.5,817.6 952.1,819.7C956.7,821.8 956.6,828.9 959.5,829.7C962.4,830.5 967.0,826.0 969.5,824.7C972.0,823.5 973.7,822.6 974.5,822.2 M959.5,794.8C960.8,795.2 966.2,794.7 967,797.2C967.8,799.7 964.1,805.5 964.5,809.7C964.9,813.9 967.8,819.7 969.5,822.2C971.2,824.7 973.7,824.3 974.5,824.7 M982,809.7C982.4,812.2 982.9,820.6 984.5,824.7C986.1,828.9 989.4,830.9 991.9,834.6C994.4,838.3 1001.9,842.1 999.4,847.1C996.9,852.1 979.1,860.0 977,864.6C974.9,869.2 984.3,870.8 987,874.5C989.7,878.2 992.4,882.4 993.2,887C994.0,891.6 994.2,899.4 991.9,902C989.6,904.6 984.1,904.0 979.5,902.5C974.9,901.0 967.4,894.5 964.5,893.2C961.6,891.9 962.4,894.3 962,894.5 M920.9,895.7C924.0,895.7 934.0,897.6 939.6,895.7C945.2,893.8 951.6,888.4 954.5,884.5C957.4,880.6 955.3,876.2 957,872.1C958.7,868.0 961.2,862.1 964.5,859.6C967.8,857.1 974.9,857.5 977,857.1 M991.9,902C996.1,901.6 1007.3,900.8 1016.9,899.5C1026.5,898.2 1038.5,896.6 1049.3,894.5C1060.1,892.4 1073.0,890.7 1081.7,887C1090.4,883.3 1093.8,870.9 1101.7,872.1C1109.6,873.4 1120.4,887.5 1129.1,894.5C1137.8,901.5 1146.1,907.8 1154,914.4C1161.9,921.0 1168.2,931.9 1176.5,934.4C1184.8,936.9 1197.2,931.9 1203.9,929.4C1210.6,926.9 1211.4,921.9 1216.4,919.4C1221.4,916.9 1230.1,917.3 1233.8,914.4C1237.5,911.5 1239.6,908.6 1238.8,902C1238.0,895.4 1230.9,881.1 1228.8,874.5C1226.7,867.9 1224.2,866.2 1226.3,862.1C1228.4,858.0 1236.7,855.0 1241.3,849.6C1245.9,844.2 1250.7,834.3 1253.8,829.7C1256.9,825.1 1259.0,823.5 1260,822.2 M1202.5,700C1203.3,702.1 1204.4,709.0 1207.5,712.5C1210.6,716.0 1218.7,717.9 1221.2,721.2C1223.7,724.5 1221.2,729.7 1222.4,732.4C1223.7,735.1 1227.0,734.5 1228.7,737.4C1230.4,740.3 1229.7,745.3 1232.4,749.9C1235.1,754.5 1240.3,760.6 1244.9,764.8C1249.5,768.9 1257.1,771.9 1259.8,774.8C1262.5,777.7 1261.9,779.0 1261.1,782.3C1260.3,785.6 1255.3,791.1 1254.9,794.8C1254.5,798.5 1258.4,799.7 1258.6,804.7C1258.8,809.7 1258.0,818.9 1256.1,824.7C1254.2,830.5 1252.2,833.8 1247.4,839.6C1242.6,845.4 1230.9,853.8 1227.4,859.6C1223.9,865.4 1225.8,869.5 1226.2,874.5C1226.6,879.5 1227.8,884.9 1229.9,889.5C1232.0,894.1 1238.2,897.9 1238.6,902C1239.0,906.1 1235.9,911.7 1232.4,914.4C1228.9,917.1 1222.9,915.3 1217.5,918.2C1212.1,921.1 1202.9,929.6 1200,931.9" stroke="#ffee92" stroke-width="2.5"/><path d="M727.7,624.5C729.2,626.6 733.4,633.2 736.5,636.9C739.6,640.6 744.3,642.3 746.4,646.9C748.5,651.5 748.7,656.5 748.9,664.4C749.1,672.3 747.9,685.9 747.7,694.3C747.5,702.7 747.7,711.5 747.7,715 M741.5,681.8C743.6,681.4 750.2,678.9 753.9,679.3C757.6,679.7 761.4,681.4 763.9,684.3C766.4,687.2 766.8,692.6 768.9,696.8C771.0,700.9 773.1,706.7 776.4,709.2C779.7,711.7 783.4,711.7 788.8,711.7C794.2,711.7 803.6,709.2 808.8,709.2C814.0,709.2 818.1,711.3 820,711.7 M1154,504.8C1151.5,506.1 1144.9,507.1 1139.1,512.3C1133.3,517.5 1120.8,529.2 1119.1,535.9C1117.4,542.5 1125.3,547.8 1129.1,552.2C1132.8,556.6 1137.4,558.4 1141.6,562.1C1145.8,565.8 1150.9,572.4 1154,574.6C1157.1,576.8 1159.2,575.0 1160.3,575.1 M1156.5,507.3C1162.3,511.0 1179.4,522.2 1191.4,529.7C1203.5,537.2 1217.4,545.6 1228.8,552.2C1240.2,558.9 1254.8,566.7 1260,569.6 M1260,579.6C1254.8,581.7 1240.2,587.1 1228.8,592.1C1217.4,597.1 1202.6,604.5 1191.4,609.5C1180.2,614.5 1167.3,618.7 1161.5,622C1155.7,625.3 1152.8,628.6 1156.5,629.5C1160.2,630.4 1174.3,627.9 1183.9,627.5C1193.5,627.1 1208.9,625.4 1213.9,627C1218.9,628.6 1215.6,633.6 1213.9,636.9C1212.2,640.2 1205.6,643.1 1203.9,646.9C1202.2,650.6 1207.6,655.6 1203.9,659.4C1200.2,663.1 1184.8,665.2 1181.5,669.4C1178.2,673.5 1181.0,680.1 1183.9,684.3C1186.8,688.4 1195.6,689.2 1198.9,694.3C1202.2,699.4 1203.1,711.5 1203.9,715 M1161.5,649.4C1160.2,650.0 1156.5,654.8 1154,653.1C1151.5,651.4 1150.7,642.5 1146.5,639.4C1142.3,636.3 1136.1,632.7 1129.1,634.4C1122.0,636.1 1112.5,645.2 1104.2,649.4C1095.9,653.6 1088.4,655.9 1079.2,659.4C1070.0,662.9 1054.3,668.7 1049.3,670.6 M1079.2,659.4C1079.4,662.7 1082.6,671.8 1080.5,679.3C1078.4,686.8 1069.1,698.3 1066.8,704.3C1064.5,710.2 1066.8,713.2 1066.8,715 M1014.4,664.4C1015.6,666.9 1018.2,674.7 1021.9,679.3C1025.6,683.9 1031.4,687.6 1036.8,691.8C1042.2,696.0 1049.3,701.8 1054.3,704.3C1059.3,706.8 1064.7,706.4 1066.8,706.8 M780,711.7C784.1,711.5 798.2,710.0 804.9,710.5C811.5,711.0 817.4,714.2 819.9,715 M748.9,700C748.5,704.1 748.0,714.1 746.4,724.9C744.8,735.7 741.9,753.1 739,764.8C736.1,776.4 732.5,786.5 729,794.8C725.5,803.1 719.5,808.1 717.8,814.7C716.1,821.3 717.5,829.6 719,834.6C720.5,839.6 723.8,841.7 726.5,844.6C729.2,847.5 731.5,852.1 735.2,852.1C738.9,852.1 746.6,850.0 748.9,844.6C751.2,839.2 748.1,829.7 748.9,819.7C749.7,809.7 751.4,792.7 753.9,784.8C756.4,776.9 760.1,775.4 763.9,772.3C767.6,769.2 771.0,766.1 776.4,766.1C781.8,766.1 791.7,769.2 796.3,772.3C800.9,775.4 799.8,779.4 803.8,784.8C807.8,790.2 817.3,801.4 820,804.7 M768.9,700C770.6,702.1 773.5,710.6 778.9,712.5C784.3,714.4 794.4,711.6 801.3,711.2C808.1,710.8 816.9,710.2 820,710 M820,739.9C816.9,742.0 804.8,749.3 801.3,752.4C797.8,755.5 796.7,757.0 798.8,758.6C800.9,760.2 810.3,760.0 813.8,762.3C817.3,764.6 819.0,770.6 820,772.3 M780,715C783.3,714.4 793.7,711.6 799.9,711.2C806.1,710.8 813.4,710.2 817.4,712.5C821.4,714.8 822.8,721.2 823.6,724.9C824.4,728.6 826.4,729.9 822.4,734.9C818.4,739.9 803.8,750.9 799.9,754.9C796.0,758.9 796.6,757.4 798.7,758.6C800.8,759.8 809.7,759.6 812.4,762.3C815.1,765.0 814.9,771.0 814.9,774.8C814.9,778.5 812.0,781.1 812.4,784.8C812.8,788.5 815.3,793.9 817.4,797.2C819.5,800.5 820.8,803.9 824.9,804.7C829.0,805.5 834.4,802.6 842.3,802.2C850.2,801.8 862.7,801.6 872.3,802.2C881.9,802.8 889.7,804.8 899.7,806C909.7,807.2 925.0,809.9 932.1,809.7C939.2,809.5 938.0,807.2 942.1,804.7C946.2,802.2 953.3,797.3 957,794.8C960.7,792.3 961.2,789.6 964.5,789.8C967.8,790.0 974.1,792.7 977,796C979.9,799.3 973.3,815.7 982,809.7C990.7,803.7 1015.3,774.8 1029.4,759.8C1043.5,744.8 1060.6,729.9 1066.8,719.9C1073.0,709.9 1066.8,703.3 1066.8,700 M1044.3,700C1047.2,701.2 1058.0,705.8 1061.8,707.5C1065.5,709.2 1066.0,709.6 1066.8,710 M780,767.3C782.5,768.1 791.3,771.0 795,772.3C798.7,773.5 801.4,773.1 802.4,774.8C803.4,776.5 800.4,779.8 801.2,782.3C802.0,784.8 804.3,786.5 807.4,789.8C810.5,793.1 817.0,799.3 819.9,802.2C822.8,805.1 819.1,807.0 824.9,807.2C830.7,807.4 844.8,803.9 854.8,803.5C864.8,803.1 873.9,803.9 884.7,804.7C895.5,805.5 911.7,807.5 919.6,808.5C927.5,809.5 930.0,810.6 932.1,811 M932.1,809.7C932.1,811.0 928.8,815.5 932.1,817.2C935.4,818.9 947.5,817.6 952.1,819.7C956.7,821.8 956.6,828.9 959.5,829.7C962.4,830.5 967.0,826.0 969.5,824.7C972.0,823.5 973.7,822.6 974.5,822.2 M959.5,794.8C960.8,795.2 966.2,794.7 967,797.2C967.8,799.7 964.1,805.5 964.5,809.7C964.9,813.9 967.8,819.7 969.5,822.2C971.2,824.7 973.7,824.3 974.5,824.7 M982,809.7C982.4,812.2 982.9,820.6 984.5,824.7C986.1,828.9 989.4,830.9 991.9,834.6C994.4,838.3 1001.9,842.1 999.4,847.1C996.9,852.1 979.1,860.0 977,864.6C974.9,869.2 984.3,870.8 987,874.5C989.7,878.2 992.4,882.4 993.2,887C994.0,891.6 994.2,899.4 991.9,902C989.6,904.6 984.1,904.0 979.5,902.5C974.9,901.0 967.4,894.5 964.5,893.2C961.6,891.9 962.4,894.3 962,894.5 M920.9,895.7C924.0,895.7 934.0,897.6 939.6,895.7C945.2,893.8 951.6,888.4 954.5,884.5C957.4,880.6 955.3,876.2 957,872.1C958.7,868.0 961.2,862.1 964.5,859.6C967.8,857.1 974.9,857.5 977,857.1 M991.9,902C996.1,901.6 1007.3,900.8 1016.9,899.5C1026.5,898.2 1038.5,896.6 1049.3,894.5C1060.1,892.4 1073.0,890.7 1081.7,887C1090.4,883.3 1093.8,870.9 1101.7,872.1C1109.6,873.4 1120.4,887.5 1129.1,894.5C1137.8,901.5 1146.1,907.8 1154,914.4C1161.9,921.0 1168.2,931.9 1176.5,934.4C1184.8,936.9 1197.2,931.9 1203.9,929.4C1210.6,926.9 1211.4,921.9 1216.4,919.4C1221.4,916.9 1230.1,917.3 1233.8,914.4C1237.5,911.5 1239.6,908.6 1238.8,902C1238.0,895.4 1230.9,881.1 1228.8,874.5C1226.7,867.9 1224.2,866.2 1226.3,862.1C1228.4,858.0 1236.7,855.0 1241.3,849.6C1245.9,844.2 1250.7,834.3 1253.8,829.7C1256.9,825.1 1259.0,823.5 1260,822.2 M1202.5,700C1203.3,702.1 1204.4,709.0 1207.5,712.5C1210.6,716.0 1218.7,717.9 1221.2,721.2C1223.7,724.5 1221.2,729.7 1222.4,732.4C1223.7,735.1 1227.0,734.5 1228.7,737.4C1230.4,740.3 1229.7,745.3 1232.4,749.9C1235.1,754.5 1240.3,760.6 1244.9,764.8C1249.5,768.9 1257.1,771.9 1259.8,774.8C1262.5,777.7 1261.9,779.0 1261.1,782.3C1260.3,785.6 1255.3,791.1 1254.9,794.8C1254.5,798.5 1258.4,799.7 1258.6,804.7C1258.8,809.7 1258.0,818.9 1256.1,824.7C1254.2,830.5 1252.2,833.8 1247.4,839.6C1242.6,845.4 1230.9,853.8 1227.4,859.6C1223.9,865.4 1225.8,869.5 1226.2,874.5C1226.6,879.5 1227.8,884.9 1229.9,889.5C1232.0,894.1 1238.2,897.9 1238.6,902C1239.0,906.1 1235.9,911.7 1232.4,914.4C1228.9,917.1 1222.9,915.3 1217.5,918.2C1212.1,921.1 1202.9,929.6 1200,931.9" stroke="#c0c0c5" stroke-width="1.7" stroke-dasharray="1.7 1.4" stroke-linecap="butt"/></g>
<path d="M748.9,646.9C751.4,646.5 757.2,644.0 763.9,644.4C770.5,644.8 782.1,648.6 788.8,649.4C795.4,650.2 798.6,651.5 803.8,649.4C809.0,647.3 817.3,639.0 820,636.9 M780,648.2C783.3,648.4 792.4,651.7 799.9,649.4C807.4,647.1 817.4,639.0 824.9,634.4C832.4,629.8 839.8,627.8 844.8,622C849.8,616.2 851.3,604.5 854.8,599.5C858.3,594.5 857.7,598.8 866,592.1C874.3,585.5 892.4,570.0 904.7,559.6C917.0,549.2 929.4,538.0 939.6,529.7C949.8,521.4 955.0,513.5 965.8,509.8C976.6,506.1 998.0,507.7 1004.4,507.3 M841.1,715C843.4,712.0 848.4,704.8 854.8,696.8C861.2,688.8 871.4,675.6 879.7,666.9C888.0,658.2 896.0,650.6 904.7,644.4C913.4,638.2 924.6,630.3 932.1,629.5C939.6,628.7 942.5,636.9 949.6,639.4C956.7,641.9 967.0,642.3 974.5,644.4C982.0,646.5 987.8,648.6 994.4,651.9C1001.0,655.2 1011.1,662.3 1014.4,664.4 M852.3,700C850.2,702.9 844.4,712.1 839.8,717.5C835.2,722.9 827.4,729.9 824.9,732.4" fill="none" stroke="#c6c6ca" stroke-width="1.3" stroke-dasharray="1.5 1.6"/><path d="M748.9,646.9C751.4,646.5 757.2,644.0 763.9,644.4C770.5,644.8 782.1,648.6 788.8,649.4C795.4,650.2 798.6,651.5 803.8,649.4C809.0,647.3 817.3,639.0 820,636.9 M780,648.2C783.3,648.4 792.4,651.7 799.9,649.4C807.4,647.1 817.4,639.0 824.9,634.4C832.4,629.8 839.8,627.8 844.8,622C849.8,616.2 851.3,604.5 854.8,599.5C858.3,594.5 857.7,598.8 866,592.1C874.3,585.5 892.4,570.0 904.7,559.6C917.0,549.2 929.4,538.0 939.6,529.7C949.8,521.4 955.0,513.5 965.8,509.8C976.6,506.1 998.0,507.7 1004.4,507.3 M841.1,715C843.4,712.0 848.4,704.8 854.8,696.8C861.2,688.8 871.4,675.6 879.7,666.9C888.0,658.2 896.0,650.6 904.7,644.4C913.4,638.2 924.6,630.3 932.1,629.5C939.6,628.7 942.5,636.9 949.6,639.4C956.7,641.9 967.0,642.3 974.5,644.4C982.0,646.5 987.8,648.6 994.4,651.9C1001.0,655.2 1011.1,662.3 1014.4,664.4 M852.3,700C850.2,702.9 844.4,712.1 839.8,717.5C835.2,722.9 827.4,729.9 824.9,732.4" fill="none" stroke="#e2d3a2" stroke-width="2.5" stroke-dasharray="7 3.5"/>
<path d="M1025.1,207.5L1028.2,205.6L1032,208.1L1031.4,213.1L1027.6,214.9L1024.5,211.8Z" fill="url(#hatch)" stroke="#1d2f6f" stroke-width=".9" stroke-linejoin="round"/>
<path d="M1292,137.5L1298.2,142.5L1302,153.7L1300.7,159.9L1293.2,156.2L1294.5,147.5Z" fill="url(#hatch)" stroke="#1d2f6f" stroke-width=".9" stroke-linejoin="round"/>
<path d="M1130.4,164.9L1132.4,162.9L1134.4,166.2L1132.9,169.9L1130.9,168.6Z" fill="url(#hatch)" stroke="#1d2f6f" stroke-width=".9" stroke-linejoin="round"/>
<path d="M1132.4,186.9L1139.9,183.1L1142.4,189.8L1136.2,188.6Z" fill="url(#hatch)" stroke="#1d2f6f" stroke-width=".9" stroke-linejoin="round"/>
<path d="M1149.9,299.6L1153.6,304.5L1158.6,318.3L1151.1,320.8L1146.6,314.5L1148.6,307Z" fill="url(#hatch)" stroke="#1d2f6f" stroke-width=".9" stroke-linejoin="round"/>
<path d="M1330.6,335.7L1339.4,329.5L1354.3,322L1360.6,329.5L1359.3,333.2L1343.1,339.5L1331.9,338.2Z" fill="url(#hatch)" stroke="#1d2f6f" stroke-width=".9" stroke-linejoin="round"/>
<path d="M1477.8,290.8L1481.5,287.1L1486.5,287.1L1487.7,294.1L1479,293.3Z" fill="url(#hatch)" stroke="#1d2f6f" stroke-width=".9" stroke-linejoin="round"/>
<path d="M1485.2,310.8L1489,317L1496.5,322L1491.5,325.7L1486,326.5Z" fill="url(#hatch)" stroke="#1d2f6f" stroke-width=".9" stroke-linejoin="round"/>
<path d="M1482.8,364.4L1491.5,359.4L1495.2,350.7L1499,354.4L1502.7,364.4L1502,374.4L1494,373.1L1486.5,368.1Z" fill="url(#hatch)" stroke="#1d2f6f" stroke-width=".9" stroke-linejoin="round"/>
<path d="M1526.4,163.7L1530.1,160.4L1536.4,161.2L1538.1,166.2L1533.9,169.4L1527.6,168.6Z" fill="url(#hatch)" stroke="#1d2f6f" stroke-width=".9" stroke-linejoin="round"/>
<path d="M1560.1,214.8L1566.3,213.5L1580,217.3L1596.2,221L1601.2,226L1592.5,237.2L1580,237.7L1571.3,236L1568.8,227.2L1563.8,219.8Z" fill="url(#hatch)" stroke="#1d2f6f" stroke-width=".9" stroke-linejoin="round"/>
<path d="M1525.4,165.2L1528.5,160.5L1534,159.7L1538.7,163.6L1537.1,168.3L1530.1,169.4Z" fill="url(#hatch)" stroke="#1d2f6f" stroke-width=".9" stroke-linejoin="round"/>
<path d="M1658.3,208.2L1661.4,205.9L1665.3,208.2L1663.8,211.6L1659.9,211.3Z" fill="url(#hatch)" stroke="#1d2f6f" stroke-width=".9" stroke-linejoin="round"/>
<path d="M1573.7,423.2L1586.8,425.1L1601.8,428.8L1600.8,431.6L1586.8,432.2L1579.3,427.9Z" fill="url(#hatch)" stroke="#1d2f6f" stroke-width=".9" stroke-linejoin="round"/>
<path d="M1645.7,442.8L1650.3,442.8L1654.1,446.5L1661.5,445.6L1667.2,443.7L1668.1,448.4L1659.7,450.8L1651.3,449.7Z" fill="url(#hatch)" stroke="#1d2f6f" stroke-width=".9" stroke-linejoin="round"/>
<path d="M1604.6,482L1609.2,484.8L1608.9,487.6L1605.5,485.8Z" fill="url(#hatch)" stroke="#1d2f6f" stroke-width=".9" stroke-linejoin="round"/>
<path d="M1603.9,482.3L1608.9,484.8L1607.7,487.3Z" fill="url(#hatch)" stroke="#1d2f6f" stroke-width=".9" stroke-linejoin="round"/>
<path d="M1643.8,494.8L1647.6,494.3L1646.3,499.3Z" fill="url(#hatch)" stroke="#1d2f6f" stroke-width=".9" stroke-linejoin="round"/>
<path d="M1596.5,519.7L1601.5,519.2L1603.4,526L1599,526.7Z" fill="url(#hatch)" stroke="#1d2f6f" stroke-width=".9" stroke-linejoin="round"/>
<path d="M1675.2,507.8L1680.1,507.3L1680.9,511.8L1675.9,511.8Z" fill="url(#hatch)" stroke="#1d2f6f" stroke-width=".9" stroke-linejoin="round"/>
<g fill="none" stroke-linejoin="round" stroke-linecap="round"><path d="M347.5,211C350.4,212.1 357.8,213.4 364.9,217.3C372.0,221.2 381.6,229.7 389.9,234.7C398.2,239.7 402.3,242.8 414.8,247.2C427.3,251.6 450.1,257.2 464.7,260.9C479.2,264.6 489.6,265.7 502.1,269.6C514.6,273.6 527.5,279.4 539.5,284.6C551.5,289.8 566.1,295.8 574.4,300.8C582.7,305.8 584.4,309.7 589.4,314.5C594.4,319.3 598.9,325.1 604.3,329.5C609.7,333.9 615.8,337.0 621.8,340.7C627.8,344.4 637.4,350.0 640.5,351.9 M640.5,351.9C641.5,354.0 645.5,359.8 646.7,364.4C647.9,369.0 648.5,374.0 647.9,379.4C647.3,384.8 643.8,391.4 643,396.8C642.2,402.2 642.0,407.1 643,411.8C644.0,416.5 648.2,422.8 649.2,425 M640.5,351.9C644.0,351.6 651.5,350.6 661.7,349.9C671.9,349.1 691.6,348.7 701.6,347.4C711.6,346.1 715.3,343.4 721.5,341.9C727.7,340.4 734.4,338.2 739,338.2C743.6,338.2 745.6,341.1 748.9,341.9C752.2,342.7 757.2,343.0 758.9,343.2 M694.1,137.5C693.7,140.0 691.6,147.8 691.6,152.4C691.6,157.0 692.0,158.7 694.1,164.9C696.2,171.1 699.5,181.7 704.1,189.8C708.7,197.9 716.5,206.8 721.5,213.5C726.5,220.2 730.5,224.5 734,229.7C737.5,234.9 739.8,240.5 742.7,244.7C745.6,248.9 747.9,252.5 751.4,254.7C754.9,256.9 758.9,257.5 763.9,257.7C768.9,257.9 777.2,255.2 781.4,255.9C785.5,256.6 786.3,259.9 788.8,262.2C791.3,264.5 795.0,268.4 796.3,269.6 M721.5,214.8C718.2,216.7 706.4,221.4 701.6,226C696.8,230.6 695.3,237.8 692.8,242.2C690.3,246.6 689.3,248.2 686.6,252.2C683.9,256.1 678.5,261.3 676.6,265.9C674.7,270.5 676.2,273.2 675.4,279.6C674.6,286.0 673.3,295.4 671.6,304.5C669.9,313.6 667.0,326.9 665.4,334.5C663.8,342.1 662.3,347.3 661.7,349.9 M675.4,279.6C676.0,282.9 676.8,292.5 679.1,299.6C681.4,306.7 685.4,314.1 689.1,322C692.9,329.9 696.2,340.7 701.6,346.9C707.0,353.1 714.9,355.4 721.5,359.4C728.1,363.3 738.2,368.7 741.5,370.6 M649.2,284.6C651.7,285.0 660.5,286.1 664.2,287.1C667.9,288.1 670.4,290.2 671.6,290.8 M701.6,344.4C702.8,342.3 706.6,335.9 709,332C711.4,328.1 714.7,322.7 715.8,320.8 M820,213.5C816.9,215.4 806.9,221.3 801.3,224.8C795.7,228.3 790.4,231.4 786.3,234.7C782.1,238.0 778.9,241.6 776.4,244.7C773.9,247.8 772.2,251.9 771.4,253.4 M730,223.7C731.0,225.1 734.1,229.1 736.2,232.4C738.3,235.7 740.4,240.3 742.5,243.6C744.6,246.9 746.2,250.1 748.7,252.3C751.2,254.5 753.7,256.3 757.4,256.7C761.1,257.1 767.4,254.9 771.1,254.8C774.8,254.7 777.7,255.4 779.8,256C781.9,256.6 783.0,258.1 783.6,258.5 M771.1,254.8C771.3,254.0 770.8,252.7 772.3,249.8C773.8,246.9 776.9,240.9 779.8,237.4C782.7,233.9 785.6,231.5 789.8,228.6C793.9,225.7 800.1,222.6 804.7,219.9C809.3,217.2 812.8,215.0 817.2,212.5C821.6,210.0 828.4,207.1 830.9,205C833.4,202.9 831.9,200.8 832.1,200 M833.4,207.5C834.9,207.1 838.6,206.1 842.1,205C845.6,203.9 851.2,202.0 854.5,201.2C857.8,200.4 860.8,200.2 862,200 M895.6,200C896.6,200.8 900.2,202.7 901.9,205C903.6,207.3 903.7,211.6 905.6,213.7C907.5,215.8 911.2,216.2 913.1,217.4C915.0,218.7 916.2,220.6 916.8,221.2 M1027,202.5C1028.5,202.9 1033.6,204.0 1035.7,205C1037.8,206.0 1037.0,207.2 1039.5,208.7C1042.0,210.1 1047.8,211.4 1050.7,213.7C1053.6,216.0 1054.2,219.7 1056.9,222.4C1059.6,225.1 1065.9,227.0 1066.9,229.9C1067.9,232.8 1064.1,236.2 1063.1,239.9C1062.0,243.6 1061.4,248.2 1060.6,252.3C1059.8,256.4 1060.0,262.3 1058.1,264.8C1056.2,267.3 1052.9,266.7 1049.4,267.3C1045.9,267.9 1040.1,267.5 1037,268.5C1033.9,269.5 1032.0,271.6 1030.7,273.5C1029.5,275.4 1029.9,277.0 1029.5,279.7C1029.1,282.4 1029.0,286.0 1028.2,289.7C1027.4,293.4 1025.7,298.4 1024.5,302.1C1023.3,305.8 1022.0,309.6 1020.8,312.1C1019.5,314.6 1019.1,315.9 1017,317.1C1014.9,318.4 1009.8,319.2 1008.3,319.6 M1008.3,319.6C1010.2,320.4 1016.0,323.3 1019.5,324.5C1023.0,325.7 1024.1,327.0 1029.5,327C1034.9,327.0 1044.4,325.2 1051.9,324.5C1059.4,323.8 1069.3,322.5 1074.3,322.7C1079.3,322.9 1079.9,324.4 1081.8,325.8C1083.7,327.2 1084.9,328.9 1085.5,330.8C1086.1,332.7 1086.3,334.9 1085.5,337C1084.7,339.1 1082.5,341.5 1080.6,343.2C1078.7,344.9 1075.3,346.4 1074.3,347 M959.7,347C962.6,345.9 970.1,342.4 977.2,340.7C984.3,339.0 993.8,338.0 1002.1,337C1010.4,336.0 1018.7,335.2 1027,334.5C1035.3,333.8 1042.2,333.2 1051.9,332.6C1061.7,332.0 1076.2,330.9 1085.5,330.8C1094.8,330.7 1100.6,331.2 1108,332C1115.4,332.8 1126.3,335.2 1130,335.8 M1085.5,200C1085.9,200.8 1086.8,203.7 1088,205C1089.2,206.3 1092.2,207.6 1093,208.1 M748.7,487C750.8,484.3 755.9,477.0 761.1,470.8C766.3,464.6 774.2,456.0 779.8,449.6C785.4,443.2 789.8,437.4 794.8,432.2C799.8,427.0 804.1,422.9 809.7,418.5C815.3,414.1 822.0,410.1 828.4,406C834.8,401.9 843.9,396.3 848.3,393.6C852.6,390.9 848.3,393.3 854.5,389.8C860.7,386.3 876.4,377.2 885.7,372.4C895.1,367.6 904.6,363.9 910.6,361.2C916.6,358.5 911.9,359.3 921.8,356.2C931.7,353.1 962.0,344.8 970,342.5 M763.6,487C765.7,484.3 771.3,477.0 776.1,470.8C780.9,464.6 786.7,456.5 792.3,449.6C797.9,442.8 803.5,435.9 809.7,429.7C815.9,423.5 823.2,417.4 829.6,412.2C836.0,407.0 844.1,401.4 848.3,398.5C852.4,395.6 853.5,395.4 854.5,394.8 M858.3,392.3C861.0,391.9 870.1,390.6 874.5,389.8C878.9,389.0 882.3,388.6 884.4,387.3C886.5,386.1 887.1,383.8 886.9,382.3C886.7,380.9 884.7,379.0 883.2,378.6C881.8,378.2 881.7,378.2 878.2,379.9C874.7,381.6 864.7,387.2 862,388.6 M854.5,394.8C854.5,395.6 853.5,397.7 854.5,399.8C855.5,401.9 858.9,404.8 860.8,407.3C862.7,409.8 864.6,411.8 865.8,414.7C867.0,417.6 867.0,421.6 868.2,424.7C869.4,427.8 871.7,431.1 873.2,433.4C874.7,435.7 877.0,436.1 877,438.4C877.0,440.7 874.5,444.2 873.2,447.1C872.0,450.0 871.0,452.9 869.5,455.8C868.0,458.7 867.0,461.6 864.5,464.5C862.0,467.4 857.6,470.6 854.5,473.3C851.4,476.0 848.3,478.4 845.8,480.7C843.3,483.0 840.6,485.9 839.6,487 M817.1,137.5C819.6,138.8 827.1,143.1 832.1,145C837.1,146.9 842.4,149.9 847,148.7C851.6,147.4 857.4,139.4 859.5,137.5 M847,137.5C846.6,139.6 846.2,146.6 844.5,149.9C842.8,153.2 838.9,154.1 837,157.4C835.1,160.7 833.7,164.9 833.3,169.9C832.9,174.9 834.7,181.6 834.5,187.4C834.3,193.2 832.5,201.9 832.1,204.8 M832.1,204.8C828.4,206.9 816.7,213.2 809.6,217.3C802.5,221.5 795.5,225.1 789.7,229.7C783.9,234.3 778.0,240.5 774.7,244.7C771.4,248.9 770.5,253.0 769.7,254.7 M832.1,204.8C835.0,204.4 842.5,204.0 849.5,202.3C856.5,200.6 868.6,196.1 874.4,194.8C880.2,193.6 880.6,193.6 884.4,194.8C888.1,196.1 893.6,199.4 896.9,202.3C900.2,205.2 900.7,209.8 904.4,212.3C908.1,214.8 916.8,216.5 919.3,217.3 M936.8,186.1C937.6,187.6 940.1,190.0 941.8,194.8C943.5,199.6 946.0,211.5 946.8,214.8 M966.7,137.5C966.5,139.6 966.3,145.8 965.5,149.9C964.7,154.1 963.6,159.7 961.7,162.4C959.8,165.1 957.1,166.2 954.2,166.2C951.3,166.2 948.0,164.5 944.3,162.4C940.6,160.3 933.7,156.2 931.8,153.7C929.9,151.2 931.3,150.0 933,147.5C934.7,145.0 940.3,140.2 941.8,138.7 M1014.1,137.5C1013.7,141.2 1012.4,153.7 1011.6,159.9C1010.8,166.1 1009.7,170.3 1009.1,174.9C1008.5,179.5 1009.0,183.2 1007.8,187.4C1006.5,191.6 1002.6,197.7 1001.6,199.8 M1020.3,137.5C1019.5,141.7 1016.8,155.3 1015.3,162.4C1013.8,169.5 1011.8,174.9 1011.6,179.9C1011.4,184.9 1013.7,190.2 1014.1,192.3 M1019.1,187.4C1025.8,186.6 1048.2,183.7 1059,182.4C1069.8,181.2 1075.6,181.2 1083.9,179.9C1092.2,178.7 1101.3,176.4 1108.8,174.9C1116.3,173.4 1123.6,170.3 1128.8,171.1C1134.0,171.9 1138.1,178.4 1140,179.9 M1088.9,179.9C1088.3,182.0 1085.3,188.6 1085.1,192.3C1084.9,196.0 1086.3,199.8 1087.6,202.3C1088.8,204.8 1091.8,206.5 1092.6,207.3 M1126.3,334.5L1140,338.2 M1100,177.4C1102.5,176.8 1110.2,174.8 1115,173.6C1119.8,172.3 1124.5,168.7 1128.7,169.9C1132.9,171.2 1135.3,178.4 1139.9,181.1C1144.5,183.8 1150.7,182.3 1156.1,186.1C1161.5,189.8 1167.9,199.2 1172.3,203.6C1176.7,208.0 1179.2,207.5 1182.3,212.3C1185.4,217.1 1189.8,222.6 1191,232.2C1192.2,241.8 1191.2,258.4 1189.8,269.6C1188.3,280.8 1185.0,290.9 1182.3,299.6C1179.6,308.3 1176.1,314.9 1173.6,322C1171.1,329.1 1168.3,338.6 1167.3,341.9 M1100,332C1104.2,332.4 1113.7,332.9 1124.9,334.5C1136.1,336.1 1150.7,337.3 1167.3,341.9C1183.9,346.5 1208.5,356.5 1224.7,361.9C1240.9,367.3 1250.5,370.2 1264.6,374.4C1278.7,378.5 1295.4,382.6 1309.5,386.8C1323.6,391.0 1334.5,395.1 1349.4,399.3C1364.4,403.5 1383.0,407.5 1399.2,411.8C1415.4,416.1 1438.7,422.8 1446.6,425 M1124.9,333.2C1128.2,334.3 1137.8,338.4 1144.9,340C1152.0,341.6 1163.6,342.2 1167.3,342.7 M1193.5,273.4C1195.4,270.3 1201.6,259.9 1204.7,254.7C1207.8,249.5 1208.0,244.7 1212.2,242.2C1216.4,239.7 1225.1,239.3 1229.7,239.7C1234.3,240.1 1237.5,242.6 1239.6,244.7C1241.7,246.8 1239.6,250.5 1242.1,252.2C1244.6,253.9 1250.8,253.0 1254.6,254.7C1258.3,256.4 1263.3,258.0 1264.6,262.2C1265.8,266.4 1262.5,275.0 1262.1,279.6C1261.7,284.2 1260.4,285.9 1262.1,289.6C1263.8,293.4 1268.1,297.1 1272.1,302.1C1276.0,307.1 1285.4,311.6 1285.8,319.5C1286.2,327.4 1278.0,340.2 1274.5,349.4C1271.0,358.5 1266.2,370.2 1264.6,374.4 M1222.2,239.7C1222.2,237.6 1221.8,229.9 1222.2,227.2C1222.6,224.5 1221.8,223.9 1224.7,223.5C1227.6,223.1 1234.2,223.8 1239.6,224.8C1245.0,225.8 1254.2,228.9 1257.1,229.7 M1365.6,211C1365.2,214.9 1363.7,227.4 1363.1,234.7C1362.5,242.0 1362.6,247.8 1361.8,254.7C1361.0,261.6 1357.5,271.9 1358.1,275.9C1358.7,279.8 1363.9,276.5 1365.6,278.4C1367.3,280.3 1368.3,282.8 1368.1,287.1C1367.9,291.5 1366.2,300.4 1364.3,304.5C1362.4,308.6 1358.0,309.1 1356.8,312C1355.5,314.9 1355.5,318.2 1356.8,322C1358.0,325.8 1361.0,330.9 1364.3,334.5C1367.6,338.1 1374.7,342.3 1376.8,343.9 M1343.1,307C1343.7,307.6 1345.0,310.4 1346.9,310.8C1348.8,311.2 1352.7,309.3 1354.3,309.5C1355.9,309.7 1356.4,311.6 1356.8,312 M1356.8,322C1355.6,324.5 1353.4,333.1 1349.4,337C1345.5,340.9 1336.6,341.6 1333.1,345.7C1329.6,349.8 1330.3,355.5 1328.2,361.9C1326.1,368.3 1324.0,380.1 1320.7,384.3C1317.4,388.5 1310.3,384.1 1308.2,386.8C1306.1,389.5 1306.3,396.8 1308.2,400.5C1310.1,404.2 1315.0,405.2 1319.4,409.3C1323.8,413.4 1331.9,422.4 1334.4,425 M1390.5,272.1C1390.1,274.2 1387.2,280.9 1388,284.6C1388.8,288.4 1393.8,290.5 1395.5,294.6C1397.2,298.8 1396.1,305.4 1398,309.5C1399.9,313.6 1402.3,316.2 1406.7,319.5C1411.1,322.8 1418.8,325.8 1424.2,329.5C1429.6,333.2 1433.7,338.2 1439.1,341.9C1444.5,345.6 1451.6,348.6 1456.6,351.9C1461.6,355.2 1463.6,360.0 1469,361.9C1474.4,363.8 1482.3,360.4 1489,363.1C1495.7,365.8 1501.0,372.9 1508.9,378.1C1516.8,383.3 1526.8,388.7 1536.4,394.3C1546.0,399.9 1559.0,407.2 1566.3,411.8C1573.6,416.4 1577.7,420.1 1580,421.7 M1462.8,224.8C1461.3,222.3 1455.1,213.6 1454.1,209.8C1453.1,206.1 1454.1,204.8 1456.6,202.3C1459.1,199.8 1464.0,196.5 1469,194.8C1474.0,193.1 1481.9,194.2 1486.5,192.3C1491.1,190.4 1492.3,184.0 1496.5,183.6C1500.7,183.2 1502.7,189.4 1511.4,189.8C1520.1,190.2 1537.4,187.1 1548.8,186.1C1560.2,185.1 1574.8,184.0 1580,183.6 M1563.8,158.7C1564.2,161.4 1566.7,170.9 1566.3,174.9C1565.9,178.9 1562.1,181.2 1561.3,182.4 M1480,193.3C1481.3,192.7 1485.7,191.6 1487.8,189.4C1489.9,187.2 1489.9,180.3 1492.5,180.1C1495.1,179.8 1497.8,186.3 1503.5,187.9C1509.2,189.5 1518.3,189.9 1526.9,189.4C1535.5,188.9 1548.3,186.0 1555.1,184.7C1561.9,183.4 1562.9,181.1 1567.6,181.6C1572.3,182.1 1577.0,185.0 1583.2,187.9C1589.5,190.8 1598.8,195.2 1605.1,198.8C1611.4,202.5 1614.8,206.4 1620.8,209.8C1626.8,213.2 1635.9,215.8 1641.1,219.2C1646.3,222.6 1647.7,227.2 1652.1,230.1C1656.5,233.0 1662.5,234.1 1667.7,236.4C1672.9,238.8 1679.4,241.3 1683.3,244.2C1687.2,247.1 1689.1,249.7 1691.2,253.6C1693.3,257.5 1695.8,262.1 1695.8,267.6C1695.8,273.1 1691.5,280.6 1691.2,286.4C1691.0,292.1 1693.5,297.3 1694.3,302.1C1695.1,306.9 1695.5,312.9 1695.8,315 M1562.9,158.9C1563.6,160.6 1566.3,166.1 1566.8,169.1C1567.3,172.1 1567.4,174.6 1566,176.9C1564.6,179.2 1559.5,182.1 1558.2,183.2 M1638,183.2C1640.3,183.4 1647.7,185.5 1652.1,184.7C1656.5,183.9 1660.2,179.9 1664.6,178.5C1669.0,177.1 1673.8,176.8 1678.6,176.1C1683.4,175.4 1691.0,174.8 1693.5,174.6 M1641.1,219.2C1642.9,218.4 1648.7,216.1 1652.1,214.5C1655.5,212.9 1659.9,210.6 1661.4,209.8 M1641.1,219.2C1640.3,221.0 1639.8,228.8 1636.4,230.1C1633.0,231.4 1626.3,228.8 1620.8,227C1615.3,225.2 1606.5,220.5 1603.6,219.2 M1641.1,219.2C1644.2,219.7 1655.0,221.8 1659.9,222.3C1664.9,222.8 1667.4,224.1 1670.8,222.3C1674.2,220.5 1676.3,215.0 1680.2,211.3C1684.1,207.7 1692.0,202.2 1694.3,200.4 M1603.6,236.4C1605.2,239.0 1610.1,246.8 1613,252C1615.9,257.2 1619.0,261.9 1620.8,267.6C1622.6,273.3 1621.3,281.7 1623.9,286.4C1626.5,291.1 1632.5,292.9 1636.4,295.8C1640.3,298.7 1644.8,300.4 1647.4,303.6C1650.0,306.8 1651.3,313.1 1652.1,315 M1400,314.8C1401.9,316.1 1407.2,319.8 1411.2,322.3C1415.2,324.8 1421.2,327.6 1424.3,329.8C1427.4,332.0 1424.6,331.3 1429.9,335.4C1435.2,339.4 1447.9,349.1 1456,354.1C1464.1,359.1 1473.2,362.2 1478.5,365.3C1483.8,368.4 1484.1,370.5 1487.8,372.8C1491.5,375.1 1497.2,378.5 1500.9,379.3C1504.6,380.1 1505.9,376.0 1510.2,377.4C1514.5,378.8 1521.7,384.4 1527,387.7C1532.3,391.0 1537.0,393.3 1542,397C1547.0,400.7 1552.6,406.4 1556.9,410.1C1561.2,413.9 1564.4,417.6 1568.1,419.5C1571.8,421.4 1575.9,420.4 1579.3,421.3C1582.7,422.2 1584.3,423.9 1588.7,425.1C1593.1,426.4 1602.7,428.2 1605.5,428.8 M1601.8,293.4C1601.6,295.7 1601.1,303.0 1600.8,307.4C1600.5,311.8 1600.7,310.5 1599.9,319.5C1599.1,328.5 1597.3,350.8 1596.2,361.5C1595.1,372.2 1594.2,376.8 1593.4,384C1592.6,391.2 1592.1,398.3 1591.5,404.5C1590.9,410.7 1589.9,418.5 1589.6,421.3 M1600.8,307.4C1606.0,308.2 1625.6,310.9 1631.7,312C1637.8,313.1 1635.9,311.9 1637.3,313.9C1638.7,315.9 1638.2,322.2 1640.1,324.2C1642.0,326.2 1647.1,325.7 1648.5,326 M1599.9,319.5C1604.0,320.1 1616.1,322.1 1624.2,323.2C1632.3,324.3 1640.7,324.8 1648.5,326C1656.3,327.2 1663.8,329.4 1670.9,330.7C1678.1,331.9 1688.0,333.0 1691.4,333.5 M1621.4,270C1621.6,271.6 1621.5,275.9 1622.3,279.3C1623.1,282.7 1623.6,287.5 1626.1,290.6C1628.6,293.7 1633.9,295.7 1637.3,298C1640.7,300.3 1644.3,301.8 1646.6,304.6C1648.9,307.4 1650.7,311.2 1651.3,314.8C1651.9,318.4 1652.0,321.6 1650.3,326C1648.6,330.4 1644.1,336.3 1641,341C1637.9,345.7 1634.2,349.1 1631.7,354.1C1629.2,359.1 1628.9,366.2 1626.1,370.9C1623.3,375.6 1618.2,379.0 1614.8,382.1C1611.4,385.2 1607.2,386.2 1605.5,389.6C1603.8,393.0 1604.8,400.4 1604.6,402.6 M1694.2,270C1694.4,273.1 1695.2,280.9 1695.2,288.7C1695.2,296.5 1694.8,309.2 1694.2,316.7C1693.6,324.2 1692.5,328.2 1691.4,333.5C1690.3,338.8 1689.9,343.8 1687.7,348.5C1685.5,353.2 1681.8,356.8 1678.4,361.5C1675.0,366.2 1671.2,371.2 1667.2,376.5C1663.2,381.8 1658.1,388.6 1654.1,393.3C1650.0,398.0 1646.6,400.8 1642.9,404.5C1639.2,408.2 1635.1,412.3 1631.7,415.7C1628.3,419.1 1626.3,422.6 1622.3,425.1C1618.2,427.6 1609.9,429.8 1607.4,430.7 M1593.4,398.9C1595.4,399.8 1601.0,402.3 1605.5,404.5C1610.0,406.7 1616.0,409.8 1620.4,412C1624.8,414.2 1629.8,416.7 1631.7,417.6 M1591.5,406.4C1589.6,407.5 1581.1,410.4 1580.3,412.9C1579.5,415.4 1585.7,419.9 1586.8,421.3 M1631.7,417.6C1632.6,420.1 1635.1,426.9 1637.3,432.5C1639.5,438.1 1642.7,445.3 1644.7,451.2C1646.7,457.1 1648.6,465.2 1649.4,468 M1605.5,428.8C1605.3,431.0 1605.4,437.1 1604.6,441.9C1603.8,446.7 1601.4,455.1 1600.8,457.8 M1607.4,430.7C1607.6,429.8 1606.1,427.0 1608.3,425.1C1610.5,423.2 1616.5,421.1 1620.4,419.5C1624.3,417.9 1629.8,416.3 1631.7,415.7 M1400,412.9C1406.2,414.6 1425.0,419.6 1437.4,423.2C1449.9,426.8 1462.2,430.3 1474.7,434.4C1487.2,438.4 1499.6,443.1 1512.1,447.5C1524.6,451.9 1538.6,456.9 1549.5,460.6C1560.4,464.3 1568.2,467.7 1577.5,469.9C1586.8,472.1 1596.2,473.3 1605.5,473.6C1614.8,473.9 1626.2,472.6 1633.5,471.8C1640.8,471.0 1644.0,469.8 1649.4,469C1654.9,468.2 1662.6,466.0 1666.2,467.1C1669.8,468.2 1667.9,473.0 1670.9,475.5C1673.9,478.0 1681.8,480.9 1684,482 M1576.5,470.8C1578.2,471.9 1582.6,475.1 1586.8,477.4C1591.0,479.7 1599.3,483.6 1601.8,484.8 M1646.6,451.2C1649.1,451.4 1657.5,452.4 1661.5,452.1C1665.5,451.8 1669.0,450.2 1670.9,449.3C1672.8,448.4 1672.5,447.0 1672.8,446.5 M1649.4,465.2L1655,464.3 M347.5,597.5C354.6,595.5 374.5,590.0 389.9,585.8C405.3,581.6 423.1,576.5 439.7,572.1C456.3,567.7 473.0,563.8 489.6,559.6C506.2,555.5 529.1,550.5 539.5,547.2C549.9,543.9 547.8,543.5 551.9,539.7C556.0,536.0 560.2,530.5 564.4,524.7C568.6,518.9 572.7,510.2 576.9,504.8C581.1,499.4 585.2,495.0 589.4,492.3C593.5,489.6 595.6,489.0 601.8,488.6C608.0,488.2 618.5,489.4 626.8,489.8C635.1,490.2 645.5,491.1 651.7,491.1C657.9,491.1 660.5,491.1 664.2,489.8C667.9,488.6 670.8,485.9 674.1,483.6C677.4,481.3 680.8,478.8 684.1,476.1C687.4,473.4 692.4,468.8 694.1,467.4 M645.5,420C646.5,422.1 648.6,428.4 651.7,432.5C654.8,436.6 658.8,440.3 664.2,444.9C669.6,449.5 679.1,456.1 684.1,459.9C689.1,463.6 690.8,467.0 694.1,467.4C697.4,467.8 699.1,462.4 704.1,462.4C709.1,462.4 717.4,465.7 724,467.4C730.6,469.1 738.9,470.5 743.9,472.4C748.9,474.3 752.2,477.6 753.9,478.6 M671.6,477.4C675.4,475.5 686.2,470.3 694.1,466.1C702.0,461.9 712.4,457.2 719,452.4C725.6,447.6 729.0,442.9 734,437.5C739.0,432.1 746.4,422.9 748.9,420 M694.1,484.8C693.3,487.7 690.6,495.9 689.1,502.3C687.6,508.8 685.0,519.5 685.4,523.5C685.8,527.5 690.6,525.6 691.6,526 M694.1,482.3C695.4,483.6 699.9,486.9 701.6,489.8C703.3,492.7 703.7,498.1 704.1,499.8 M706.5,472.4C707.8,474.5 711.1,480.2 714,484.8C716.9,489.4 720.2,495.2 724,499.8C727.8,504.4 732.8,508.8 736.5,512.3C740.2,515.8 744.8,519.5 746.4,521 M813.8,425C809.6,429.6 797.1,442.4 788.8,452.4C780.5,462.4 770.1,475.2 763.9,484.8C757.7,494.4 754.7,501.9 751.4,509.8C748.1,517.7 746.4,524.7 743.9,532.2C741.4,539.7 739.0,546.7 736.5,554.6C734.0,562.5 731.9,572.1 729,579.6C726.1,587.1 722.3,593.7 719,599.5C715.7,605.3 714.0,607.9 709,614.5C704.0,621.1 696.6,630.2 689.1,639.4C681.6,648.5 672.5,659.4 664.2,669.4C655.9,679.4 645.9,691.7 639.2,699.3C632.6,706.9 626.8,712.4 624.3,715 M776.4,469.9C772.6,474.0 761.0,486.5 753.9,494.8C746.8,503.1 740.6,511.4 734,519.7C727.4,528.0 719.0,537.2 714,544.7C709.0,552.2 706.6,557.1 704.1,564.6C701.6,572.1 701.2,583.0 699.1,589.6C697.0,596.2 696.2,598.7 691.6,604.5C687.0,610.3 677.8,617.9 671.6,624.5C665.4,631.1 658.2,639.4 654.2,644.4C650.2,649.4 649.0,652.7 647.9,654.4 M734,562.1C735.2,562.3 740.5,561.9 741.5,563.4C742.5,564.9 741.9,569.9 740.2,570.9C738.5,571.9 733.0,569.8 731.5,569.6 M741.5,590.8C740.2,593.9 736.3,604.5 734,609.5C731.7,614.5 728.8,618.8 727.7,620.7 M691.6,603.3C694.5,604.3 704.4,607.2 709,609.5C713.6,611.8 715.7,615.1 719,617C722.3,618.9 727.3,620.1 729,620.7 M1079.2,420C1080.0,421.7 1080.0,425.0 1084.2,430C1088.4,435.0 1096.7,442.0 1104.2,449.9C1111.7,457.8 1121.6,469.1 1129.1,477.4C1136.6,485.7 1144.8,495.2 1149,499.8C1153.2,504.4 1153.2,504.0 1154,504.8 M1329.7,420C1331.3,422.1 1335.4,428.6 1339.6,432.5C1343.8,436.4 1346.3,442.2 1354.6,443.7C1362.9,445.1 1381.0,440.2 1389.5,441.2C1398.0,442.2 1403.0,448.4 1405.7,449.9 M1576.5,471.1C1580.2,473.0 1591.1,477.9 1599,482.3C1606.9,486.7 1615.6,491.9 1623.9,497.3C1632.2,502.7 1640.5,509.4 1648.8,514.8C1657.1,520.2 1668.6,526.4 1673.8,529.7C1679.0,533.0 1679.0,533.9 1680,534.7 M1599,486.1C1597.3,488.0 1593.2,492.1 1589,497.3C1584.8,502.5 1580.7,510.6 1574,517.2C1567.3,523.9 1559.5,530.6 1549.1,537.2C1538.7,543.9 1524.2,551.7 1511.7,557.1C1499.2,562.5 1481.0,567.3 1474.3,569.6C1467.6,571.9 1477.2,573.0 1471.8,570.9C1466.4,568.8 1446.9,559.4 1441.9,557.1 M1599,486.1L1601.5,494.8 M1587.7,498.5L1591.5,506 M1692.6,543.4C1690.3,544.5 1681.2,547.6 1678.9,549.7C1676.6,551.8 1681.0,554.7 1678.9,555.9C1676.8,557.1 1668.9,555.2 1666.4,557.1C1663.9,559.0 1664.3,565.4 1663.9,567.1 M1639,558.4C1637.8,560.1 1631.9,565.7 1631.5,568.4C1631.1,571.1 1630.3,572.7 1636.5,574.6C1642.7,576.5 1662.1,580.9 1668.9,579.6C1675.8,578.4 1674.7,569.0 1677.6,567.1C1680.5,565.2 1683.7,569.2 1686.4,568.4C1689.1,567.6 1692.7,563.1 1693.9,562.1 M1639,558.4C1642.3,559.0 1652.7,560.9 1658.9,562.1C1665.1,563.4 1673.5,565.3 1676.4,565.9 M1636.5,565.9L1671.4,573.4 M1646.5,559.6L1641.5,574.6 M1656.5,562.1L1651.5,577.1 M1666.4,564.1L1661.4,578.3 M1693.9,562.1C1691.8,565.0 1686.4,573.4 1681.4,579.6C1676.4,585.8 1668.9,592.9 1663.9,599.5C1658.9,606.1 1654.6,614.1 1651.5,619.5C1648.4,624.9 1646.2,625.2 1645.2,631.9C1644.2,638.5 1646.2,651.1 1645.2,659.4C1644.2,667.7 1643.0,672.5 1639,681.8C1635.0,691.1 1624.4,709.5 1621.5,715 M1686.4,535.9L1691.4,529.7 M1677.6,567.1C1677.8,565.2 1677.4,557.6 1678.9,555.9C1680.4,554.2 1685.2,556.9 1686.4,557.1 M640.5,700C637.2,704.0 630.5,713.8 620.5,723.7C610.5,733.6 592.4,748.7 580.6,759.3C568.8,769.9 558.0,778.9 549.5,787.3C541.0,795.7 537.8,798.9 529.5,809.7C521.2,820.5 509.6,838.4 499.6,852.1C489.6,865.8 479.7,880.8 469.7,892C459.7,903.2 450.9,911.5 439.7,919.4C428.5,927.3 414.4,933.2 402.3,939.4C390.2,945.6 373.2,953.9 367.4,956.8 M499.6,854.6C501.1,855.6 506.6,857.5 508.3,860.8C510.0,864.1 509.6,868.5 509.6,874.5C509.6,880.5 507.5,890.4 508.3,897C509.1,903.6 511.4,907.8 514.5,914.4C517.6,921.0 524.9,933.1 527,936.9 M1628.9,700C1626.0,705.4 1616.8,723.2 1611.4,732.4C1606.0,741.5 1601.1,747.4 1596.5,754.9C1591.9,762.4 1587.8,770.6 1584,777.3C1580.2,783.9 1579.0,788.1 1574,794.8C1569.0,801.4 1561.2,806.8 1554.1,817.2C1547.0,827.6 1538.7,846.7 1531.6,857.1C1524.5,867.5 1518.8,870.8 1511.7,879.5C1504.6,888.2 1495.4,901.2 1489.2,909.5C1483.0,917.8 1480.1,924.2 1474.3,929.4C1468.5,934.6 1461.8,939.8 1454.3,940.6C1446.8,941.4 1436.1,934.4 1429.4,934.4C1422.8,934.4 1419.8,940.6 1414.4,940.6C1409.0,940.6 1402.0,934.4 1397,934.4C1392.0,934.4 1390.7,937.9 1384.5,940.6C1378.3,943.3 1363.8,948.9 1359.6,950.6 M1695.6,155.2L1695.6,159.2 M783.6,257.3L794.8,269.7L809.7,283.4L829.6,303.4L847.1,318.3L868.2,332L879.5,339.5L891.9,347 M741.2,312.1L752.4,324.5L766.1,338.2L773.6,347 M777.3,288.4L789.8,305.9L797.3,318.3L803.5,324.5 M759.9,302.1L771.1,315.8L782.3,328.3L792.3,339.5L797.3,347 M825.9,257.3L829.6,264.8L838.4,267.3 M833.4,254.8L842.1,269.7L847.1,278.5L857,287.2L868.2,298.4L875.7,307.1L874.5,317.1 M855.8,247.3L860.8,259.8L865.8,272.2L868.2,281L877,289.7L888.2,299.6L898.1,309.6L908.1,319.6L916.8,329.5 M865.8,248.6L870.7,259.8L875.7,269.7L883.2,277.2L891.9,285.9L901.9,294.7L913.1,305.9L924.3,317.1L934.3,327 M875.7,239.9L880.7,252.3L883.2,257.3L889.4,254.8 M916.8,221.2L921.8,232.4L926.8,242.3L930.5,249.8L929.3,254.8L923,261L919.3,263.5 M915.6,259.8L919.3,264.8L929.3,264.8L941.7,272.2L954.2,279.7L970,287.2 M903.1,277.2L913.1,285.9L921.8,292.2L929.3,299.6L939.2,309.6L949.2,319.6L957.9,329.5 M741.2,312.1L752.4,304.6L764.9,295.9L777.3,288.4 M748.7,320.8L761.1,312.1L773.6,303.4L784.8,297.1 M756.2,329.5L767.4,322.1L779.8,313.3L792.3,305.9 M762.4,338.2L774.8,330.8L786,323.3L794.8,317.1 M792.3,267.3L799.7,261L808.5,256 M802.2,273.5L809.7,267.3L817.2,262.3 M803.5,288.4L812.2,281L822.2,274.7L824,282.2L822.2,288.4L813.4,295.9 M804.7,335.8L817.2,328.3L829.6,320.8L847.1,310.8L855.8,304.6L865.8,298.4 M835.9,303.4L844.6,297.1L854.5,289.7L867,281L879.5,273.5L889.4,267.3L899.4,261 M838.4,279.7L847.1,277.8 M870.7,278.5L880.7,273.5 M875.7,317.1L888.2,308.4L901.9,298.4L913.1,289.7L924.3,281L934.3,274.7 M869.5,329.5L879.5,323.3L890.7,320.8 M884.4,257.3L889.4,254.8L896.9,258.5 M886.9,237.4L899.4,233.6L913.1,229.9L916.8,237.4L919.3,243.6L915.6,249.8 M890.7,246.1L904.4,242.3L918.1,239.9 M900.6,247.3L911.8,251.1L921.8,254.8L929.3,253.6 M894.4,274.7L900.6,267.3L906.9,263.5L908.1,269.7L901.9,277.2 M925.5,231.1L935.5,224.9L946.7,218.7 M946.7,200L947.3,210L946.7,218.7L951.7,227.4L959.2,237.4 M940.5,272.2L951.7,262.3L962.9,252.3L970,247.3 M928,285.9L939.2,277.2L949.2,269.7L960.4,261L970,253.6 M944.2,303.4L952.9,294.7L961.7,287.2 M909.3,324.5L920.6,314.6L929.3,307.1L936.7,299.6 M832.1,254.8L850.8,251.1L854.5,264.8L842.1,269.7 M835.9,261L852.1,257.3 M890.7,320.8L899.4,328.3L904.4,334.5 M904.9,333.3L927.4,312.1L943.6,297.1L961,279.7L972.2,258.5L988.4,241.1L999.6,229.9L1009.6,219.9L1020.8,208.7L1027,202.5 M921.1,281L942.3,269.7L961,252.3L978.4,234.3L987.1,238.6L997.1,247.3 M987.1,219.9L1002.1,203.7L1007.1,201.2 M987.1,219.9L999.6,229.9L1009.6,236.1L1019.5,237.4 M1002.1,203.7L1015.8,212.5 M961,252.3L972.2,258.5L982.2,264.8L988.4,266L995.9,261L998.4,254.8L995.9,253.6L1012.1,237.4 M942.3,273.5L952.3,279.7L961,285.9L977.2,292.2L989.6,300.9L999.6,309.6L1008.3,319.6 M1019.5,237.4L1024.5,227.4L1029.5,223.7L1041.9,232.4L1022,233 M1019.5,237.4L1032,238L1049.4,236.7L1051.9,241.1L1046.9,247.3L1041.9,252.3 M1030.7,243.6L1048.2,243 M1033.2,248.6L1044.4,249.2L1030.7,243.6 M954.8,274.7L961,269.7L964.7,272.2L961,277.2L954.8,274.7 M974.7,317.1L975.9,308.4L980.9,302.1L987.1,307.1L993.4,314.6L999.6,318.3 M982.2,319.6L983.4,312.1L988.4,310.8L992.1,315.8L989.6,318.3 M953.5,334.5L956,324.5L959.7,319.6L969.7,320.8L982.2,323.3L993.4,325.8L999.6,318.3L1003.3,315.8 M953.5,334.5L963.5,335.8L977.2,330.8L989.6,325.8 M963.5,338.2L967.2,322.1 M923.6,335.8L933.6,338.2L924.9,342L936.1,344.5 M890,236.1L902.5,232.4L912.4,229.9L916.2,237.4L918.6,243.6L914.9,249.8 M890,244.8L902.5,242.3L917.4,239.9 M900,247.3L911.2,251.1L921.1,254.8L928.6,253.6L932.3,249.8L929.9,242.3L926.1,234.9L924.9,229.9L931.1,226.2L946,218.7L947.3,210L943.6,200 M916.2,218.7L921.1,229.9L924.9,229.9 M946,218.7L954.8,229.9L959.7,237.4 M948.5,233L954.8,229.9 M914.9,258.5L919.9,263.5L927.4,262.3L936.1,267.3L947.3,276 M893.7,273.5L900,267.3L906.2,266L908.7,269.7L902.5,276L897.5,279.7L893.7,273.5 M890,264.8L900,261L908.7,262.3L919.9,263.5 M933.6,274.7L921.1,285.9 M896.2,200L903.7,207.5L906.2,214.9L916.2,218.7 M999.6,202.5L1004.6,201.2L1014.5,208.7L1019.5,210 M794.8,340L804.7,350L817.2,363.7L829.6,376.1L842.1,387.3L852.1,394.8 M839.6,340L849.6,350L860.8,361.2L872,371.1L880.7,378.6 M817.2,340L824.7,347.5L832.1,354.9L838.4,361.2 M799.7,354.9L807.2,363.7L817.2,373.6L829.6,384.8 M757.4,358.7L766.1,367.4L772.3,371.1L768.6,377.4L763.6,383.6L754.9,394.8L748.7,404.8L742.5,414.7L735,425.9L730,432.2 M757.4,358.7L773.6,348.7L777.3,345 M766.1,367.4L782.3,356.2L799.7,346.2L804.7,350 M772.3,371.1L786,362.4L799.7,354.9L811,347.5 M730,363.7L742.5,369.9L763.6,381.1L784.8,393.6 M778.6,377.4L789.8,387.3L794.8,381.1L807.2,388.6 M778.6,377.4L784.8,374.9L794.8,381.1 M789.8,376.1L799.7,369.9L811,364.9 M797.3,378.6L809.7,371.1 M817.2,363.7L827.1,356.2L837.1,350L847.1,342.5 M827.1,369.9L838.4,362.4L849.6,353.7L855.8,350 M852.1,394.8L862,383.6L872,371.1L885.7,357.4L895.6,347.5L904.4,340 M885.7,371.1L895.6,361.2L906.9,351.2L911.8,345L919.3,343.7L935.5,345 M889.4,350L896.9,356.2 M754.9,394.8L767.4,402.3L782.3,411 M757.4,414.7L762.4,404.8L767.4,414.7L771.1,407.3L776.1,414.7L767.4,419.7 M742.5,474.5L748.7,468.3L754.9,474.5 M730,472L742.5,474.5L754.9,475.8 M835.9,421L848.3,416L867,409.7L891.9,402.3L904.4,399.8 M833.4,427.2L848.3,422.2L867,417.2L885.7,413.5L916.8,404.8L929.3,402.3L941.7,407.3L949.2,419.7L954.2,434.7L951.7,447.1L941.7,452.1L929.3,457.1L924.3,458.3 M842.1,429.7L854.5,427.2L873.2,422.2L891.9,419.7L910.6,416 M859.5,434.7L873.2,430.9L891.9,425.9L904.4,424.7L916.8,421 M824.7,434.7L822.2,445.9L820.9,458.3L823.4,470.8L829.6,474.5L842.1,473.3 M829.6,437.1L837.1,433.4L844.6,438.4L852.1,444.6L860.8,452.1L867,458.3 M829.6,439.6L828.4,447.1L834.6,453.3L842.1,452.1L847.1,445.9 M877,438.4L889.4,439.6L904.4,438.4L916.8,439.6L924.3,445.9L929.3,452.1L924.3,458.3L935.5,467L946.7,478.2L954.2,482L970,482 M898.1,425.9L901.9,434.7L904.4,438.4 M914.3,419.7L918.1,432.2L904.4,438.4 M929.3,409.7L934.3,424.7L940.5,439.6L946.7,445.9 M934.3,424.7L946.7,424.7 M931.8,432.2L944.2,429.7 M848.3,416L852.1,424.7L855.8,432.2 M844.6,421L848.3,429.7 M881.9,437.1L896.9,430.9L900.6,437.1 M824.7,462.1L832.1,467L842.1,472L852.1,479.5L859.5,487 M867,464.5L877,470.8L885.7,479.5L890.7,487 M860.8,475.8L873.2,468.3L877,470.8L864.5,477 M854.5,445.9L864.5,439.6L867,443.4L858.3,449.6 M839.6,452.1L849.6,459.6L860.8,469.5 M822.3,440L821.1,452.5L821.1,464.9L827.3,471.1L836,473.6L844.8,471.1 M829.8,445L828.6,458.7L832.3,464.9L839.8,463.7 M847.3,445L857.2,452.5L867.2,462.4L874.7,468.6L872.2,471.1L864.7,473.6L857.2,479.9L849.7,476.1L842.3,471.1 M867.2,462.4L872.2,450L875.9,440 M869.7,456.2L879.6,463.7L885.9,469.9L889.6,477.4L890.8,482.3 M882.1,440L898.3,445L910.8,448.7L923.2,458.7L933.2,468.6L944.4,477.4L953.1,481.1L976.8,483.6L981.8,484.8L994.2,496L1005.4,506 M910.8,448.7L920.7,445L929.5,450L923.2,458.7L935.7,454.9L945.6,453.7L954.4,447.5L958.1,440 M827.3,487.3L834.8,478.6L842.3,474.9L849.7,477.4L859.7,486.1L870.9,492.3L878.4,502.3L883.4,513.5L884.6,524.7L885.9,537.1L887.1,552.1L885.9,557.1L859.7,565.8L849.7,569.5 M839.8,492.3L849.7,484.8L854.7,487.3L864.7,494.8L859.7,499.8L849.7,504.8L844.8,498.5L839.8,492.3 M827.3,487.3L833.6,494.8L842.3,503.5L848.5,502.3L847.3,509.7L839.8,519.7L834.8,529.7L829.8,539.6L822.3,547.1L813.6,553.3L813.6,558.3L827.3,560.8L834.8,557.1 M842.3,517.2L854.7,509.7L869.7,519.7L877.1,527.2L880.9,532.2L885.9,537.1 M841,527.2L849.7,521L857.2,524.7L849.7,532.2L841,527.2 M847.3,537.1L859.7,528.4L867.2,521 M822.3,545.9L832.3,549.6L838.5,554.6L842.3,564.5L849.7,569.5 M837.3,534.7L844.8,543.4L849.7,552.1L859.7,565.8 M844.8,552.1L854.7,548.4L867.2,544.6L878.4,542.1 M847.3,557.1L861,553.3L877.1,548.4 M849.7,552.1L854.7,563.3 M854.7,550.8L859.7,562.1 M859.7,549.6L864.7,560.8 M864.7,548.4L869.7,558.3 M869.7,545.9L874.7,555.8 M857.2,537.1L864.7,525.9L869.7,519.7 M862.2,539.6L872.2,525.9 M885.9,527.2L904.5,519.7L908.3,517.2L914.5,514.7L917,522.2L913.3,527.2 M885.9,533.4L905.8,525.9L910.8,529.7 M887.1,538.4L904.5,532.2L909.5,534.7 M888.4,543.4L909.5,535.9 M904.5,519.7L908.3,529.7 M872.2,504.8L877.1,502.3L882.1,509.7L879.6,517.2L874.7,512.2L872.2,504.8 M878.4,529.7L880.9,539.6L879.6,552.1L880.9,555.8" stroke="#ffee92" stroke-width="2.5"/><path d="M347.5,211C350.4,212.1 357.8,213.4 364.9,217.3C372.0,221.2 381.6,229.7 389.9,234.7C398.2,239.7 402.3,242.8 414.8,247.2C427.3,251.6 450.1,257.2 464.7,260.9C479.2,264.6 489.6,265.7 502.1,269.6C514.6,273.6 527.5,279.4 539.5,284.6C551.5,289.8 566.1,295.8 574.4,300.8C582.7,305.8 584.4,309.7 589.4,314.5C594.4,319.3 598.9,325.1 604.3,329.5C609.7,333.9 615.8,337.0 621.8,340.7C627.8,344.4 637.4,350.0 640.5,351.9 M640.5,351.9C641.5,354.0 645.5,359.8 646.7,364.4C647.9,369.0 648.5,374.0 647.9,379.4C647.3,384.8 643.8,391.4 643,396.8C642.2,402.2 642.0,407.1 643,411.8C644.0,416.5 648.2,422.8 649.2,425 M640.5,351.9C644.0,351.6 651.5,350.6 661.7,349.9C671.9,349.1 691.6,348.7 701.6,347.4C711.6,346.1 715.3,343.4 721.5,341.9C727.7,340.4 734.4,338.2 739,338.2C743.6,338.2 745.6,341.1 748.9,341.9C752.2,342.7 757.2,343.0 758.9,343.2 M694.1,137.5C693.7,140.0 691.6,147.8 691.6,152.4C691.6,157.0 692.0,158.7 694.1,164.9C696.2,171.1 699.5,181.7 704.1,189.8C708.7,197.9 716.5,206.8 721.5,213.5C726.5,220.2 730.5,224.5 734,229.7C737.5,234.9 739.8,240.5 742.7,244.7C745.6,248.9 747.9,252.5 751.4,254.7C754.9,256.9 758.9,257.5 763.9,257.7C768.9,257.9 777.2,255.2 781.4,255.9C785.5,256.6 786.3,259.9 788.8,262.2C791.3,264.5 795.0,268.4 796.3,269.6 M721.5,214.8C718.2,216.7 706.4,221.4 701.6,226C696.8,230.6 695.3,237.8 692.8,242.2C690.3,246.6 689.3,248.2 686.6,252.2C683.9,256.1 678.5,261.3 676.6,265.9C674.7,270.5 676.2,273.2 675.4,279.6C674.6,286.0 673.3,295.4 671.6,304.5C669.9,313.6 667.0,326.9 665.4,334.5C663.8,342.1 662.3,347.3 661.7,349.9 M675.4,279.6C676.0,282.9 676.8,292.5 679.1,299.6C681.4,306.7 685.4,314.1 689.1,322C692.9,329.9 696.2,340.7 701.6,346.9C707.0,353.1 714.9,355.4 721.5,359.4C728.1,363.3 738.2,368.7 741.5,370.6 M649.2,284.6C651.7,285.0 660.5,286.1 664.2,287.1C667.9,288.1 670.4,290.2 671.6,290.8 M701.6,344.4C702.8,342.3 706.6,335.9 709,332C711.4,328.1 714.7,322.7 715.8,320.8 M820,213.5C816.9,215.4 806.9,221.3 801.3,224.8C795.7,228.3 790.4,231.4 786.3,234.7C782.1,238.0 778.9,241.6 776.4,244.7C773.9,247.8 772.2,251.9 771.4,253.4 M730,223.7C731.0,225.1 734.1,229.1 736.2,232.4C738.3,235.7 740.4,240.3 742.5,243.6C744.6,246.9 746.2,250.1 748.7,252.3C751.2,254.5 753.7,256.3 757.4,256.7C761.1,257.1 767.4,254.9 771.1,254.8C774.8,254.7 777.7,255.4 779.8,256C781.9,256.6 783.0,258.1 783.6,258.5 M771.1,254.8C771.3,254.0 770.8,252.7 772.3,249.8C773.8,246.9 776.9,240.9 779.8,237.4C782.7,233.9 785.6,231.5 789.8,228.6C793.9,225.7 800.1,222.6 804.7,219.9C809.3,217.2 812.8,215.0 817.2,212.5C821.6,210.0 828.4,207.1 830.9,205C833.4,202.9 831.9,200.8 832.1,200 M833.4,207.5C834.9,207.1 838.6,206.1 842.1,205C845.6,203.9 851.2,202.0 854.5,201.2C857.8,200.4 860.8,200.2 862,200 M895.6,200C896.6,200.8 900.2,202.7 901.9,205C903.6,207.3 903.7,211.6 905.6,213.7C907.5,215.8 911.2,216.2 913.1,217.4C915.0,218.7 916.2,220.6 916.8,221.2 M1027,202.5C1028.5,202.9 1033.6,204.0 1035.7,205C1037.8,206.0 1037.0,207.2 1039.5,208.7C1042.0,210.1 1047.8,211.4 1050.7,213.7C1053.6,216.0 1054.2,219.7 1056.9,222.4C1059.6,225.1 1065.9,227.0 1066.9,229.9C1067.9,232.8 1064.1,236.2 1063.1,239.9C1062.0,243.6 1061.4,248.2 1060.6,252.3C1059.8,256.4 1060.0,262.3 1058.1,264.8C1056.2,267.3 1052.9,266.7 1049.4,267.3C1045.9,267.9 1040.1,267.5 1037,268.5C1033.9,269.5 1032.0,271.6 1030.7,273.5C1029.5,275.4 1029.9,277.0 1029.5,279.7C1029.1,282.4 1029.0,286.0 1028.2,289.7C1027.4,293.4 1025.7,298.4 1024.5,302.1C1023.3,305.8 1022.0,309.6 1020.8,312.1C1019.5,314.6 1019.1,315.9 1017,317.1C1014.9,318.4 1009.8,319.2 1008.3,319.6 M1008.3,319.6C1010.2,320.4 1016.0,323.3 1019.5,324.5C1023.0,325.7 1024.1,327.0 1029.5,327C1034.9,327.0 1044.4,325.2 1051.9,324.5C1059.4,323.8 1069.3,322.5 1074.3,322.7C1079.3,322.9 1079.9,324.4 1081.8,325.8C1083.7,327.2 1084.9,328.9 1085.5,330.8C1086.1,332.7 1086.3,334.9 1085.5,337C1084.7,339.1 1082.5,341.5 1080.6,343.2C1078.7,344.9 1075.3,346.4 1074.3,347 M959.7,347C962.6,345.9 970.1,342.4 977.2,340.7C984.3,339.0 993.8,338.0 1002.1,337C1010.4,336.0 1018.7,335.2 1027,334.5C1035.3,333.8 1042.2,333.2 1051.9,332.6C1061.7,332.0 1076.2,330.9 1085.5,330.8C1094.8,330.7 1100.6,331.2 1108,332C1115.4,332.8 1126.3,335.2 1130,335.8 M1085.5,200C1085.9,200.8 1086.8,203.7 1088,205C1089.2,206.3 1092.2,207.6 1093,208.1 M748.7,487C750.8,484.3 755.9,477.0 761.1,470.8C766.3,464.6 774.2,456.0 779.8,449.6C785.4,443.2 789.8,437.4 794.8,432.2C799.8,427.0 804.1,422.9 809.7,418.5C815.3,414.1 822.0,410.1 828.4,406C834.8,401.9 843.9,396.3 848.3,393.6C852.6,390.9 848.3,393.3 854.5,389.8C860.7,386.3 876.4,377.2 885.7,372.4C895.1,367.6 904.6,363.9 910.6,361.2C916.6,358.5 911.9,359.3 921.8,356.2C931.7,353.1 962.0,344.8 970,342.5 M763.6,487C765.7,484.3 771.3,477.0 776.1,470.8C780.9,464.6 786.7,456.5 792.3,449.6C797.9,442.8 803.5,435.9 809.7,429.7C815.9,423.5 823.2,417.4 829.6,412.2C836.0,407.0 844.1,401.4 848.3,398.5C852.4,395.6 853.5,395.4 854.5,394.8 M858.3,392.3C861.0,391.9 870.1,390.6 874.5,389.8C878.9,389.0 882.3,388.6 884.4,387.3C886.5,386.1 887.1,383.8 886.9,382.3C886.7,380.9 884.7,379.0 883.2,378.6C881.8,378.2 881.7,378.2 878.2,379.9C874.7,381.6 864.7,387.2 862,388.6 M854.5,394.8C854.5,395.6 853.5,397.7 854.5,399.8C855.5,401.9 858.9,404.8 860.8,407.3C862.7,409.8 864.6,411.8 865.8,414.7C867.0,417.6 867.0,421.6 868.2,424.7C869.4,427.8 871.7,431.1 873.2,433.4C874.7,435.7 877.0,436.1 877,438.4C877.0,440.7 874.5,444.2 873.2,447.1C872.0,450.0 871.0,452.9 869.5,455.8C868.0,458.7 867.0,461.6 864.5,464.5C862.0,467.4 857.6,470.6 854.5,473.3C851.4,476.0 848.3,478.4 845.8,480.7C843.3,483.0 840.6,485.9 839.6,487 M817.1,137.5C819.6,138.8 827.1,143.1 832.1,145C837.1,146.9 842.4,149.9 847,148.7C851.6,147.4 857.4,139.4 859.5,137.5 M847,137.5C846.6,139.6 846.2,146.6 844.5,149.9C842.8,153.2 838.9,154.1 837,157.4C835.1,160.7 833.7,164.9 833.3,169.9C832.9,174.9 834.7,181.6 834.5,187.4C834.3,193.2 832.5,201.9 832.1,204.8 M832.1,204.8C828.4,206.9 816.7,213.2 809.6,217.3C802.5,221.5 795.5,225.1 789.7,229.7C783.9,234.3 778.0,240.5 774.7,244.7C771.4,248.9 770.5,253.0 769.7,254.7 M832.1,204.8C835.0,204.4 842.5,204.0 849.5,202.3C856.5,200.6 868.6,196.1 874.4,194.8C880.2,193.6 880.6,193.6 884.4,194.8C888.1,196.1 893.6,199.4 896.9,202.3C900.2,205.2 900.7,209.8 904.4,212.3C908.1,214.8 916.8,216.5 919.3,217.3 M936.8,186.1C937.6,187.6 940.1,190.0 941.8,194.8C943.5,199.6 946.0,211.5 946.8,214.8 M966.7,137.5C966.5,139.6 966.3,145.8 965.5,149.9C964.7,154.1 963.6,159.7 961.7,162.4C959.8,165.1 957.1,166.2 954.2,166.2C951.3,166.2 948.0,164.5 944.3,162.4C940.6,160.3 933.7,156.2 931.8,153.7C929.9,151.2 931.3,150.0 933,147.5C934.7,145.0 940.3,140.2 941.8,138.7 M1014.1,137.5C1013.7,141.2 1012.4,153.7 1011.6,159.9C1010.8,166.1 1009.7,170.3 1009.1,174.9C1008.5,179.5 1009.0,183.2 1007.8,187.4C1006.5,191.6 1002.6,197.7 1001.6,199.8 M1020.3,137.5C1019.5,141.7 1016.8,155.3 1015.3,162.4C1013.8,169.5 1011.8,174.9 1011.6,179.9C1011.4,184.9 1013.7,190.2 1014.1,192.3 M1019.1,187.4C1025.8,186.6 1048.2,183.7 1059,182.4C1069.8,181.2 1075.6,181.2 1083.9,179.9C1092.2,178.7 1101.3,176.4 1108.8,174.9C1116.3,173.4 1123.6,170.3 1128.8,171.1C1134.0,171.9 1138.1,178.4 1140,179.9 M1088.9,179.9C1088.3,182.0 1085.3,188.6 1085.1,192.3C1084.9,196.0 1086.3,199.8 1087.6,202.3C1088.8,204.8 1091.8,206.5 1092.6,207.3 M1126.3,334.5L1140,338.2 M1100,177.4C1102.5,176.8 1110.2,174.8 1115,173.6C1119.8,172.3 1124.5,168.7 1128.7,169.9C1132.9,171.2 1135.3,178.4 1139.9,181.1C1144.5,183.8 1150.7,182.3 1156.1,186.1C1161.5,189.8 1167.9,199.2 1172.3,203.6C1176.7,208.0 1179.2,207.5 1182.3,212.3C1185.4,217.1 1189.8,222.6 1191,232.2C1192.2,241.8 1191.2,258.4 1189.8,269.6C1188.3,280.8 1185.0,290.9 1182.3,299.6C1179.6,308.3 1176.1,314.9 1173.6,322C1171.1,329.1 1168.3,338.6 1167.3,341.9 M1100,332C1104.2,332.4 1113.7,332.9 1124.9,334.5C1136.1,336.1 1150.7,337.3 1167.3,341.9C1183.9,346.5 1208.5,356.5 1224.7,361.9C1240.9,367.3 1250.5,370.2 1264.6,374.4C1278.7,378.5 1295.4,382.6 1309.5,386.8C1323.6,391.0 1334.5,395.1 1349.4,399.3C1364.4,403.5 1383.0,407.5 1399.2,411.8C1415.4,416.1 1438.7,422.8 1446.6,425 M1124.9,333.2C1128.2,334.3 1137.8,338.4 1144.9,340C1152.0,341.6 1163.6,342.2 1167.3,342.7 M1193.5,273.4C1195.4,270.3 1201.6,259.9 1204.7,254.7C1207.8,249.5 1208.0,244.7 1212.2,242.2C1216.4,239.7 1225.1,239.3 1229.7,239.7C1234.3,240.1 1237.5,242.6 1239.6,244.7C1241.7,246.8 1239.6,250.5 1242.1,252.2C1244.6,253.9 1250.8,253.0 1254.6,254.7C1258.3,256.4 1263.3,258.0 1264.6,262.2C1265.8,266.4 1262.5,275.0 1262.1,279.6C1261.7,284.2 1260.4,285.9 1262.1,289.6C1263.8,293.4 1268.1,297.1 1272.1,302.1C1276.0,307.1 1285.4,311.6 1285.8,319.5C1286.2,327.4 1278.0,340.2 1274.5,349.4C1271.0,358.5 1266.2,370.2 1264.6,374.4 M1222.2,239.7C1222.2,237.6 1221.8,229.9 1222.2,227.2C1222.6,224.5 1221.8,223.9 1224.7,223.5C1227.6,223.1 1234.2,223.8 1239.6,224.8C1245.0,225.8 1254.2,228.9 1257.1,229.7 M1365.6,211C1365.2,214.9 1363.7,227.4 1363.1,234.7C1362.5,242.0 1362.6,247.8 1361.8,254.7C1361.0,261.6 1357.5,271.9 1358.1,275.9C1358.7,279.8 1363.9,276.5 1365.6,278.4C1367.3,280.3 1368.3,282.8 1368.1,287.1C1367.9,291.5 1366.2,300.4 1364.3,304.5C1362.4,308.6 1358.0,309.1 1356.8,312C1355.5,314.9 1355.5,318.2 1356.8,322C1358.0,325.8 1361.0,330.9 1364.3,334.5C1367.6,338.1 1374.7,342.3 1376.8,343.9 M1343.1,307C1343.7,307.6 1345.0,310.4 1346.9,310.8C1348.8,311.2 1352.7,309.3 1354.3,309.5C1355.9,309.7 1356.4,311.6 1356.8,312 M1356.8,322C1355.6,324.5 1353.4,333.1 1349.4,337C1345.5,340.9 1336.6,341.6 1333.1,345.7C1329.6,349.8 1330.3,355.5 1328.2,361.9C1326.1,368.3 1324.0,380.1 1320.7,384.3C1317.4,388.5 1310.3,384.1 1308.2,386.8C1306.1,389.5 1306.3,396.8 1308.2,400.5C1310.1,404.2 1315.0,405.2 1319.4,409.3C1323.8,413.4 1331.9,422.4 1334.4,425 M1390.5,272.1C1390.1,274.2 1387.2,280.9 1388,284.6C1388.8,288.4 1393.8,290.5 1395.5,294.6C1397.2,298.8 1396.1,305.4 1398,309.5C1399.9,313.6 1402.3,316.2 1406.7,319.5C1411.1,322.8 1418.8,325.8 1424.2,329.5C1429.6,333.2 1433.7,338.2 1439.1,341.9C1444.5,345.6 1451.6,348.6 1456.6,351.9C1461.6,355.2 1463.6,360.0 1469,361.9C1474.4,363.8 1482.3,360.4 1489,363.1C1495.7,365.8 1501.0,372.9 1508.9,378.1C1516.8,383.3 1526.8,388.7 1536.4,394.3C1546.0,399.9 1559.0,407.2 1566.3,411.8C1573.6,416.4 1577.7,420.1 1580,421.7 M1462.8,224.8C1461.3,222.3 1455.1,213.6 1454.1,209.8C1453.1,206.1 1454.1,204.8 1456.6,202.3C1459.1,199.8 1464.0,196.5 1469,194.8C1474.0,193.1 1481.9,194.2 1486.5,192.3C1491.1,190.4 1492.3,184.0 1496.5,183.6C1500.7,183.2 1502.7,189.4 1511.4,189.8C1520.1,190.2 1537.4,187.1 1548.8,186.1C1560.2,185.1 1574.8,184.0 1580,183.6 M1563.8,158.7C1564.2,161.4 1566.7,170.9 1566.3,174.9C1565.9,178.9 1562.1,181.2 1561.3,182.4 M1480,193.3C1481.3,192.7 1485.7,191.6 1487.8,189.4C1489.9,187.2 1489.9,180.3 1492.5,180.1C1495.1,179.8 1497.8,186.3 1503.5,187.9C1509.2,189.5 1518.3,189.9 1526.9,189.4C1535.5,188.9 1548.3,186.0 1555.1,184.7C1561.9,183.4 1562.9,181.1 1567.6,181.6C1572.3,182.1 1577.0,185.0 1583.2,187.9C1589.5,190.8 1598.8,195.2 1605.1,198.8C1611.4,202.5 1614.8,206.4 1620.8,209.8C1626.8,213.2 1635.9,215.8 1641.1,219.2C1646.3,222.6 1647.7,227.2 1652.1,230.1C1656.5,233.0 1662.5,234.1 1667.7,236.4C1672.9,238.8 1679.4,241.3 1683.3,244.2C1687.2,247.1 1689.1,249.7 1691.2,253.6C1693.3,257.5 1695.8,262.1 1695.8,267.6C1695.8,273.1 1691.5,280.6 1691.2,286.4C1691.0,292.1 1693.5,297.3 1694.3,302.1C1695.1,306.9 1695.5,312.9 1695.8,315 M1562.9,158.9C1563.6,160.6 1566.3,166.1 1566.8,169.1C1567.3,172.1 1567.4,174.6 1566,176.9C1564.6,179.2 1559.5,182.1 1558.2,183.2 M1638,183.2C1640.3,183.4 1647.7,185.5 1652.1,184.7C1656.5,183.9 1660.2,179.9 1664.6,178.5C1669.0,177.1 1673.8,176.8 1678.6,176.1C1683.4,175.4 1691.0,174.8 1693.5,174.6 M1641.1,219.2C1642.9,218.4 1648.7,216.1 1652.1,214.5C1655.5,212.9 1659.9,210.6 1661.4,209.8 M1641.1,219.2C1640.3,221.0 1639.8,228.8 1636.4,230.1C1633.0,231.4 1626.3,228.8 1620.8,227C1615.3,225.2 1606.5,220.5 1603.6,219.2 M1641.1,219.2C1644.2,219.7 1655.0,221.8 1659.9,222.3C1664.9,222.8 1667.4,224.1 1670.8,222.3C1674.2,220.5 1676.3,215.0 1680.2,211.3C1684.1,207.7 1692.0,202.2 1694.3,200.4 M1603.6,236.4C1605.2,239.0 1610.1,246.8 1613,252C1615.9,257.2 1619.0,261.9 1620.8,267.6C1622.6,273.3 1621.3,281.7 1623.9,286.4C1626.5,291.1 1632.5,292.9 1636.4,295.8C1640.3,298.7 1644.8,300.4 1647.4,303.6C1650.0,306.8 1651.3,313.1 1652.1,315 M1400,314.8C1401.9,316.1 1407.2,319.8 1411.2,322.3C1415.2,324.8 1421.2,327.6 1424.3,329.8C1427.4,332.0 1424.6,331.3 1429.9,335.4C1435.2,339.4 1447.9,349.1 1456,354.1C1464.1,359.1 1473.2,362.2 1478.5,365.3C1483.8,368.4 1484.1,370.5 1487.8,372.8C1491.5,375.1 1497.2,378.5 1500.9,379.3C1504.6,380.1 1505.9,376.0 1510.2,377.4C1514.5,378.8 1521.7,384.4 1527,387.7C1532.3,391.0 1537.0,393.3 1542,397C1547.0,400.7 1552.6,406.4 1556.9,410.1C1561.2,413.9 1564.4,417.6 1568.1,419.5C1571.8,421.4 1575.9,420.4 1579.3,421.3C1582.7,422.2 1584.3,423.9 1588.7,425.1C1593.1,426.4 1602.7,428.2 1605.5,428.8 M1601.8,293.4C1601.6,295.7 1601.1,303.0 1600.8,307.4C1600.5,311.8 1600.7,310.5 1599.9,319.5C1599.1,328.5 1597.3,350.8 1596.2,361.5C1595.1,372.2 1594.2,376.8 1593.4,384C1592.6,391.2 1592.1,398.3 1591.5,404.5C1590.9,410.7 1589.9,418.5 1589.6,421.3 M1600.8,307.4C1606.0,308.2 1625.6,310.9 1631.7,312C1637.8,313.1 1635.9,311.9 1637.3,313.9C1638.7,315.9 1638.2,322.2 1640.1,324.2C1642.0,326.2 1647.1,325.7 1648.5,326 M1599.9,319.5C1604.0,320.1 1616.1,322.1 1624.2,323.2C1632.3,324.3 1640.7,324.8 1648.5,326C1656.3,327.2 1663.8,329.4 1670.9,330.7C1678.1,331.9 1688.0,333.0 1691.4,333.5 M1621.4,270C1621.6,271.6 1621.5,275.9 1622.3,279.3C1623.1,282.7 1623.6,287.5 1626.1,290.6C1628.6,293.7 1633.9,295.7 1637.3,298C1640.7,300.3 1644.3,301.8 1646.6,304.6C1648.9,307.4 1650.7,311.2 1651.3,314.8C1651.9,318.4 1652.0,321.6 1650.3,326C1648.6,330.4 1644.1,336.3 1641,341C1637.9,345.7 1634.2,349.1 1631.7,354.1C1629.2,359.1 1628.9,366.2 1626.1,370.9C1623.3,375.6 1618.2,379.0 1614.8,382.1C1611.4,385.2 1607.2,386.2 1605.5,389.6C1603.8,393.0 1604.8,400.4 1604.6,402.6 M1694.2,270C1694.4,273.1 1695.2,280.9 1695.2,288.7C1695.2,296.5 1694.8,309.2 1694.2,316.7C1693.6,324.2 1692.5,328.2 1691.4,333.5C1690.3,338.8 1689.9,343.8 1687.7,348.5C1685.5,353.2 1681.8,356.8 1678.4,361.5C1675.0,366.2 1671.2,371.2 1667.2,376.5C1663.2,381.8 1658.1,388.6 1654.1,393.3C1650.0,398.0 1646.6,400.8 1642.9,404.5C1639.2,408.2 1635.1,412.3 1631.7,415.7C1628.3,419.1 1626.3,422.6 1622.3,425.1C1618.2,427.6 1609.9,429.8 1607.4,430.7 M1593.4,398.9C1595.4,399.8 1601.0,402.3 1605.5,404.5C1610.0,406.7 1616.0,409.8 1620.4,412C1624.8,414.2 1629.8,416.7 1631.7,417.6 M1591.5,406.4C1589.6,407.5 1581.1,410.4 1580.3,412.9C1579.5,415.4 1585.7,419.9 1586.8,421.3 M1631.7,417.6C1632.6,420.1 1635.1,426.9 1637.3,432.5C1639.5,438.1 1642.7,445.3 1644.7,451.2C1646.7,457.1 1648.6,465.2 1649.4,468 M1605.5,428.8C1605.3,431.0 1605.4,437.1 1604.6,441.9C1603.8,446.7 1601.4,455.1 1600.8,457.8 M1607.4,430.7C1607.6,429.8 1606.1,427.0 1608.3,425.1C1610.5,423.2 1616.5,421.1 1620.4,419.5C1624.3,417.9 1629.8,416.3 1631.7,415.7 M1400,412.9C1406.2,414.6 1425.0,419.6 1437.4,423.2C1449.9,426.8 1462.2,430.3 1474.7,434.4C1487.2,438.4 1499.6,443.1 1512.1,447.5C1524.6,451.9 1538.6,456.9 1549.5,460.6C1560.4,464.3 1568.2,467.7 1577.5,469.9C1586.8,472.1 1596.2,473.3 1605.5,473.6C1614.8,473.9 1626.2,472.6 1633.5,471.8C1640.8,471.0 1644.0,469.8 1649.4,469C1654.9,468.2 1662.6,466.0 1666.2,467.1C1669.8,468.2 1667.9,473.0 1670.9,475.5C1673.9,478.0 1681.8,480.9 1684,482 M1576.5,470.8C1578.2,471.9 1582.6,475.1 1586.8,477.4C1591.0,479.7 1599.3,483.6 1601.8,484.8 M1646.6,451.2C1649.1,451.4 1657.5,452.4 1661.5,452.1C1665.5,451.8 1669.0,450.2 1670.9,449.3C1672.8,448.4 1672.5,447.0 1672.8,446.5 M1649.4,465.2L1655,464.3 M347.5,597.5C354.6,595.5 374.5,590.0 389.9,585.8C405.3,581.6 423.1,576.5 439.7,572.1C456.3,567.7 473.0,563.8 489.6,559.6C506.2,555.5 529.1,550.5 539.5,547.2C549.9,543.9 547.8,543.5 551.9,539.7C556.0,536.0 560.2,530.5 564.4,524.7C568.6,518.9 572.7,510.2 576.9,504.8C581.1,499.4 585.2,495.0 589.4,492.3C593.5,489.6 595.6,489.0 601.8,488.6C608.0,488.2 618.5,489.4 626.8,489.8C635.1,490.2 645.5,491.1 651.7,491.1C657.9,491.1 660.5,491.1 664.2,489.8C667.9,488.6 670.8,485.9 674.1,483.6C677.4,481.3 680.8,478.8 684.1,476.1C687.4,473.4 692.4,468.8 694.1,467.4 M645.5,420C646.5,422.1 648.6,428.4 651.7,432.5C654.8,436.6 658.8,440.3 664.2,444.9C669.6,449.5 679.1,456.1 684.1,459.9C689.1,463.6 690.8,467.0 694.1,467.4C697.4,467.8 699.1,462.4 704.1,462.4C709.1,462.4 717.4,465.7 724,467.4C730.6,469.1 738.9,470.5 743.9,472.4C748.9,474.3 752.2,477.6 753.9,478.6 M671.6,477.4C675.4,475.5 686.2,470.3 694.1,466.1C702.0,461.9 712.4,457.2 719,452.4C725.6,447.6 729.0,442.9 734,437.5C739.0,432.1 746.4,422.9 748.9,420 M694.1,484.8C693.3,487.7 690.6,495.9 689.1,502.3C687.6,508.8 685.0,519.5 685.4,523.5C685.8,527.5 690.6,525.6 691.6,526 M694.1,482.3C695.4,483.6 699.9,486.9 701.6,489.8C703.3,492.7 703.7,498.1 704.1,499.8 M706.5,472.4C707.8,474.5 711.1,480.2 714,484.8C716.9,489.4 720.2,495.2 724,499.8C727.8,504.4 732.8,508.8 736.5,512.3C740.2,515.8 744.8,519.5 746.4,521 M813.8,425C809.6,429.6 797.1,442.4 788.8,452.4C780.5,462.4 770.1,475.2 763.9,484.8C757.7,494.4 754.7,501.9 751.4,509.8C748.1,517.7 746.4,524.7 743.9,532.2C741.4,539.7 739.0,546.7 736.5,554.6C734.0,562.5 731.9,572.1 729,579.6C726.1,587.1 722.3,593.7 719,599.5C715.7,605.3 714.0,607.9 709,614.5C704.0,621.1 696.6,630.2 689.1,639.4C681.6,648.5 672.5,659.4 664.2,669.4C655.9,679.4 645.9,691.7 639.2,699.3C632.6,706.9 626.8,712.4 624.3,715 M776.4,469.9C772.6,474.0 761.0,486.5 753.9,494.8C746.8,503.1 740.6,511.4 734,519.7C727.4,528.0 719.0,537.2 714,544.7C709.0,552.2 706.6,557.1 704.1,564.6C701.6,572.1 701.2,583.0 699.1,589.6C697.0,596.2 696.2,598.7 691.6,604.5C687.0,610.3 677.8,617.9 671.6,624.5C665.4,631.1 658.2,639.4 654.2,644.4C650.2,649.4 649.0,652.7 647.9,654.4 M734,562.1C735.2,562.3 740.5,561.9 741.5,563.4C742.5,564.9 741.9,569.9 740.2,570.9C738.5,571.9 733.0,569.8 731.5,569.6 M741.5,590.8C740.2,593.9 736.3,604.5 734,609.5C731.7,614.5 728.8,618.8 727.7,620.7 M691.6,603.3C694.5,604.3 704.4,607.2 709,609.5C713.6,611.8 715.7,615.1 719,617C722.3,618.9 727.3,620.1 729,620.7 M1079.2,420C1080.0,421.7 1080.0,425.0 1084.2,430C1088.4,435.0 1096.7,442.0 1104.2,449.9C1111.7,457.8 1121.6,469.1 1129.1,477.4C1136.6,485.7 1144.8,495.2 1149,499.8C1153.2,504.4 1153.2,504.0 1154,504.8 M1329.7,420C1331.3,422.1 1335.4,428.6 1339.6,432.5C1343.8,436.4 1346.3,442.2 1354.6,443.7C1362.9,445.1 1381.0,440.2 1389.5,441.2C1398.0,442.2 1403.0,448.4 1405.7,449.9 M1576.5,471.1C1580.2,473.0 1591.1,477.9 1599,482.3C1606.9,486.7 1615.6,491.9 1623.9,497.3C1632.2,502.7 1640.5,509.4 1648.8,514.8C1657.1,520.2 1668.6,526.4 1673.8,529.7C1679.0,533.0 1679.0,533.9 1680,534.7 M1599,486.1C1597.3,488.0 1593.2,492.1 1589,497.3C1584.8,502.5 1580.7,510.6 1574,517.2C1567.3,523.9 1559.5,530.6 1549.1,537.2C1538.7,543.9 1524.2,551.7 1511.7,557.1C1499.2,562.5 1481.0,567.3 1474.3,569.6C1467.6,571.9 1477.2,573.0 1471.8,570.9C1466.4,568.8 1446.9,559.4 1441.9,557.1 M1599,486.1L1601.5,494.8 M1587.7,498.5L1591.5,506 M1692.6,543.4C1690.3,544.5 1681.2,547.6 1678.9,549.7C1676.6,551.8 1681.0,554.7 1678.9,555.9C1676.8,557.1 1668.9,555.2 1666.4,557.1C1663.9,559.0 1664.3,565.4 1663.9,567.1 M1639,558.4C1637.8,560.1 1631.9,565.7 1631.5,568.4C1631.1,571.1 1630.3,572.7 1636.5,574.6C1642.7,576.5 1662.1,580.9 1668.9,579.6C1675.8,578.4 1674.7,569.0 1677.6,567.1C1680.5,565.2 1683.7,569.2 1686.4,568.4C1689.1,567.6 1692.7,563.1 1693.9,562.1 M1639,558.4C1642.3,559.0 1652.7,560.9 1658.9,562.1C1665.1,563.4 1673.5,565.3 1676.4,565.9 M1636.5,565.9L1671.4,573.4 M1646.5,559.6L1641.5,574.6 M1656.5,562.1L1651.5,577.1 M1666.4,564.1L1661.4,578.3 M1693.9,562.1C1691.8,565.0 1686.4,573.4 1681.4,579.6C1676.4,585.8 1668.9,592.9 1663.9,599.5C1658.9,606.1 1654.6,614.1 1651.5,619.5C1648.4,624.9 1646.2,625.2 1645.2,631.9C1644.2,638.5 1646.2,651.1 1645.2,659.4C1644.2,667.7 1643.0,672.5 1639,681.8C1635.0,691.1 1624.4,709.5 1621.5,715 M1686.4,535.9L1691.4,529.7 M1677.6,567.1C1677.8,565.2 1677.4,557.6 1678.9,555.9C1680.4,554.2 1685.2,556.9 1686.4,557.1 M640.5,700C637.2,704.0 630.5,713.8 620.5,723.7C610.5,733.6 592.4,748.7 580.6,759.3C568.8,769.9 558.0,778.9 549.5,787.3C541.0,795.7 537.8,798.9 529.5,809.7C521.2,820.5 509.6,838.4 499.6,852.1C489.6,865.8 479.7,880.8 469.7,892C459.7,903.2 450.9,911.5 439.7,919.4C428.5,927.3 414.4,933.2 402.3,939.4C390.2,945.6 373.2,953.9 367.4,956.8 M499.6,854.6C501.1,855.6 506.6,857.5 508.3,860.8C510.0,864.1 509.6,868.5 509.6,874.5C509.6,880.5 507.5,890.4 508.3,897C509.1,903.6 511.4,907.8 514.5,914.4C517.6,921.0 524.9,933.1 527,936.9 M1628.9,700C1626.0,705.4 1616.8,723.2 1611.4,732.4C1606.0,741.5 1601.1,747.4 1596.5,754.9C1591.9,762.4 1587.8,770.6 1584,777.3C1580.2,783.9 1579.0,788.1 1574,794.8C1569.0,801.4 1561.2,806.8 1554.1,817.2C1547.0,827.6 1538.7,846.7 1531.6,857.1C1524.5,867.5 1518.8,870.8 1511.7,879.5C1504.6,888.2 1495.4,901.2 1489.2,909.5C1483.0,917.8 1480.1,924.2 1474.3,929.4C1468.5,934.6 1461.8,939.8 1454.3,940.6C1446.8,941.4 1436.1,934.4 1429.4,934.4C1422.8,934.4 1419.8,940.6 1414.4,940.6C1409.0,940.6 1402.0,934.4 1397,934.4C1392.0,934.4 1390.7,937.9 1384.5,940.6C1378.3,943.3 1363.8,948.9 1359.6,950.6 M1695.6,155.2L1695.6,159.2 M783.6,257.3L794.8,269.7L809.7,283.4L829.6,303.4L847.1,318.3L868.2,332L879.5,339.5L891.9,347 M741.2,312.1L752.4,324.5L766.1,338.2L773.6,347 M777.3,288.4L789.8,305.9L797.3,318.3L803.5,324.5 M759.9,302.1L771.1,315.8L782.3,328.3L792.3,339.5L797.3,347 M825.9,257.3L829.6,264.8L838.4,267.3 M833.4,254.8L842.1,269.7L847.1,278.5L857,287.2L868.2,298.4L875.7,307.1L874.5,317.1 M855.8,247.3L860.8,259.8L865.8,272.2L868.2,281L877,289.7L888.2,299.6L898.1,309.6L908.1,319.6L916.8,329.5 M865.8,248.6L870.7,259.8L875.7,269.7L883.2,277.2L891.9,285.9L901.9,294.7L913.1,305.9L924.3,317.1L934.3,327 M875.7,239.9L880.7,252.3L883.2,257.3L889.4,254.8 M916.8,221.2L921.8,232.4L926.8,242.3L930.5,249.8L929.3,254.8L923,261L919.3,263.5 M915.6,259.8L919.3,264.8L929.3,264.8L941.7,272.2L954.2,279.7L970,287.2 M903.1,277.2L913.1,285.9L921.8,292.2L929.3,299.6L939.2,309.6L949.2,319.6L957.9,329.5 M741.2,312.1L752.4,304.6L764.9,295.9L777.3,288.4 M748.7,320.8L761.1,312.1L773.6,303.4L784.8,297.1 M756.2,329.5L767.4,322.1L779.8,313.3L792.3,305.9 M762.4,338.2L774.8,330.8L786,323.3L794.8,317.1 M792.3,267.3L799.7,261L808.5,256 M802.2,273.5L809.7,267.3L817.2,262.3 M803.5,288.4L812.2,281L822.2,274.7L824,282.2L822.2,288.4L813.4,295.9 M804.7,335.8L817.2,328.3L829.6,320.8L847.1,310.8L855.8,304.6L865.8,298.4 M835.9,303.4L844.6,297.1L854.5,289.7L867,281L879.5,273.5L889.4,267.3L899.4,261 M838.4,279.7L847.1,277.8 M870.7,278.5L880.7,273.5 M875.7,317.1L888.2,308.4L901.9,298.4L913.1,289.7L924.3,281L934.3,274.7 M869.5,329.5L879.5,323.3L890.7,320.8 M884.4,257.3L889.4,254.8L896.9,258.5 M886.9,237.4L899.4,233.6L913.1,229.9L916.8,237.4L919.3,243.6L915.6,249.8 M890.7,246.1L904.4,242.3L918.1,239.9 M900.6,247.3L911.8,251.1L921.8,254.8L929.3,253.6 M894.4,274.7L900.6,267.3L906.9,263.5L908.1,269.7L901.9,277.2 M925.5,231.1L935.5,224.9L946.7,218.7 M946.7,200L947.3,210L946.7,218.7L951.7,227.4L959.2,237.4 M940.5,272.2L951.7,262.3L962.9,252.3L970,247.3 M928,285.9L939.2,277.2L949.2,269.7L960.4,261L970,253.6 M944.2,303.4L952.9,294.7L961.7,287.2 M909.3,324.5L920.6,314.6L929.3,307.1L936.7,299.6 M832.1,254.8L850.8,251.1L854.5,264.8L842.1,269.7 M835.9,261L852.1,257.3 M890.7,320.8L899.4,328.3L904.4,334.5 M904.9,333.3L927.4,312.1L943.6,297.1L961,279.7L972.2,258.5L988.4,241.1L999.6,229.9L1009.6,219.9L1020.8,208.7L1027,202.5 M921.1,281L942.3,269.7L961,252.3L978.4,234.3L987.1,238.6L997.1,247.3 M987.1,219.9L1002.1,203.7L1007.1,201.2 M987.1,219.9L999.6,229.9L1009.6,236.1L1019.5,237.4 M1002.1,203.7L1015.8,212.5 M961,252.3L972.2,258.5L982.2,264.8L988.4,266L995.9,261L998.4,254.8L995.9,253.6L1012.1,237.4 M942.3,273.5L952.3,279.7L961,285.9L977.2,292.2L989.6,300.9L999.6,309.6L1008.3,319.6 M1019.5,237.4L1024.5,227.4L1029.5,223.7L1041.9,232.4L1022,233 M1019.5,237.4L1032,238L1049.4,236.7L1051.9,241.1L1046.9,247.3L1041.9,252.3 M1030.7,243.6L1048.2,243 M1033.2,248.6L1044.4,249.2L1030.7,243.6 M954.8,274.7L961,269.7L964.7,272.2L961,277.2L954.8,274.7 M974.7,317.1L975.9,308.4L980.9,302.1L987.1,307.1L993.4,314.6L999.6,318.3 M982.2,319.6L983.4,312.1L988.4,310.8L992.1,315.8L989.6,318.3 M953.5,334.5L956,324.5L959.7,319.6L969.7,320.8L982.2,323.3L993.4,325.8L999.6,318.3L1003.3,315.8 M953.5,334.5L963.5,335.8L977.2,330.8L989.6,325.8 M963.5,338.2L967.2,322.1 M923.6,335.8L933.6,338.2L924.9,342L936.1,344.5 M890,236.1L902.5,232.4L912.4,229.9L916.2,237.4L918.6,243.6L914.9,249.8 M890,244.8L902.5,242.3L917.4,239.9 M900,247.3L911.2,251.1L921.1,254.8L928.6,253.6L932.3,249.8L929.9,242.3L926.1,234.9L924.9,229.9L931.1,226.2L946,218.7L947.3,210L943.6,200 M916.2,218.7L921.1,229.9L924.9,229.9 M946,218.7L954.8,229.9L959.7,237.4 M948.5,233L954.8,229.9 M914.9,258.5L919.9,263.5L927.4,262.3L936.1,267.3L947.3,276 M893.7,273.5L900,267.3L906.2,266L908.7,269.7L902.5,276L897.5,279.7L893.7,273.5 M890,264.8L900,261L908.7,262.3L919.9,263.5 M933.6,274.7L921.1,285.9 M896.2,200L903.7,207.5L906.2,214.9L916.2,218.7 M999.6,202.5L1004.6,201.2L1014.5,208.7L1019.5,210 M794.8,340L804.7,350L817.2,363.7L829.6,376.1L842.1,387.3L852.1,394.8 M839.6,340L849.6,350L860.8,361.2L872,371.1L880.7,378.6 M817.2,340L824.7,347.5L832.1,354.9L838.4,361.2 M799.7,354.9L807.2,363.7L817.2,373.6L829.6,384.8 M757.4,358.7L766.1,367.4L772.3,371.1L768.6,377.4L763.6,383.6L754.9,394.8L748.7,404.8L742.5,414.7L735,425.9L730,432.2 M757.4,358.7L773.6,348.7L777.3,345 M766.1,367.4L782.3,356.2L799.7,346.2L804.7,350 M772.3,371.1L786,362.4L799.7,354.9L811,347.5 M730,363.7L742.5,369.9L763.6,381.1L784.8,393.6 M778.6,377.4L789.8,387.3L794.8,381.1L807.2,388.6 M778.6,377.4L784.8,374.9L794.8,381.1 M789.8,376.1L799.7,369.9L811,364.9 M797.3,378.6L809.7,371.1 M817.2,363.7L827.1,356.2L837.1,350L847.1,342.5 M827.1,369.9L838.4,362.4L849.6,353.7L855.8,350 M852.1,394.8L862,383.6L872,371.1L885.7,357.4L895.6,347.5L904.4,340 M885.7,371.1L895.6,361.2L906.9,351.2L911.8,345L919.3,343.7L935.5,345 M889.4,350L896.9,356.2 M754.9,394.8L767.4,402.3L782.3,411 M757.4,414.7L762.4,404.8L767.4,414.7L771.1,407.3L776.1,414.7L767.4,419.7 M742.5,474.5L748.7,468.3L754.9,474.5 M730,472L742.5,474.5L754.9,475.8 M835.9,421L848.3,416L867,409.7L891.9,402.3L904.4,399.8 M833.4,427.2L848.3,422.2L867,417.2L885.7,413.5L916.8,404.8L929.3,402.3L941.7,407.3L949.2,419.7L954.2,434.7L951.7,447.1L941.7,452.1L929.3,457.1L924.3,458.3 M842.1,429.7L854.5,427.2L873.2,422.2L891.9,419.7L910.6,416 M859.5,434.7L873.2,430.9L891.9,425.9L904.4,424.7L916.8,421 M824.7,434.7L822.2,445.9L820.9,458.3L823.4,470.8L829.6,474.5L842.1,473.3 M829.6,437.1L837.1,433.4L844.6,438.4L852.1,444.6L860.8,452.1L867,458.3 M829.6,439.6L828.4,447.1L834.6,453.3L842.1,452.1L847.1,445.9 M877,438.4L889.4,439.6L904.4,438.4L916.8,439.6L924.3,445.9L929.3,452.1L924.3,458.3L935.5,467L946.7,478.2L954.2,482L970,482 M898.1,425.9L901.9,434.7L904.4,438.4 M914.3,419.7L918.1,432.2L904.4,438.4 M929.3,409.7L934.3,424.7L940.5,439.6L946.7,445.9 M934.3,424.7L946.7,424.7 M931.8,432.2L944.2,429.7 M848.3,416L852.1,424.7L855.8,432.2 M844.6,421L848.3,429.7 M881.9,437.1L896.9,430.9L900.6,437.1 M824.7,462.1L832.1,467L842.1,472L852.1,479.5L859.5,487 M867,464.5L877,470.8L885.7,479.5L890.7,487 M860.8,475.8L873.2,468.3L877,470.8L864.5,477 M854.5,445.9L864.5,439.6L867,443.4L858.3,449.6 M839.6,452.1L849.6,459.6L860.8,469.5 M822.3,440L821.1,452.5L821.1,464.9L827.3,471.1L836,473.6L844.8,471.1 M829.8,445L828.6,458.7L832.3,464.9L839.8,463.7 M847.3,445L857.2,452.5L867.2,462.4L874.7,468.6L872.2,471.1L864.7,473.6L857.2,479.9L849.7,476.1L842.3,471.1 M867.2,462.4L872.2,450L875.9,440 M869.7,456.2L879.6,463.7L885.9,469.9L889.6,477.4L890.8,482.3 M882.1,440L898.3,445L910.8,448.7L923.2,458.7L933.2,468.6L944.4,477.4L953.1,481.1L976.8,483.6L981.8,484.8L994.2,496L1005.4,506 M910.8,448.7L920.7,445L929.5,450L923.2,458.7L935.7,454.9L945.6,453.7L954.4,447.5L958.1,440 M827.3,487.3L834.8,478.6L842.3,474.9L849.7,477.4L859.7,486.1L870.9,492.3L878.4,502.3L883.4,513.5L884.6,524.7L885.9,537.1L887.1,552.1L885.9,557.1L859.7,565.8L849.7,569.5 M839.8,492.3L849.7,484.8L854.7,487.3L864.7,494.8L859.7,499.8L849.7,504.8L844.8,498.5L839.8,492.3 M827.3,487.3L833.6,494.8L842.3,503.5L848.5,502.3L847.3,509.7L839.8,519.7L834.8,529.7L829.8,539.6L822.3,547.1L813.6,553.3L813.6,558.3L827.3,560.8L834.8,557.1 M842.3,517.2L854.7,509.7L869.7,519.7L877.1,527.2L880.9,532.2L885.9,537.1 M841,527.2L849.7,521L857.2,524.7L849.7,532.2L841,527.2 M847.3,537.1L859.7,528.4L867.2,521 M822.3,545.9L832.3,549.6L838.5,554.6L842.3,564.5L849.7,569.5 M837.3,534.7L844.8,543.4L849.7,552.1L859.7,565.8 M844.8,552.1L854.7,548.4L867.2,544.6L878.4,542.1 M847.3,557.1L861,553.3L877.1,548.4 M849.7,552.1L854.7,563.3 M854.7,550.8L859.7,562.1 M859.7,549.6L864.7,560.8 M864.7,548.4L869.7,558.3 M869.7,545.9L874.7,555.8 M857.2,537.1L864.7,525.9L869.7,519.7 M862.2,539.6L872.2,525.9 M885.9,527.2L904.5,519.7L908.3,517.2L914.5,514.7L917,522.2L913.3,527.2 M885.9,533.4L905.8,525.9L910.8,529.7 M887.1,538.4L904.5,532.2L909.5,534.7 M888.4,543.4L909.5,535.9 M904.5,519.7L908.3,529.7 M872.2,504.8L877.1,502.3L882.1,509.7L879.6,517.2L874.7,512.2L872.2,504.8 M878.4,529.7L880.9,539.6L879.6,552.1L880.9,555.8" stroke="#c0c0c5" stroke-width="1.7" stroke-dasharray="1.7 1.4" stroke-linecap="butt"/></g>
<path d="M1065,1030L1119,935L1217,964L1162,1049" fill="none" stroke="#ff2a1a" stroke-width="1"/>
<g opacity=".999"><circle cx="855.5" cy="308.3" r="4.1" fill="#3f8b47" stroke="#fff" stroke-width="1.2"/>
<circle cx="884.3" cy="423.3" r="4.1" fill="#3f8b47" stroke="#fff" stroke-width="1.2"/>
<circle cx="1152.5" cy="503.4" r="4.1" fill="#3f8b47" stroke="#fff" stroke-width="1.2"/>
<circle cx="1161.5" cy="649.3" r="4.1" fill="#3f8b47" stroke="#fff" stroke-width="1.2"/>
<circle cx="982.3" cy="845.3" r="4.1" fill="#3f8b47" stroke="#fff" stroke-width="1.2"/>
<circle cx="1668.5" cy="536.3" r="4.1" fill="#3f8b47" stroke="#fff" stroke-width="1.2"/>
<text x="859" y="303" font-family="Liberation Sans,sans-serif" font-size="16" font-style="italic" fill="#fff" stroke="#5f5f5f" stroke-width="2.6" stroke-linejoin="round" style="paint-order:stroke">Swellendam</text>
<text x="888" y="417" font-family="Liberation Sans,sans-serif" font-size="14" font-style="normal" fill="#fff" stroke="#5f5f5f" stroke-width="2.6" stroke-linejoin="round" style="paint-order:stroke">Railton</text>
<text x="1155" y="498.5" font-family="Liberation Sans,sans-serif" font-size="12" font-style="normal" fill="#fff" stroke="#5f5f5f" stroke-width="2.6" stroke-linejoin="round" style="paint-order:stroke">Bontebok National Park Entrance Gate</text>
<text x="1165" y="644.5" font-family="Liberation Sans,sans-serif" font-size="12" font-style="normal" fill="#fff" stroke="#5f5f5f" stroke-width="2.6" stroke-linejoin="round" style="paint-order:stroke">Bontebok National Park Reception &amp; Shop</text>
<text x="986" y="841.2" font-family="Liberation Sans,sans-serif" font-size="10" font-style="normal" fill="#fff" stroke="#5f5f5f" stroke-width="2.6" stroke-linejoin="round" style="paint-order:stroke">Lang Elsies Kraal Rest Camp</text>
<text x="1673" y="531" font-family="Liberation Sans,sans-serif" font-size="16" font-style="italic" fill="#fff" stroke="#5f5f5f" stroke-width="2.6" stroke-linejoin="round" style="paint-order:stroke">Buffeljagsrivier</text>
</g></svg>
</div>
<div id="status"><span style="left:6px;">Validation finished.</span><a style="left:955px;color:#0000ee;text-decoration:underline">There is a new plugin available</a><div class="abs" style="left:1143px;top:7px;width:20px;height:20px;border:1px solid #8c8c8c;background:#f4f4f4"></div><svg class="ic" style="left:1144px;top:8px;width:18px;height:18px" viewBox="0 0 18 18"><path d="M3,4C6,1 11,2 12,6C13,9 12,13 9,15C6,13 4,10 3,4Z" fill="#555" stroke="#222" stroke-width=".8"/><circle cx="9" cy="11" r="3" fill="#ddd" stroke="#222" stroke-width=".8"/><path d="M5,3L14,14M12,2L15,6" stroke="#222" stroke-width="1"/><circle cx="7" cy="6" r="1.4" fill="#fff"/></svg><span style="left:1172px;">Coordinate:</span><div class="abs" style="left:1249px;top:6px;width:300px;height:20px;border:1px solid #9b9b9b;border-top-color:#7f7f7f;background:#fff;text-align:center;line-height:18px;box-shadow:inset 0 1px 1px rgba(0,0,0,.12)">20.4733,-34.0967</div><span style="left:1559px;">Scale</span><div class="abs" style="left:1604px;top:9px;width:93px;height:16px;border:1px solid #a5a5a5;border-top-color:#8a8a8a;border-radius:0 3px 3px 0;background:#fff;line-height:14px;padding-left:1px">1:19951<div class="abs" style="right:0;top:0;width:14px;height:14px;border-left:1px solid #c5c5c5;background:linear-gradient(#fff,#eee)"></div><div class="abs" style="right:3px;top:6px;width:0;height:0;border-top:4px solid #555;border-left:3.5px solid transparent;border-right:3.5px solid transparent"></div></div><div class="abs" style="left:1704px;top:7px;width:20px;height:20px;border:1px solid #8c8c8c;background:#f1f1f1"></div><svg class="ic" style="left:1705px;top:8px;width:18px;height:18px" viewBox="0 0 18 18"><path d="M3,16C7,15 13,10 16,2C15,9 11,15 5,17Z" fill="#8a8a8a" stroke="#666" stroke-width=".6"/><circle cx="6.4" cy="5.6" r="3.6" fill="#fff" stroke="#d6202a" stroke-width="1.4"/><path d="M4,3.2L8.8,8" stroke="#d6202a" stroke-width="1.4"/></svg><div class="abs" style="left:1730px;top:10px;width:14px;height:14px;border:1px solid #7f858c;border-radius:3px;background:linear-gradient(#fdfdfd,#dfe3e8)"></div><svg class="ic" style="left:1729px;top:5px;width:20px;height:20px" viewBox="0 0 20 20"><path d="M4.6,10.6L8,15.6C9.6,10.6 12,6.6 16,2.6" fill="none" stroke="#1a1a1a" stroke-width="2.2" stroke-linecap="round" stroke-linejoin="round"/></svg><span style="left:1749px;">Render</span><span style="left:1797px;color:#3c3c3c">EPSG:4326</span><div class="abs" style="left:1874px;top:7px;width:20px;height:19px;border:1px solid #8c8c8c;background:#fafafa"></div><svg class="ic" style="left:1875px;top:8px;width:18px;height:17px" viewBox="0 0 18 17"><ellipse cx="9" cy="8.5" rx="7.4" ry="7" fill="#e3e3e3" stroke="#7a7a7a" stroke-width="1.4"/><ellipse cx="9" cy="8.5" rx="3.4" ry="7" fill="none" stroke="#8a8a8a" stroke-width="1.1"/><path d="M1.6,8.5H16.4M3,4.6H15M3,12.4H15" stroke="#8a8a8a" stroke-width="1.1"/></svg><svg class="ic" style="left:1907px;top:22px;width:12px;height:12px" viewBox="0 0 12 12"><path d="M1.6,10.6L10.6,1.6M5.6,10.6L10.6,5.6M9.4,10.6L10.6,9.4" stroke="#7a7a7a" stroke-width="1" stroke-dasharray="1 .4"/></svg></div>
</div>
</body>
</html>
